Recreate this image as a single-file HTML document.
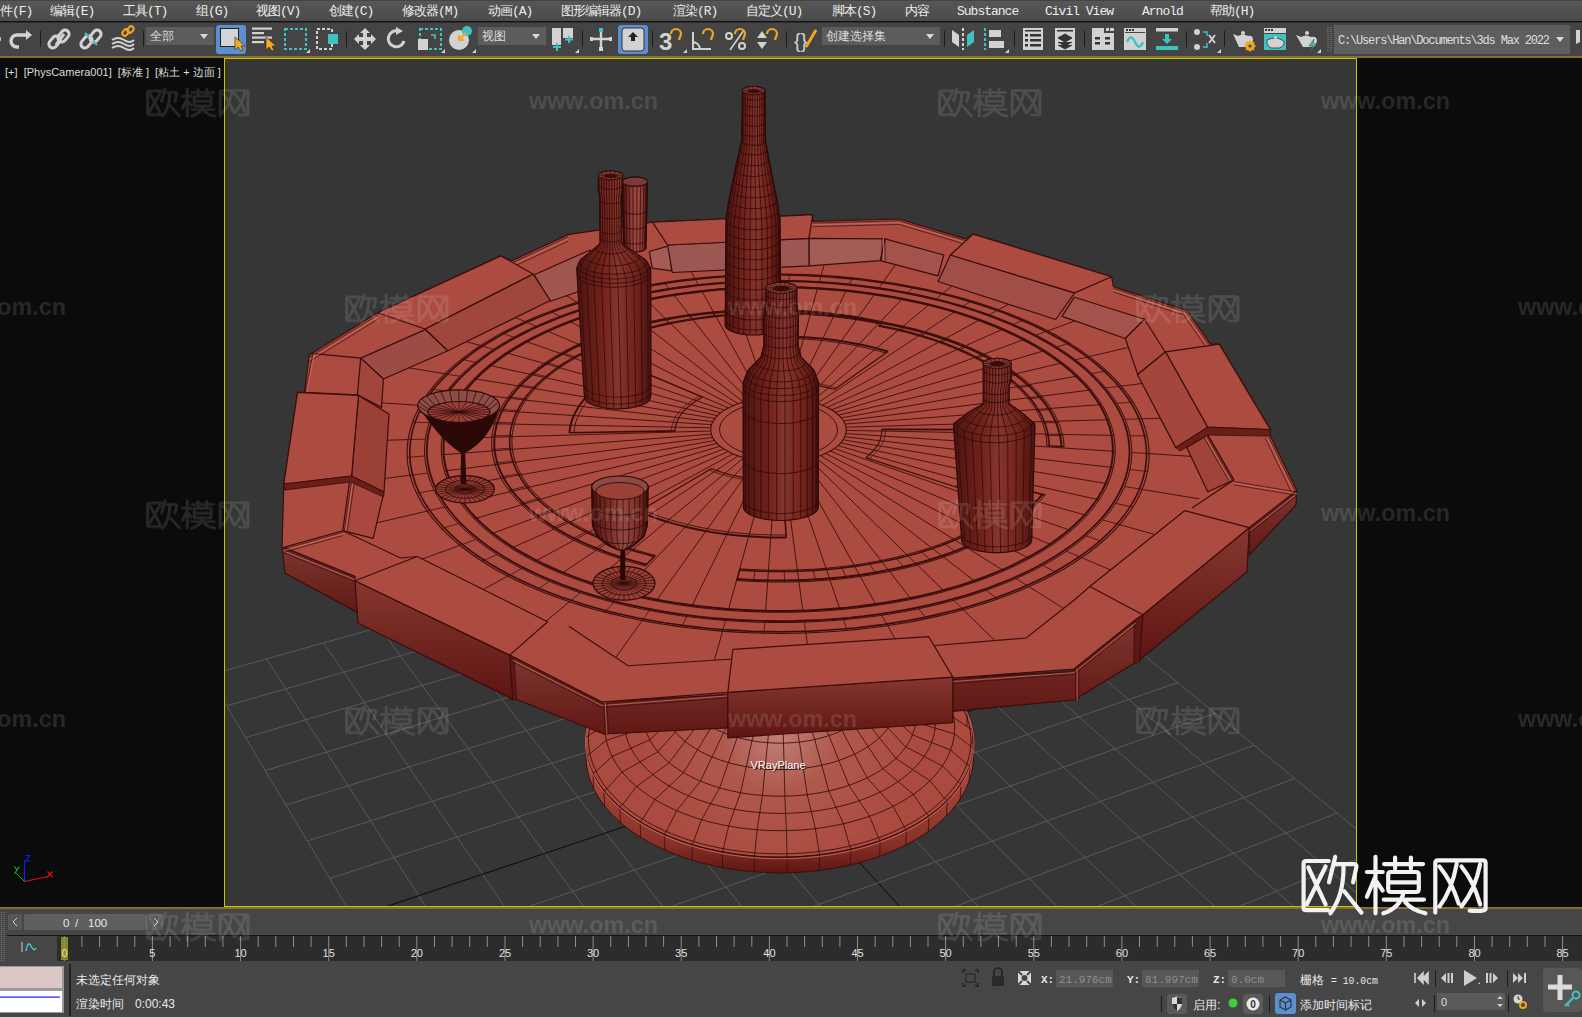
<!DOCTYPE html>
<html><head><meta charset="utf-8">
<style>
*{margin:0;padding:0;box-sizing:border-box}
html,body{width:1582px;height:1017px;overflow:hidden;background:#444;font-family:"Liberation Sans",sans-serif}
.abs{position:absolute}
#menubar{left:0;top:0;width:1582px;height:21px;background:linear-gradient(#3a3a3a 0px,#565656 1.5px,#4b4b4b 21px)}
#menubar span{position:absolute;top:4px;line-height:16px;font-family:"Liberation Mono",monospace;font-size:13px;color:#ececec;white-space:nowrap;letter-spacing:-1px}
#menubar .cj{width:12px}
#mbline{left:0;top:21px;width:1582px;height:2px;background:linear-gradient(#111 0,#111 1px,#2e2e2e 1px)}
#toolbar{left:0;top:23px;width:1582px;height:33px;background:#444}
.sep{position:absolute;top:31px;width:1px;height:16px;background:#1a1a1a}
.dd{position:absolute;top:27px;height:18px;background:#5c5c5c;color:#dcdcdc;font-size:12px;line-height:18px;padding-left:4px;white-space:nowrap}
.dd:after{content:"";position:absolute;right:6px;top:7px;border-left:4px solid transparent;border-right:4px solid transparent;border-top:5px solid #d8d8d8}
.actbtn{position:absolute;top:25px;width:30px;height:29px;background:#5b8fd0;border-radius:3px}
#olive1{left:0;top:56px;width:1582px;height:2px;background:#84712e}
#vp{left:0;top:58px;width:1582px;height:849px;background:#0b0b0b;overflow:hidden}
#olive2{left:0;top:907px;width:1582px;height:2px;background:#84712e}
#timeline{left:0;top:909px;width:1582px;height:108px;background:#464646}
.cj{display:inline-block;width:1em;font-style:normal;text-align:center}
</style></head><body>

<div id="menubar" class="abs">
<span style="left:0"><i class="cj">件</i>(F)</span>
<span style="left:50px"><i class="cj">编</i><i class="cj">辑</i>(E)</span>
<span style="left:123px"><i class="cj">工</i><i class="cj">具</i>(T)</span>
<span style="left:196px"><i class="cj">组</i>(G)</span>
<span style="left:256px"><i class="cj">视</i><i class="cj">图</i>(V)</span>
<span style="left:329px"><i class="cj">创</i><i class="cj">建</i>(C)</span>
<span style="left:402px"><i class="cj">修</i><i class="cj">改</i><i class="cj">器</i>(M)</span>
<span style="left:488px"><i class="cj">动</i><i class="cj">画</i>(A)</span>
<span style="left:561px"><i class="cj">图</i><i class="cj">形</i><i class="cj">编</i><i class="cj">辑</i><i class="cj">器</i>(D)</span>
<span style="left:673px"><i class="cj">渲</i><i class="cj">染</i>(R)</span>
<span style="left:746px"><i class="cj">自</i><i class="cj">定</i><i class="cj">义</i>(U)</span>
<span style="left:832px"><i class="cj">脚</i><i class="cj">本</i>(S)</span>
<span style="left:905px"><i class="cj">内</i><i class="cj">容</i></span>
<span style="left:957px">Substance</span>
<span style="left:1045px">Civil View</span>
<span style="left:1142px">Arnold</span>
<span style="left:1210px"><i class="cj">帮</i><i class="cj">助</i>(H)</span>
</div>
<div id="mbline" class="abs"></div>
<div id="toolbar" class="abs"></div>
<div class="dd" style="left:146px;width:68px"><i class="cj">全</i><i class="cj">部</i></div>
<div class="dd" style="left:478px;width:68px"><i class="cj">视</i><i class="cj">图</i></div>
<div class="dd" style="left:822px;width:118px"><i class="cj">创</i><i class="cj">建</i><i class="cj">选</i><i class="cj">择</i><i class="cj">集</i></div>

<svg class="abs" style="left:0;top:0" width="1582" height="56" viewBox="0 0 1582 56">
<g fill="none" stroke="#d2d2d2" stroke-width="3" stroke-linecap="butt">
<!-- partial icon at left -->
<circle cx="-2" cy="39" r="3" fill="#d2d2d2" stroke="none"/>
<!-- redo -->
<path d="M19 47 L17 47 A6 6 0 0 1 17 35 L27 35" stroke-width="3.4"/>
<path d="M26 30 L32 35 L26 40 Z" fill="#d2d2d2" stroke="none"/>
<!-- link -->
<path d="M56 45 L64 34" stroke-width="3"/>
<rect x="48" y="38" width="13" height="8" rx="4" transform="rotate(-50 54.5 42)"/>
<rect x="57" y="32" width="13" height="8" rx="4" transform="rotate(-50 63.5 36)"/>
<!-- unlink -->
<rect x="80" y="38" width="13" height="8" rx="4" transform="rotate(-50 86.5 42)"/>
<rect x="89" y="32" width="13" height="8" rx="4" transform="rotate(-50 95.5 36)"/>
<path d="M85 33 L89 37 M93 41 L97 45" stroke="#3ec3c3" stroke-width="2.2"/>
<!-- bind -->
<path d="M112 40 Q118 36 124 40 T134 40 M112 44 Q118 40 124 44 T134 44 M112 48 Q118 44 124 48 T134 48" stroke-width="1.8"/>
<rect x="122" y="30" width="7" height="5" rx="2.5" stroke="#f0a623" stroke-width="2" transform="rotate(-50 125.5 32.5)"/>
<rect x="127" y="27" width="7" height="5" rx="2.5" stroke="#f0a623" stroke-width="2" transform="rotate(-50 130.5 29.5)"/>
</g>
<g fill="#1c1c1c">
<rect x="40" y="31" width="1" height="16"/><rect x="143" y="31" width="1" height="16"/>
<rect x="346" y="31" width="1" height="16"/><rect x="582" y="31" width="1" height="16"/>
<rect x="652" y="31" width="1" height="16"/><rect x="786" y="31" width="1" height="16"/>
<rect x="944" y="31" width="1" height="16"/><rect x="1014" y="31" width="1" height="16"/>
<rect x="1084" y="31" width="1" height="16"/><rect x="1186" y="31" width="1" height="16"/>
<rect x="1224" y="31" width="1" height="16"/>
</g>
<!-- select object active -->
<rect x="216" y="25" width="30" height="29" rx="3" fill="#5b8fd0"/>
<rect x="220.5" y="28.5" width="18" height="18" fill="#d4d4d4" stroke="#222" stroke-width="1"/>
<path d="M235 37 L235 50 L238 47 L241 51 L243 50 L241 46 L245 46 Z" fill="#f5ad1e" stroke="#222" stroke-width="0.6"/>
<!-- select by name -->
<g fill="#d2d2d2"><rect x="252" y="27.5" width="20" height="2.2"/><rect x="252" y="32" width="12" height="2.2"/><rect x="252" y="36.5" width="20" height="2.2"/><rect x="252" y="41" width="12" height="2.2"/></g>
<path d="M266 37 L266 50 L269 47 L272 51 L274 50 L272 46 L276 46 Z" fill="#f5ad1e" stroke="#222" stroke-width="0.6"/>
<!-- rect region -->
<rect x="285" y="29" width="21" height="20" fill="none" stroke="#3ec3c3" stroke-width="2" stroke-dasharray="3 2"/>
<path d="M306 53 L310 53 L310 49 Z" fill="#d2d2d2"/>
<!-- window crossing -->
<rect x="317" y="29" width="15" height="20" fill="none" stroke="#d2d2d2" stroke-width="2" stroke-dasharray="3 2"/>
<rect x="328" y="34" width="10" height="10" fill="#3ec3c3"/>
<!-- move -->
<g fill="#d2d2d2"><path d="M365 28 L370 33 L367 33 L367 37 L371 37 L371 34 L376 39 L371 44 L371 41 L367 41 L367 45 L370 45 L365 50 L360 45 L363 45 L363 41 L359 41 L359 44 L354 39 L359 34 L359 37 L363 37 L363 33 L360 33 Z"/></g>
<!-- rotate -->
<path d="M404 41 A8 8 0 1 1 398 31" fill="none" stroke="#d2d2d2" stroke-width="3"/>
<path d="M396 27 L403 31 L396 35 Z" fill="#d2d2d2"/>
<!-- scale -->
<rect x="420" y="29" width="21" height="20" fill="none" stroke="#3ec3c3" stroke-width="2" stroke-dasharray="3 2"/>
<rect x="418" y="39" width="10" height="11" fill="#d2d2d2"/>
<path d="M431 35 L435 35 L435 39" fill="none" stroke="#3ec3c3" stroke-width="1.6"/>
<path d="M441 53 L445 53 L445 49 Z" fill="#d2d2d2"/>
<!-- placement -->
<circle cx="459" cy="40" r="10" fill="#d2d2d2"/>
<circle cx="467" cy="31" r="5" fill="#3ec3c3"/>
<path d="M466 33 L460 39 M459 35 L459 40 L464 40" fill="none" stroke="#f0a623" stroke-width="2"/>
<path d="M472 53 L476 53 L476 49 Z" fill="#d2d2d2"/>
<!-- pivot -->
<rect x="552" y="28" width="9" height="17" fill="#d2d2d2"/><rect x="563" y="28" width="10" height="10" fill="#d2d2d2"/>
<path d="M557 43 L557 51 M553 47 L561 47 M569 36 L569 43 M565 39.5 L573 39.5" stroke="#3ec3c3" stroke-width="2"/>
<path d="M575 53 L579 53 L579 49 Z" fill="#d2d2d2"/>
<!-- manipulate -->
<path d="M601 32 L601 50 M590 39 L612 39" stroke="#d2d2d2" stroke-width="2.4"/>
<rect x="599" y="28" width="4" height="4" fill="#3ec3c3"/><rect x="590" y="37" width="3" height="4" fill="#d2d2d2"/><rect x="609" y="37" width="3" height="4" fill="#d2d2d2"/><rect x="599" y="47" width="4" height="4" fill="#d2d2d2"/>
<!-- kbd override active -->
<rect x="618" y="25" width="30" height="29" rx="3" fill="#5b8fd0"/>
<rect x="622" y="28" width="22" height="23" rx="3" fill="#d2d2d2" stroke="#333" stroke-width="1"/>
<path d="M633 32 L638 37 L635 37 L635 41 L631 41 L631 37 L628 37 Z" fill="#222"/>
<!-- snaps -->
<text x="659" y="50" font-family="Liberation Sans" font-weight="bold" font-size="24" fill="#d2d2d2">3</text>
<path d="M671 34 A5 5 0 0 1 681 34 L679 40" fill="none" stroke="#f0a623" stroke-width="2.2"/>
<path d="M683 53 L687 53 L687 49 Z" fill="#d2d2d2"/>
<path d="M693 32 L693 49 L711 49 M693 42 A8 8 0 0 1 700 49" fill="none" stroke="#d2d2d2" stroke-width="2"/>
<path d="M703 34 A5 5 0 0 1 713 34 L711 40" fill="none" stroke="#f0a623" stroke-width="2.2"/>
<circle cx="729" cy="36" r="3" fill="none" stroke="#d2d2d2" stroke-width="2"/><circle cx="742" cy="46" r="3" fill="none" stroke="#d2d2d2" stroke-width="2"/>
<path d="M730 50 L744 30" stroke="#d2d2d2" stroke-width="1.6"/>
<path d="M735 34 A5 5 0 0 1 745 34 L743 40" fill="none" stroke="#f0a623" stroke-width="2.2"/>
<path d="M757 38 L762 31 L767 38 Z M757 42 L767 42 L762 49 Z" fill="#d2d2d2"/>
<path d="M767 34 A5 5 0 0 1 777 34 L775 40" fill="none" stroke="#f0a623" stroke-width="2.2"/>
<!-- {} -->
<text x="794" y="48" font-family="Liberation Sans" font-size="20" fill="#d2d2d2">{}</text>
<path d="M806 47 L816 30" stroke="#f0a623" stroke-width="3"/>
<!-- mirror -->
<path d="M952 30 L959 35 L959 47 L952 42 Z" fill="#d2d2d2"/>
<path d="M963 28 L963 50" stroke="#d2d2d2" stroke-width="2" stroke-dasharray="3 2"/>
<path d="M974 30 L967 35 L967 47 L974 42 Z" fill="#3ec3c3"/>
<!-- align -->
<path d="M985 28 L985 50" stroke="#3ec3c3" stroke-width="2" stroke-dasharray="3 2"/>
<rect x="989" y="30" width="12" height="7" fill="#d2d2d2"/><rect x="989" y="41" width="15" height="7" fill="#d2d2d2"/>
<path d="M1005 53 L1009 53 L1009 49 Z" fill="#d2d2d2"/>
<!-- scene explorer -->
<rect x="1023" y="28" width="20" height="22" fill="#d2d2d2"/>
<g fill="#333"><rect x="1025" y="30" width="16" height="1.5"/><rect x="1025" y="34" width="3" height="2.5"/><rect x="1030" y="34" width="11" height="2.5"/><rect x="1025" y="39" width="3" height="2.5"/><rect x="1030" y="39" width="11" height="2.5"/><rect x="1025" y="44" width="3" height="2.5"/><rect x="1030" y="44" width="11" height="2.5"/></g>
<!-- layer explorer -->
<rect x="1055" y="28" width="20" height="22" fill="#d2d2d2"/>
<rect x="1057" y="30" width="16" height="1.5" fill="#333"/>
<path d="M1058 38 L1065 34 L1072 38 L1065 42 Z M1058 42 L1065 46 L1072 42 M1058 45 L1065 49 L1072 45" fill="#333" stroke="#333" stroke-width="1"/>
<!-- ribbon -->
<path d="M1092 28 L1104 28 L1104 33 L1114 33 L1114 50 L1092 50 Z" fill="#d2d2d2"/>
<rect x="1106" y="28" width="3" height="3" fill="#d2d2d2"/><rect x="1110" y="28" width="4" height="3" fill="#d2d2d2"/>
<g fill="#333"><rect x="1095" y="37" width="5" height="2.5"/><rect x="1105" y="37" width="5" height="2.5"/><rect x="1095" y="42" width="5" height="2.5"/><rect x="1105" y="42" width="5" height="2.5"/></g>
<!-- curve editor -->
<rect x="1124" y="28" width="22" height="22" fill="#d2d2d2"/>
<rect x="1125" y="32" width="20" height="1" fill="#444"/>
<g fill="#333"><rect x="1126" y="29" width="2" height="2"/><rect x="1129" y="29" width="2" height="2"/><rect x="1132" y="29" width="2" height="2"/></g>
<path d="M1127 42 Q1131 33 1135 42 T1143 42" fill="none" stroke="#3ec3c3" stroke-width="2.4"/>
<!-- dope download -->
<rect x="1156" y="28" width="22" height="3.5" fill="#d2d2d2"/>
<rect x="1156" y="46" width="22" height="4" fill="#3ec3c3"/>
<path d="M1165 34 L1169 34 L1169 39 L1172 39 L1167 44 L1162 39 L1165 39 Z" fill="#3ec3c3"/>
<!-- schematic -->
<circle cx="1197" cy="32" r="3" fill="#d2d2d2"/><circle cx="1197" cy="47" r="3" fill="#d2d2d2"/>
<path d="M1203 32 L1207 32 L1207 36 M1203 47 L1207 47 L1207 43" fill="none" stroke="#3ec3c3" stroke-width="1.5"/>
<path d="M1209 35 L1215 43 M1215 35 L1209 43" stroke="#d2d2d2" stroke-width="2"/>
<path d="M1217 53 L1221 53 L1221 49 Z" fill="#d2d2d2"/>
<!-- teapots -->
<g fill="#d2d2d2">
<path d="M1233 34 L1238 36 Q1243 33 1248 36 Q1253 35 1253 40 Q1252 44 1249 45 L1247 47 L1239 47 Z"/><circle cx="1243" cy="33" r="2"/>
</g>
<circle cx="1250" cy="46" r="3.6" fill="none" stroke="#f0a623" stroke-width="2.4"/>
<path d="M1250 40.5 L1250 51.5 M1244.5 46 L1255.5 46 M1246 42 L1254 50 M1254 42 L1246 50" stroke="#f0a623" stroke-width="1.5"/>
<circle cx="1250" cy="46" r="1.6" fill="#444"/>
<rect x="1264" y="28" width="22" height="5" fill="#d2d2d2"/><g fill="#333"><rect x="1265" y="29" width="2" height="2"/><rect x="1268" y="29" width="2" height="2"/><rect x="1271" y="29" width="2" height="2"/></g>
<rect x="1264" y="34" width="22" height="16" fill="#3ec3c3"/>
<path d="M1267 40 Q1275 36 1282 40 Q1285 41 1284 44 Q1282 48 1279 48 L1271 48 Q1268 47 1267 43 Z" fill="#d2d2d2" stroke="#333" stroke-width="0.8"/><circle cx="1275.5" cy="37.5" r="1.5" fill="#d2d2d2"/>
<g fill="#d2d2d2">
<path d="M1296 35 L1301 37 Q1306 34 1311 37 Q1317 36 1317 41 Q1316 45 1313 46 L1311 47 L1303 47 Z"/><circle cx="1307" cy="33" r="2"/>
</g>
<path d="M1314 39 L1309 46 L1313 46 L1310 51 L1317 44 L1313 44 Z" fill="#3ec3c3" stroke="#444" stroke-width="0.6"/>
<path d="M1317 53 L1321 53 L1321 49 Z" fill="#d2d2d2"/>
<path d="M1328 27 L1328 53 M1331 27 L1331 53" stroke="#9a9a9a" stroke-width="0.8" stroke-dasharray="1 1"/>
<!-- path dropdown -->
<rect x="1334" y="25" width="236" height="29" fill="#5e5e5e"/>
<text x="1338" y="44" font-family="Liberation Mono" font-size="12" fill="#dedede" textLength="212">C:\Users\Han\Documents\3ds Max 2022</text>
<path d="M1556 37 L1564 37 L1560 42 Z" fill="#d8d8d8"/>
<path d="M1576 30 L1580 30 L1580 42 L1576 44 Z" fill="#d2d2d2"/>
</svg>

<div id="olive1" class="abs"></div><div id="vp" class="abs"></div><div id="olive2" class="abs"></div>
<svg class="abs" style="left:0;top:0" width="1582" height="1017" viewBox="0 0 1582 1017">
<defs>
<clipPath id="cf"><rect x="225" y="59" width="1131" height="847"/></clipPath>
<linearGradient id="sideg" x1="0" y1="0" x2="0" y2="1"><stop offset="0" stop-color="#7d3630"/><stop offset="1" stop-color="#621814"/></linearGradient>
<linearGradient id="blkg" x1="0" y1="0" x2="0" y2="1"><stop offset="0" stop-color="#86372f"/><stop offset="1" stop-color="#5e1512"/></linearGradient>
<linearGradient id="pinkg" x1="0" y1="0" x2="0" y2="1"><stop offset="0" stop-color="#a8605a"/><stop offset="1" stop-color="#95504b"/></linearGradient>
<radialGradient id="pedg" cx="0.5" cy="0.0" r="0.75"><stop offset="0" stop-color="#b86e68"/><stop offset="0.45" stop-color="#ad4d42"/><stop offset="1" stop-color="#ab4a3e"/></radialGradient>
<symbol id="logo" viewBox="0 0 190 61" overflow="visible"><path d="M28.1,6.0 L5.4,6.0 Q3.0,6.0 3.0,8.5 L3.0,53.0 Q3.0,55.2 5.4,55.2 L27.4,55.2 M7.8,12.5 L25.0,49.4 M25.0,11.5 L6.4,49.0 M34.6,1.9 L28.4,27.3 M33.9,9.1 L53.9,9.1 Q56.0,9.1 55.8,12.0 L52.5,27.3 M42.9,10.8 Q43.4,40.0 29.8,58.3 M43.6,36.3 L60.8,57.6 M66.3,17.0 L82.1,17.0 M74.9,1.9 L74.9,58.3 M74.9,21.2 L66.3,41.8 M76.6,27.3 L82.1,35.6 M83.5,9.1 L122.4,9.1 M94.5,2.6 L94.5,13.6 M110.3,2.6 L110.3,13.6 M90.4,17.0 L115.4,17.0 Q118.2,17.0 118.2,20.0 L118.2,34.0 Q118.2,37.0 115.4,37.0 L90.4,37.0 Q87.6,37.0 87.6,34.0 L87.6,20.0 Q87.6,17.0 90.4,17.0 Z M87.6,27.3 L118.2,27.3 M83.1,44.6 L123.4,44.6 M103.1,37.0 Q99.4,53.0 82.8,58.3 M104.8,47.3 Q111.4,55.0 124.8,58.3 M134.7,57.6 L134.7,8.0 Q134.7,5.3 137.4,5.3 L182.4,5.3 Q185.0,5.3 185.0,8.0 L185.0,54.0 Q184.4,57.0 169.1,55.6 M138.9,11.5 Q151.4,27.0 158.1,48.7 M156.1,8.8 Q151.4,35.0 138.9,51.4 M160.9,11.5 Q173.4,27.0 179.5,49.4 M179.5,9.5 Q174.4,35.0 160.9,51.4" fill="none" stroke-linecap="round" stroke-linejoin="round"/></symbol>
</defs>
<rect x="224.5" y="58.5" width="1132" height="848" fill="#363636" stroke="#c8c800" stroke-width="1"/>
<g clip-path="url(#cf)">
<line x1="208.3" y1="675.3" x2="552.1" y2="1250.4" stroke="#595959" stroke-width="1"/><line x1="266.6" y1="658.9" x2="626.7" y2="1219.5" stroke="#595959" stroke-width="1"/><line x1="323.6" y1="642.9" x2="699.1" y2="1189.4" stroke="#595959" stroke-width="1"/><line x1="379.5" y1="627.2" x2="769.4" y2="1160.2" stroke="#595959" stroke-width="1"/><line x1="434.1" y1="611.8" x2="837.7" y2="1131.8" stroke="#595959" stroke-width="1"/><line x1="487.6" y1="596.8" x2="904.1" y2="1104.2" stroke="#595959" stroke-width="1"/><line x1="540.0" y1="582.1" x2="968.7" y2="1077.4" stroke="#595959" stroke-width="1"/><line x1="591.4" y1="567.6" x2="1031.4" y2="1051.4" stroke="#0a0a0a" stroke-width="1"/><line x1="641.7" y1="553.5" x2="1092.5" y2="1026.0" stroke="#595959" stroke-width="1"/><line x1="690.9" y1="539.6" x2="1152.0" y2="1001.3" stroke="#595959" stroke-width="1"/><line x1="739.3" y1="526.0" x2="1209.9" y2="977.2" stroke="#595959" stroke-width="1"/><line x1="786.6" y1="512.7" x2="1266.3" y2="953.8" stroke="#595959" stroke-width="1"/><line x1="833.1" y1="499.7" x2="1321.3" y2="931.0" stroke="#595959" stroke-width="1"/><line x1="878.6" y1="486.9" x2="1374.8" y2="908.7" stroke="#595959" stroke-width="1"/><line x1="923.3" y1="474.3" x2="1427.1" y2="887.0" stroke="#595959" stroke-width="1"/><line x1="208.3" y1="675.3" x2="923.3" y2="474.3" stroke="#595959" stroke-width="1"/><line x1="226.5" y1="705.9" x2="951.3" y2="497.2" stroke="#595959" stroke-width="1"/><line x1="245.5" y1="737.6" x2="980.2" y2="521.0" stroke="#595959" stroke-width="1"/><line x1="265.2" y1="770.6" x2="1010.2" y2="545.5" stroke="#595959" stroke-width="1"/><line x1="285.8" y1="805.1" x2="1041.3" y2="571.0" stroke="#595959" stroke-width="1"/><line x1="307.3" y1="841.0" x2="1073.5" y2="597.4" stroke="#595959" stroke-width="1"/><line x1="329.7" y1="878.5" x2="1106.9" y2="624.7" stroke="#595959" stroke-width="1"/><line x1="353.1" y1="917.7" x2="1141.6" y2="653.1" stroke="#0a0a0a" stroke-width="1"/><line x1="377.6" y1="958.7" x2="1177.6" y2="682.7" stroke="#595959" stroke-width="1"/><line x1="403.3" y1="1001.6" x2="1215.1" y2="713.4" stroke="#595959" stroke-width="1"/><line x1="430.2" y1="1046.6" x2="1254.1" y2="745.3" stroke="#595959" stroke-width="1"/><line x1="458.4" y1="1093.8" x2="1294.6" y2="778.5" stroke="#595959" stroke-width="1"/><line x1="488.0" y1="1143.3" x2="1336.9" y2="813.2" stroke="#595959" stroke-width="1"/><line x1="519.2" y1="1195.5" x2="1381.0" y2="849.3" stroke="#595959" stroke-width="1"/><line x1="552.1" y1="1250.4" x2="1427.1" y2="887.0" stroke="#595959" stroke-width="1"/>
<linearGradient id="pedside" x1="0" y1="0.55" x2="0" y2="1"><stop offset="0" stop-color="#a84a3f"/><stop offset="0.7" stop-color="#8a3229"/><stop offset="1" stop-color="#5e1612"/></linearGradient>
<polygon points="942.9,694.4 946.8,698.2 950.4,702.1 953.7,706.1 956.9,710.1 959.7,714.3 962.4,718.5 964.7,722.8 966.8,727.1 968.6,731.5 970.1,735.9 971.3,740.4 972.3,745.0 972.9,749.5 973.2,754.1 973.3,758.7 973.0,763.3 972.4,767.9 971.6,772.5 970.4,777.1 968.9,781.7 967.1,786.3 965.0,790.8 962.5,795.2 959.8,799.6 956.7,804.0 953.4,808.3 949.8,812.5 945.8,816.6 941.6,820.7 937.1,824.6 932.3,828.5 927.2,832.2 921.9,835.8 916.3,839.3 910.5,842.6 904.4,845.8 898.1,848.8 891.6,851.7 884.9,854.4 877.9,857.0 870.8,859.4 863.5,861.6 856.1,863.6 848.5,865.4 840.8,867.0 833.0,868.5 825.0,869.7 817.0,870.8 808.9,871.6 800.8,872.2 792.6,872.6 784.4,872.9 776.1,872.9 767.9,872.6 759.7,872.2 751.6,871.6 743.5,870.8 735.4,869.7 727.5,868.5 719.6,867.0 711.9,865.4 704.3,863.6 696.8,861.6 689.5,859.4 682.4,857.0 675.4,854.4 668.7,851.7 662.1,848.8 655.8,845.8 649.7,842.6 643.8,839.2 638.2,835.8 632.8,832.1 627.7,828.4 622.9,824.6 618.3,820.6 614.0,816.6 610.1,812.4 606.4,808.2 603.0,803.9 599.9,799.6 597.1,795.1 594.7,790.7 592.5,786.1 590.6,781.6 589.1,777.0 587.9,772.4 587.0,767.8 586.3,763.2 586.0,758.6 586.0,753.9 586.4,749.4 587.0,744.8 587.9,740.3 589.1,735.8 590.5,731.3 592.3,726.9 594.3,722.6 596.7,718.3 599.3,714.1 602.1,709.9 605.2,705.9 608.6,701.9 612.1,698.0 616.0,694.3 620.0,690.6 624.3,687.0 628.8,683.5 633.5,680.1 638.4,676.9 643.5,673.8 648.7,670.8 654.2,667.9 659.8,665.2 665.6,662.5 671.5,660.1 677.5,657.7 683.7,655.5 690.0,653.5 696.4,651.6 703.0,649.8 709.6,648.2 716.3,646.7 723.1,645.4 730.0,644.2 736.9,643.2 743.9,642.4 750.9,641.7 758.0,641.1 765.1,640.7 772.2,640.5 779.3,640.4 786.4,640.5 793.5,640.8 800.6,641.2 807.7,641.7 814.7,642.4 821.7,643.3 828.7,644.3 835.5,645.5 842.3,646.8 849.1,648.3 855.7,649.9 862.2,651.7 868.7,653.6 875.0,655.7 881.2,657.9 887.2,660.2 893.2,662.7 898.9,665.3 904.6,668.1 910.0,671.0 915.3,674.0 920.4,677.1 925.3,680.3 930.0,683.7 934.5,687.2 938.8,690.8 942.9,694.4" fill="url(#pedside)" stroke="#3a0e0c" stroke-width="1"/>
<radialGradient id="pedhl" gradientUnits="userSpaceOnUse" cx="779" cy="735" r="230" fx="779" fy="735"><stop offset="0" stop-color="#c08078"/><stop offset="0.25" stop-color="#b0584c"/><stop offset="0.6" stop-color="#ab4b3f"/><stop offset="1" stop-color="#a84a3e"/></radialGradient>
<path d="M943.6,679.6 947.5,683.4 951.1,687.3 954.5,691.2 957.6,695.2 960.5,699.4 963.1,703.5 965.5,707.8 967.6,712.1 969.4,716.5 970.9,720.9 972.1,725.4 973.1,729.9 973.7,734.4 974.1,739.0 974.1,743.5 973.9,748.1 973.3,752.7 972.4,757.3 971.2,761.9 969.7,766.4 967.9,770.9 965.8,775.4 963.3,779.9 960.6,784.3 957.5,788.6 954.2,792.9 950.5,797.1 946.6,801.2 942.3,805.2 937.8,809.1 933.0,812.9 927.9,816.6 922.6,820.2 916.9,823.7 911.1,827.0 905.0,830.2 898.7,833.2 892.1,836.1 885.4,838.8 878.4,841.3 871.3,843.7 864.0,845.9 856.5,847.9 848.9,849.7 841.1,851.3 833.3,852.8 825.3,854.0 817.2,855.0 809.1,855.9 800.9,856.5 792.7,856.9 784.4,857.1 776.2,857.1 767.9,856.9 759.7,856.5 751.5,855.8 743.4,855.0 735.3,854.0 727.3,852.7 719.4,851.3 711.7,849.7 704.0,847.9 696.5,845.9 689.2,843.7 682.0,841.3 675.0,838.7 668.3,836.0 661.7,833.2 655.3,830.1 649.2,827.0 643.3,823.6 637.6,820.2 632.2,816.6 627.1,812.9 622.3,809.1 617.7,805.1 613.4,801.1 609.4,797.0 605.7,792.8 602.3,788.5 599.2,784.2 596.4,779.8 593.9,775.3 591.8,770.8 589.9,766.3 588.4,761.7 587.1,757.1 586.2,752.6 585.6,748.0 585.3,743.4 585.3,738.8 585.6,734.2 586.2,729.7 587.1,725.2 588.3,720.7 589.8,716.3 591.6,711.9 593.7,707.6 596.0,703.3 598.6,699.1 601.5,695.0 604.6,691.0 607.9,687.0 611.5,683.2 615.4,679.4 619.5,675.8 623.8,672.2 628.3,668.7 633.0,665.4 637.9,662.2 643.0,659.1 648.3,656.1 653.8,653.2 659.4,650.5 665.2,647.9 671.1,645.4 677.2,643.1 683.4,640.9 689.7,638.9 696.2,637.0 702.7,635.2 709.4,633.6 716.1,632.2 723.0,630.9 729.9,629.7 736.8,628.7 743.8,627.9 750.9,627.2 758.0,626.6 765.1,626.2 772.2,626.0 779.4,625.9 786.5,626.0 793.6,626.3 800.8,626.7 807.9,627.2 814.9,627.9 821.9,628.8 828.9,629.8 835.8,631.0 842.6,632.3 849.4,633.7 856.0,635.4 862.6,637.1 869.0,639.0 875.4,641.1 881.6,643.3 887.7,645.6 893.6,648.1 899.4,650.7 905.1,653.4 910.6,656.3 915.9,659.3 921.0,662.4 925.9,665.6 930.6,669.0 935.2,672.4 939.5,676.0 943.6,679.6 Z" fill="url(#pedhl)" stroke="#3a0e0c" stroke-width="1"/>
<polyline points="943.6,679.6 948.7,684.7 953.4,689.9 957.6,695.3 961.4,700.8 964.8,706.4 967.6,712.2 970.0,718.0 971.8,724.0 973.1,730.0 973.9,736.0 974.1,742.2 973.8,748.3 973.0,754.4 971.6,760.5 969.6,766.6 967.1,772.6 964.1,778.6 960.4,784.5 956.3,790.3 951.6,795.9 946.3,801.4 940.6,806.8 934.3,811.9 927.6,816.9 920.3,821.6 912.6,826.1 904.5,830.4 896.0,834.4 887.1,838.1 877.8,841.5 868.2,844.6 858.3,847.4 848.2,849.9 837.8,852.0 827.2,853.7 816.4,855.1 805.5,856.1 794.6,856.8 783.5,857.1 772.5,857.0 761.5,856.6 750.5,855.8 739.7,854.6 729.0,853.0 718.4,851.1 708.1,848.9 698.0,846.3 688.2,843.4 678.7,840.1 669.5,836.6 660.7,832.7 652.3,828.6 644.3,824.3 636.8,819.6 629.7,814.8 623.1,809.7 617.0,804.5 611.4,799.1 606.3,793.5 601.8,787.8 597.8,782.0 594.3,776.0 591.4,770.0 589.1,763.9 587.3,757.8 586.1,751.7 585.4,745.6 585.3,739.4 585.7,733.3 586.7,727.3 588.2,721.3 590.2,715.4 592.7,709.6 595.7,703.9 599.2,698.3 603.1,692.8 607.5,687.5 612.4,682.4 617.6,677.4 623.3,672.6 629.3,668.0 635.7,663.6 642.5,659.4 649.6,655.4 657.0,651.7 664.6,648.1 672.6,644.9 680.8,641.8 689.2,639.1 697.8,636.5 706.6,634.3 715.6,632.3 724.7,630.5 734.0,629.1 743.3,627.9 752.8,627.0 762.3,626.4 771.8,626.0 781.3,625.9 790.9,626.1 800.4,626.6 809.9,627.4 819.3,628.4 828.6,629.7 837.8,631.3 846.9,633.2 855.8,635.3 864.6,637.7 873.1,640.3 881.5,643.2 889.6,646.4 897.4,649.7 905.0,653.4 912.3,657.2 919.2,661.3 925.9,665.6 932.2,670.1 938.1,674.8 943.6,679.6 943.6,679.6" fill="none" stroke="#3a0e0c" stroke-width="0.9" />
<polyline points="941.0,679.5 946.0,684.4 950.6,689.6 954.8,694.9 958.5,700.3 961.8,705.8 964.6,711.5 966.9,717.2 968.7,723.1 970.0,729.0 970.7,735.0 971.0,741.0 970.6,747.0 969.8,753.0 968.4,759.0 966.5,765.0 964.0,770.9 961.0,776.8 957.4,782.5 953.3,788.2 948.7,793.8 943.5,799.2 937.8,804.4 931.7,809.5 925.0,814.3 917.9,819.0 910.3,823.4 902.4,827.6 894.0,831.5 885.2,835.2 876.1,838.5 866.7,841.6 856.9,844.3 847.0,846.7 836.7,848.8 826.3,850.5 815.8,851.8 805.1,852.9 794.3,853.5 783.5,853.8 772.6,853.7 761.8,853.3 751.1,852.5 740.4,851.3 729.9,849.8 719.5,847.9 709.4,845.7 699.5,843.2 689.8,840.3 680.5,837.1 671.5,833.7 662.8,829.9 654.5,825.9 646.7,821.6 639.3,817.0 632.3,812.3 625.8,807.3 619.8,802.2 614.3,796.9 609.3,791.4 604.8,785.8 600.8,780.0 597.4,774.2 594.6,768.3 592.3,762.4 590.5,756.4 589.3,750.3 588.6,744.3 588.5,738.3 588.9,732.3 589.8,726.3 591.3,720.5 593.2,714.6 595.7,708.9 598.7,703.3 602.1,697.8 605.9,692.4 610.3,687.2 615.0,682.1 620.2,677.2 625.7,672.5 631.7,668.0 638.0,663.7 644.6,659.5 651.6,655.6 658.9,651.9 666.4,648.5 674.2,645.2 682.3,642.3 690.6,639.5 699.1,637.0 707.8,634.8 716.6,632.8 725.6,631.1 734.7,629.7 743.9,628.5 753.2,627.6 762.5,627.0 771.9,626.7 781.3,626.6 790.7,626.8 800.1,627.3 809.4,628.0 818.7,629.1 827.9,630.3 836.9,631.9 845.9,633.7 854.6,635.8 863.3,638.2 871.7,640.8 879.9,643.6 887.9,646.7 895.6,650.0 903.0,653.6 910.2,657.4 917.1,661.4 923.6,665.6 929.8,670.1 935.6,674.7 941.0,679.5 941.0,679.5" fill="none" stroke="#3a0e0c" stroke-width="0.9" />
<polyline points="927.7,672.9 932.3,677.5 936.5,682.1 940.3,687.0 943.7,691.9 946.6,697.0 949.1,702.1 951.1,707.4 952.7,712.7 953.9,718.0 954.5,723.5 954.6,728.9 954.3,734.4 953.5,739.8 952.2,745.3 950.3,750.7 948.0,756.1 945.2,761.4 941.9,766.6 938.1,771.7 933.8,776.7 929.1,781.6 923.9,786.3 918.2,790.9 912.1,795.3 905.6,799.4 898.7,803.4 891.4,807.2 883.8,810.7 875.8,814.0 867.5,817.0 858.9,819.7 850.0,822.2 840.9,824.3 831.6,826.2 822.2,827.7 812.5,829.0 802.8,829.9 793.0,830.4 783.2,830.7 773.3,830.6 763.5,830.2 753.7,829.5 744.0,828.5 734.5,827.1 725.0,825.4 715.8,823.4 706.8,821.2 698.0,818.6 689.5,815.7 681.3,812.6 673.4,809.2 665.8,805.6 658.7,801.7 651.9,797.7 645.5,793.4 639.5,788.9 634.0,784.3 628.9,779.5 624.3,774.5 620.2,769.5 616.5,764.3 613.4,759.0 610.7,753.7 608.6,748.3 606.9,742.9 605.7,737.4 605.1,731.9 604.9,726.5 605.2,721.0 606.0,715.6 607.3,710.3 609.0,705.0 611.2,699.8 613.9,694.7 616.9,689.6 620.5,684.8 624.4,680.0 628.7,675.4 633.4,670.9 638.5,666.6 643.9,662.4 649.6,658.5 655.7,654.7 662.1,651.1 668.7,647.7 675.7,644.5 682.8,641.6 690.2,638.8 697.8,636.3 705.6,634.1 713.6,632.0 721.7,630.2 730.0,628.6 738.4,627.3 746.8,626.3 755.4,625.4 764.0,624.9 772.6,624.5 781.2,624.5 789.9,624.7 798.5,625.1 807.1,625.8 815.6,626.7 824.0,627.9 832.4,629.4 840.6,631.0 848.7,632.9 856.6,635.1 864.3,637.5 871.8,640.1 879.2,642.9 886.2,646.0 893.1,649.3 899.6,652.7 905.9,656.4 911.9,660.3 917.5,664.3 922.8,668.5 927.7,672.9 927.7,672.9" fill="none" stroke="#3a0e0c" stroke-width="0.9" />
<polyline points="911.9,674.0 916.0,678.0 919.7,682.2 923.0,686.5 925.9,690.9 928.5,695.4 930.7,700.0 932.4,704.7 933.8,709.4 934.7,714.1 935.3,719.0 935.3,723.8 935.0,728.6 934.2,733.5 933.0,738.3 931.3,743.1 929.2,747.8 926.6,752.5 923.6,757.1 920.2,761.6 916.4,766.0 912.1,770.3 907.5,774.5 902.4,778.5 897.0,782.3 891.2,786.0 885.0,789.5 878.6,792.8 871.8,795.9 864.7,798.8 857.3,801.4 849.7,803.8 841.9,805.9 833.8,807.8 825.6,809.4 817.2,810.8 808.7,811.9 800.2,812.7 791.5,813.2 782.8,813.4 774.1,813.3 765.4,813.0 756.8,812.3 748.2,811.4 739.8,810.2 731.5,808.8 723.3,807.0 715.3,805.0 707.5,802.8 700.0,800.3 692.7,797.6 685.7,794.6 679.0,791.4 672.6,788.0 666.6,784.4 660.9,780.7 655.6,776.8 650.6,772.7 646.1,768.4 642.0,764.1 638.3,759.6 635.0,755.1 632.1,750.4 629.7,745.7 627.7,740.9 626.2,736.1 625.1,731.3 624.5,726.5 624.2,721.6 624.5,716.8 625.1,712.0 626.2,707.2 627.7,702.5 629.6,697.9 631.9,693.3 634.6,688.9 637.7,684.5 641.1,680.3 644.9,676.1 649.1,672.1 653.6,668.3 658.4,664.6 663.5,661.0 668.9,657.6 674.5,654.4 680.5,651.4 686.6,648.5 693.0,645.9 699.6,643.4 706.4,641.2 713.4,639.1 720.5,637.3 727.8,635.7 735.2,634.3 742.7,633.1 750.3,632.1 757.9,631.4 765.6,630.9 773.4,630.6 781.1,630.5 788.9,630.7 796.6,631.1 804.3,631.7 811.9,632.6 819.4,633.6 826.9,634.9 834.3,636.4 841.5,638.1 848.6,640.1 855.5,642.2 862.2,644.6 868.7,647.1 875.0,649.9 881.1,652.8 887.0,655.9 892.6,659.2 897.8,662.6 902.9,666.3 907.6,670.0 911.9,674.0 911.9,674.0" fill="none" stroke="#3a0e0c" stroke-width="0.9" />
<polyline points="896.0,674.9 899.5,678.5 902.7,682.1 905.6,685.9 908.1,689.8 910.3,693.7 912.2,697.7 913.7,701.8 914.8,706.0 915.6,710.1 916.0,714.3 916.0,718.5 915.6,722.8 914.9,727.0 913.8,731.2 912.3,735.3 910.4,739.5 908.1,743.5 905.4,747.5 902.4,751.5 899.0,755.3 895.2,759.0 891.1,762.6 886.7,766.1 881.9,769.4 876.9,772.6 871.5,775.6 865.8,778.5 859.9,781.1 853.7,783.6 847.3,785.9 840.6,787.9 833.8,789.8 826.8,791.4 819.7,792.8 812.4,793.9 805.0,794.9 797.5,795.6 790.0,796.0 782.4,796.2 774.9,796.1 767.3,795.8 759.8,795.3 752.4,794.5 745.0,793.5 737.8,792.2 730.7,790.7 723.7,789.0 716.9,787.1 710.4,784.9 704.0,782.5 697.9,780.0 692.0,777.2 686.5,774.3 681.2,771.2 676.2,768.0 671.5,764.6 667.2,761.0 663.2,757.4 659.6,753.6 656.3,749.7 653.4,745.8 650.8,741.7 648.7,737.6 646.9,733.5 645.5,729.3 644.5,725.1 643.9,720.9 643.6,716.7 643.8,712.4 644.3,708.2 645.2,704.1 646.4,700.0 648.1,695.9 650.0,691.9 652.4,688.0 655.0,684.2 658.0,680.4 661.3,676.8 664.9,673.3 668.8,669.9 673.0,666.6 677.5,663.5 682.2,660.5 687.2,657.7 692.4,655.0 697.8,652.5 703.4,650.2 709.2,648.0 715.2,646.0 721.3,644.2 727.6,642.6 734.0,641.1 740.5,639.9 747.1,638.8 753.8,638.0 760.5,637.3 767.3,636.9 774.1,636.6 781.0,636.6 787.8,636.7 794.6,637.1 801.4,637.6 808.1,638.4 814.8,639.3 821.4,640.4 827.8,641.8 834.2,643.3 840.4,645.0 846.5,646.9 852.4,649.0 858.2,651.2 863.7,653.7 869.0,656.2 874.2,659.0 879.0,661.9 883.7,664.9 888.1,668.1 892.2,671.4 896.0,674.9 896.0,674.9" fill="none" stroke="#3a0e0c" stroke-width="0.9" />
<polyline points="880.1,666.6 883.1,669.7 885.9,672.8 888.3,676.1 890.5,679.4 892.3,682.7 893.9,686.2 895.1,689.7 896.1,693.2 896.7,696.8 897.0,700.3 897.0,703.9 896.6,707.5 895.9,711.1 894.9,714.7 893.6,718.2 891.9,721.7 889.9,725.2 887.6,728.6 885.0,731.9 882.0,735.1 878.8,738.3 875.2,741.3 871.4,744.2 867.3,747.1 862.9,749.7 858.3,752.3 853.4,754.7 848.3,756.9 843.0,759.0 837.5,760.9 831.9,762.7 826.0,764.2 820.0,765.6 813.9,766.8 807.7,767.7 801.4,768.5 795.0,769.1 788.6,769.4 782.1,769.6 775.7,769.6 769.2,769.3 762.8,768.9 756.4,768.2 750.2,767.3 744.0,766.3 737.9,765.0 731.9,763.6 726.1,761.9 720.5,760.1 715.1,758.1 709.8,756.0 704.8,753.7 700.0,751.2 695.5,748.6 691.2,745.8 687.2,743.0 683.4,740.0 680.0,736.9 676.8,733.7 674.0,730.4 671.4,727.1 669.2,723.6 667.3,720.2 665.7,716.6 664.5,713.1 663.6,709.5 663.0,705.9 662.8,702.3 662.8,698.7 663.2,695.1 664.0,691.6 665.0,688.1 666.4,684.6 668.0,681.2 670.0,677.8 672.3,674.6 674.8,671.4 677.6,668.2 680.7,665.2 684.0,662.3 687.6,659.5 691.5,656.8 695.5,654.2 699.8,651.8 704.3,649.5 708.9,647.3 713.8,645.3 718.8,643.4 723.9,641.7 729.2,640.2 734.7,638.8 740.2,637.5 745.8,636.5 751.5,635.5 757.3,634.8 763.2,634.2 769.1,633.9 775.0,633.6 780.9,633.6 786.8,633.7 792.7,634.0 798.6,634.5 804.4,635.1 810.2,636.0 815.8,636.9 821.4,638.1 826.9,639.4 832.3,640.9 837.6,642.5 842.7,644.3 847.6,646.2 852.4,648.3 857.0,650.6 861.4,652.9 865.6,655.4 869.6,658.0 873.4,660.8 876.9,663.6 880.1,666.6 880.1,666.6" fill="none" stroke="#3a0e0c" stroke-width="0.9" />
<polyline points="864.1,658.1 866.6,660.6 868.8,663.3 870.8,666.0 872.6,668.7 874.1,671.5 875.4,674.4 876.4,677.3 877.2,680.2 877.7,683.2 877.9,686.1 877.8,689.1 877.5,692.1 876.9,695.1 876.0,698.0 874.8,700.9 873.4,703.8 871.7,706.7 869.8,709.5 867.5,712.2 865.0,714.9 862.3,717.4 859.3,719.9 856.1,722.4 852.7,724.7 849.0,726.9 845.2,729.0 841.1,730.9 836.8,732.8 832.4,734.5 827.8,736.0 823.1,737.4 818.3,738.7 813.3,739.8 808.2,740.8 803.0,741.6 797.8,742.2 792.5,742.7 787.2,743.0 781.8,743.1 776.4,743.1 771.1,742.9 765.8,742.5 760.5,742.0 755.3,741.3 750.1,740.4 745.1,739.4 740.1,738.2 735.3,736.8 730.6,735.3 726.1,733.7 721.7,732.0 717.5,730.1 713.5,728.0 709.7,725.9 706.1,723.6 702.8,721.3 699.6,718.8 696.7,716.3 694.1,713.7 691.7,711.0 689.5,708.2 687.6,705.4 686.0,702.5 684.7,699.6 683.6,696.7 682.8,693.7 682.3,690.7 682.0,687.8 682.1,684.8 682.4,681.8 682.9,678.9 683.8,676.0 684.9,673.1 686.2,670.2 687.8,667.4 689.7,664.7 691.8,662.0 694.1,659.4 696.7,656.9 699.5,654.5 702.5,652.2 705.7,649.9 709.1,647.8 712.6,645.7 716.4,643.8 720.3,642.0 724.3,640.3 728.5,638.7 732.9,637.3 737.3,636.0 741.9,634.8 746.5,633.7 751.3,632.8 756.1,632.1 760.9,631.5 765.9,631.0 770.8,630.7 775.8,630.5 780.8,630.4 785.8,630.5 790.7,630.8 795.7,631.2 800.6,631.7 805.4,632.4 810.2,633.2 814.9,634.2 819.5,635.3 824.1,636.6 828.5,637.9 832.8,639.4 836.9,641.1 840.9,642.8 844.8,644.7 848.5,646.7 852.0,648.7 855.3,650.9 858.4,653.2 861.4,655.6 864.1,658.1 864.1,658.1" fill="none" stroke="#3a0e0c" stroke-width="0.9" />
<polyline points="847.7,652.6 849.7,654.6 851.5,656.7 853.1,658.9 854.5,661.1 855.7,663.3 856.7,665.6 857.5,667.9 858.1,670.3 858.4,672.6 858.6,675.0 858.5,677.4 858.2,679.7 857.7,682.1 856.9,684.4 856.0,686.7 854.8,689.0 853.4,691.3 851.8,693.5 850.0,695.7 848.0,697.8 845.8,699.8 843.4,701.8 840.8,703.7 838.1,705.5 835.1,707.2 832.0,708.9 828.8,710.4 825.4,711.9 821.8,713.2 818.2,714.5 814.4,715.6 810.5,716.6 806.5,717.4 802.5,718.2 798.4,718.8 794.2,719.3 790.0,719.7 785.7,719.9 781.5,720.0 777.2,720.0 772.9,719.8 768.7,719.5 764.5,719.1 760.3,718.6 756.2,717.9 752.2,717.1 748.3,716.1 744.4,715.1 740.7,713.9 737.1,712.6 733.6,711.2 730.2,709.8 727.0,708.2 723.9,706.5 721.1,704.7 718.4,702.8 715.8,700.9 713.5,698.9 711.3,696.8 709.4,694.7 707.7,692.5 706.1,690.3 704.8,688.0 703.7,685.7 702.8,683.4 702.2,681.0 701.7,678.6 701.5,676.3 701.5,673.9 701.7,671.5 702.1,669.2 702.8,666.9 703.6,664.5 704.7,662.3 705.9,660.0 707.4,657.9 709.1,655.7 710.9,653.6 713.0,651.6 715.2,649.7 717.6,647.8 720.1,646.0 722.9,644.3 725.7,642.6 728.7,641.1 731.9,639.6 735.1,638.2 738.5,637.0 742.0,635.8 745.6,634.8 749.3,633.8 753.0,633.0 756.8,632.2 760.7,631.6 764.6,631.1 768.6,630.7 772.6,630.5 776.6,630.3 780.7,630.3 784.7,630.4 788.7,630.6 792.7,630.9 796.7,631.3 800.6,631.9 804.4,632.6 808.2,633.4 812.0,634.2 815.6,635.2 819.2,636.3 822.6,637.6 826.0,638.9 829.2,640.3 832.3,641.8 835.2,643.4 838.1,645.1 840.7,646.8 843.2,648.7 845.6,650.6 847.7,652.6 847.7,652.6" fill="none" stroke="#3a0e0c" stroke-width="0.9" />
<polyline points="831.2,642.5 832.7,644.1 834.0,645.6 835.2,647.3 836.3,648.9 837.2,650.6 837.9,652.3 838.5,654.0 838.9,655.8 839.1,657.5 839.2,659.3 839.1,661.1 838.9,662.8 838.5,664.6 837.9,666.3 837.2,668.0 836.3,669.7 835.2,671.4 834.0,673.1 832.6,674.7 831.1,676.2 829.4,677.7 827.6,679.2 825.6,680.6 823.6,681.9 821.3,683.2 819.0,684.4 816.6,685.6 814.0,686.6 811.4,687.6 808.6,688.5 805.8,689.3 802.9,690.1 799.9,690.7 796.9,691.3 793.8,691.7 790.7,692.1 787.5,692.4 784.3,692.5 781.2,692.6 778.0,692.6 774.8,692.5 771.6,692.3 768.5,691.9 765.4,691.5 762.3,691.0 759.3,690.4 756.3,689.8 753.4,689.0 750.6,688.1 747.9,687.2 745.3,686.2 742.8,685.1 740.4,683.9 738.1,682.6 735.9,681.3 733.9,680.0 732.0,678.5 730.2,677.0 728.6,675.5 727.1,673.9 725.8,672.3 724.6,670.7 723.6,669.0 722.7,667.3 722.0,665.5 721.5,663.8 721.2,662.0 721.0,660.2 720.9,658.5 721.1,656.7 721.4,655.0 721.8,653.2 722.5,651.5 723.2,649.8 724.2,648.1 725.3,646.5 726.5,644.9 727.9,643.3 729.4,641.8 731.1,640.4 732.9,638.9 734.8,637.6 736.8,636.3 739.0,635.1 741.2,633.9 743.6,632.8 746.1,631.8 748.6,630.8 751.3,629.9 754.0,629.1 756.8,628.4 759.6,627.8 762.5,627.2 765.4,626.8 768.4,626.4 771.4,626.1 774.5,625.9 777.5,625.8 780.6,625.8 783.6,625.8 786.7,626.0 789.7,626.2 792.7,626.6 795.7,627.0 798.6,627.5 801.5,628.1 804.3,628.7 807.0,629.5 809.7,630.3 812.3,631.2 814.9,632.2 817.3,633.3 819.6,634.4 821.9,635.6 824.0,636.9 826.0,638.2 827.9,639.6 829.6,641.0 831.2,642.5 831.2,642.5" fill="none" stroke="#3a0e0c" stroke-width="0.9" />
<polyline points="814.6,626.0 815.6,627.0 816.4,628.1 817.2,629.1 817.9,630.2 818.5,631.4 819.0,632.5 819.3,633.6 819.6,634.8 819.8,636.0 819.8,637.1 819.7,638.3 819.5,639.4 819.3,640.6 818.9,641.8 818.3,642.9 817.7,644.0 817.0,645.1 816.2,646.2 815.2,647.2 814.2,648.3 813.1,649.2 811.9,650.2 810.6,651.1 809.2,652.0 807.7,652.8 806.1,653.6 804.5,654.4 802.8,655.1 801.0,655.7 799.2,656.3 797.3,656.8 795.3,657.3 793.4,657.7 791.3,658.1 789.3,658.4 787.2,658.6 785.1,658.8 783.0,658.9 780.9,659.0 778.8,658.9 776.6,658.9 774.5,658.7 772.4,658.5 770.4,658.3 768.3,657.9 766.3,657.5 764.3,657.1 762.4,656.6 760.5,656.0 758.7,655.4 757.0,654.7 755.3,654.0 753.7,653.3 752.1,652.5 750.7,651.6 749.3,650.7 748.0,649.8 746.8,648.8 745.7,647.8 744.7,646.7 743.8,645.7 743.1,644.6 742.4,643.5 741.8,642.4 741.3,641.2 740.9,640.1 740.7,638.9 740.5,637.7 740.5,636.6 740.6,635.4 740.8,634.2 741.1,633.1 741.5,632.0 742.0,630.8 742.6,629.7 743.3,628.6 744.1,627.6 745.0,626.5 746.1,625.5 747.2,624.5 748.4,623.6 749.6,622.7 751.0,621.8 752.5,621.0 754.0,620.2 755.6,619.5 757.2,618.8 758.9,618.2 760.7,617.6 762.5,617.1 764.4,616.6 766.3,616.1 768.3,615.8 770.3,615.5 772.3,615.2 774.3,615.0 776.4,614.9 778.4,614.8 780.5,614.8 782.5,614.8 784.6,614.9 786.6,615.1 788.7,615.3 790.7,615.6 792.6,615.9 794.6,616.3 796.5,616.8 798.3,617.3 800.2,617.9 801.9,618.5 803.6,619.1 805.2,619.8 806.8,620.6 808.3,621.4 809.7,622.2 811.1,623.1 812.3,624.0 813.5,625.0 814.6,626.0 814.6,626.0" fill="none" stroke="#3a0e0c" stroke-width="0.9" />
<polyline points="943.6,679.6 941.0,679.5 927.7,672.9 911.9,674.0 896.0,674.9 880.1,666.6 864.1,658.1 847.7,652.6 831.2,642.5 814.6,626.0" fill="none" stroke="#3a0e0c" stroke-width="0.85" />
<line x1="943.6" y1="679.6" x2="942.9" y2="694.4" stroke="#3a0e0c" stroke-width="0.8"/>
<polyline points="957.5,695.1 954.7,694.7 940.2,686.8 922.9,686.4 905.5,685.8 888.2,676.0 870.8,665.9 853.1,658.8 835.2,647.2 817.2,629.1" fill="none" stroke="#3a0e0c" stroke-width="0.85" />
<line x1="957.5" y1="695.1" x2="956.8" y2="710.0" stroke="#3a0e0c" stroke-width="0.8"/>
<polyline points="967.5,711.9 964.5,711.2 949.0,701.9 930.6,699.8 912.1,697.5 893.8,686.0 875.4,674.2 856.7,665.5 837.9,652.2 819.0,632.4" fill="none" stroke="#3a0e0c" stroke-width="0.85" />
<line x1="967.5" y1="711.9" x2="966.7" y2="726.9" stroke="#3a0e0c" stroke-width="0.8"/>
<polyline points="973.0,729.5 969.9,728.5 953.8,717.6 934.7,713.8 915.5,709.8 896.7,696.5 877.6,683.0 858.4,672.4 839.1,657.4 819.7,635.9" fill="none" stroke="#3a0e0c" stroke-width="0.85" />
<line x1="973.0" y1="729.5" x2="972.2" y2="744.6" stroke="#3a0e0c" stroke-width="0.8"/>
<polyline points="973.9,747.7 970.7,746.4 954.4,733.8 935.0,728.1 915.7,722.3 896.7,707.2 877.5,691.8 858.2,679.5 838.9,662.7 819.6,639.3" fill="none" stroke="#3a0e0c" stroke-width="0.85" />
<line x1="973.9" y1="747.7" x2="973.1" y2="762.8" stroke="#3a0e0c" stroke-width="0.8"/>
<polyline points="969.9,765.8 966.8,764.2 950.6,750.0 931.5,742.5 912.5,734.8 893.8,717.8 875.0,700.6 856.1,686.5 837.3,667.8 818.4,642.7" fill="none" stroke="#3a0e0c" stroke-width="0.85" />
<line x1="969.9" y1="765.8" x2="969.1" y2="781.1" stroke="#3a0e0c" stroke-width="0.8"/>
<polyline points="961.0,783.6 958.0,781.7 942.4,765.8 924.1,756.4 905.8,746.9 888.0,728.1 870.1,709.0 852.1,693.2 834.2,672.8 816.3,646.0" fill="none" stroke="#3a0e0c" stroke-width="0.85" />
<line x1="961.0" y1="783.6" x2="960.2" y2="799.0" stroke="#3a0e0c" stroke-width="0.8"/>
<polyline points="947.3,800.5 944.4,798.2 929.9,780.7 912.9,769.6 895.9,758.4 879.4,737.7 862.8,717.0 846.2,699.5 829.7,677.5 813.3,649.1" fill="none" stroke="#3a0e0c" stroke-width="0.85" />
<line x1="947.3" y1="800.5" x2="946.5" y2="815.9" stroke="#3a0e0c" stroke-width="0.8"/>
<polyline points="928.9,815.9 926.4,813.4 913.4,794.4 898.1,781.6 882.9,768.8 868.1,746.5 853.4,724.2 838.6,705.2 824.0,681.7 809.4,651.8" fill="none" stroke="#3a0e0c" stroke-width="0.85" />
<line x1="928.9" y1="815.9" x2="928.3" y2="831.5" stroke="#3a0e0c" stroke-width="0.8"/>
<polyline points="906.4,829.5 904.2,826.7 893.1,806.4 880.0,792.1 867.1,777.8 854.5,754.2 842.0,730.5 829.5,710.1 817.1,685.3 804.9,654.2" fill="none" stroke="#3a0e0c" stroke-width="0.85" />
<line x1="906.4" y1="829.5" x2="905.8" y2="845.1" stroke="#3a0e0c" stroke-width="0.8"/>
<polyline points="880.2,840.7 878.4,837.7 869.6,816.3 859.2,800.8 848.9,785.3 838.9,760.5 829.0,735.6 819.1,714.2 809.3,688.3 799.6,656.2" fill="none" stroke="#3a0e0c" stroke-width="0.85" />
<line x1="880.2" y1="840.7" x2="879.7" y2="856.4" stroke="#3a0e0c" stroke-width="0.8"/>
<polyline points="851.0,849.2 849.7,846.1 843.4,823.8 836.0,807.3 828.8,791.0 821.7,765.2 814.7,739.5 807.6,717.2 800.7,690.6 793.9,657.6" fill="none" stroke="#3a0e0c" stroke-width="0.85" />
<line x1="851.0" y1="849.2" x2="850.6" y2="864.9" stroke="#3a0e0c" stroke-width="0.8"/>
<polyline points="819.7,854.7 819.0,851.5 815.4,828.6 811.3,811.6 807.2,794.6 803.3,768.3 799.4,742.0 795.5,719.2 791.6,692.0 787.8,658.6" fill="none" stroke="#3a0e0c" stroke-width="0.85" />
<line x1="819.7" y1="854.7" x2="819.4" y2="870.5" stroke="#3a0e0c" stroke-width="0.8"/>
<polyline points="787.1,857.1 787.0,853.7 786.4,830.7 785.6,813.3 784.9,796.2 784.2,769.6 783.5,743.1 782.9,720.0 782.2,692.6 781.6,659.0" fill="none" stroke="#3a0e0c" stroke-width="0.85" />
<line x1="787.1" y1="857.1" x2="787.0" y2="872.8" stroke="#3a0e0c" stroke-width="0.8"/>
<polyline points="754.4,856.1 754.8,852.8 757.1,829.8 759.8,812.6 762.4,795.5 765.0,769.0 767.6,742.6 770.2,719.7 772.7,692.3 775.3,658.8" fill="none" stroke="#3a0e0c" stroke-width="0.85" />
<line x1="754.4" y1="856.1" x2="754.4" y2="871.8" stroke="#3a0e0c" stroke-width="0.8"/>
<polyline points="722.4,851.9 723.4,848.7 728.6,826.1 734.6,809.4 740.5,792.7 746.3,766.7 752.0,740.7 757.8,718.1 763.4,691.2 769.1,658.1" fill="none" stroke="#3a0e0c" stroke-width="0.85" />
<line x1="722.4" y1="851.9" x2="722.6" y2="867.6" stroke="#3a0e0c" stroke-width="0.8"/>
<polyline points="692.1,844.6 693.6,841.5 701.5,819.7 710.6,803.7 719.6,787.9 728.4,762.6 737.2,737.4 745.9,715.5 754.6,689.3 763.2,656.8" fill="none" stroke="#3a0e0c" stroke-width="0.85" />
<line x1="692.1" y1="844.6" x2="692.4" y2="860.3" stroke="#3a0e0c" stroke-width="0.8"/>
<polyline points="664.4,834.4 666.4,831.5 676.7,810.7 688.6,795.9 700.5,781.1 712.0,756.9 723.5,732.7 735.0,711.8 746.4,686.6 757.7,655.0" fill="none" stroke="#3a0e0c" stroke-width="0.85" />
<line x1="664.4" y1="834.4" x2="664.9" y2="850.1" stroke="#3a0e0c" stroke-width="0.8"/>
<polyline points="640.1,821.7 642.6,819.1 654.9,799.5 669.3,786.1 683.5,772.6 697.5,749.8 711.4,726.9 725.3,707.2 739.1,683.2 752.8,652.8" fill="none" stroke="#3a0e0c" stroke-width="0.85" />
<line x1="640.1" y1="821.7" x2="640.7" y2="837.3" stroke="#3a0e0c" stroke-width="0.8"/>
<polyline points="619.8,807.0 622.6,804.6 636.6,786.5 652.9,774.6 669.2,762.7 685.2,741.4 701.1,720.0 717.0,701.8 732.8,679.2 748.6,650.2" fill="none" stroke="#3a0e0c" stroke-width="0.85" />
<line x1="619.8" y1="807.0" x2="620.4" y2="822.5" stroke="#3a0e0c" stroke-width="0.8"/>
<polyline points="604.0,790.7 607.0,788.6 622.2,772.0 640.1,761.9 657.9,751.7 675.3,732.1 692.8,712.3 710.3,695.8 727.8,674.7 745.2,647.3" fill="none" stroke="#3a0e0c" stroke-width="0.85" />
<line x1="604.0" y1="790.7" x2="604.6" y2="806.1" stroke="#3a0e0c" stroke-width="0.8"/>
<polyline points="592.9,773.2 596.0,771.4 612.1,756.5 630.9,748.2 649.8,739.8 668.3,722.0 686.8,704.0 705.5,689.2 724.1,669.9 742.7,644.1" fill="none" stroke="#3a0e0c" stroke-width="0.85" />
<line x1="592.9" y1="773.2" x2="593.6" y2="788.5" stroke="#3a0e0c" stroke-width="0.8"/>
<polyline points="586.7,755.1 589.9,753.7 606.3,740.4 625.7,734.0 645.0,727.4 664.1,711.5 683.2,695.3 702.5,682.3 721.8,664.7 741.1,640.7" fill="none" stroke="#3a0e0c" stroke-width="0.85" />
<polyline points="585.4,736.8 588.6,735.7 605.0,724.2 624.3,719.6 643.6,714.9 662.8,700.8 682.0,686.5 701.4,675.3 720.9,659.5 740.5,637.2" fill="none" stroke="#3a0e0c" stroke-width="0.85" />
<polyline points="588.9,718.9 592.0,718.1 607.9,708.1 626.7,705.3 645.6,702.4 664.4,690.2 683.2,677.7 702.3,668.2 721.5,654.3 740.9,633.8" fill="none" stroke="#3a0e0c" stroke-width="0.85" />
<polyline points="596.9,701.7 599.9,701.2 615.0,692.8 632.9,691.7 650.9,690.4 668.7,679.9 686.8,669.2 705.1,661.4 723.6,649.2 742.2,630.4" fill="none" stroke="#3a0e0c" stroke-width="0.85" />
<polyline points="609.2,685.7 611.9,685.4 625.8,678.3 642.4,678.8 659.1,679.2 675.8,670.3 692.6,661.1 709.7,655.0 727.0,644.3 744.4,627.2" fill="none" stroke="#3a0e0c" stroke-width="0.85" />
<polyline points="625.2,671.1 627.6,671.0 640.2,665.2 655.1,667.1 670.2,668.8 685.2,661.4 700.4,653.7 715.9,649.1 731.6,639.9 747.5,624.2" fill="none" stroke="#3a0e0c" stroke-width="0.85" />
<polyline points="644.6,658.2 646.7,658.3 657.6,653.6 670.6,656.7 683.7,659.7 696.8,653.5 710.1,647.1 723.7,643.8 737.5,635.9 751.4,621.6" fill="none" stroke="#3a0e0c" stroke-width="0.85" />
<polyline points="666.8,647.2 668.5,647.6 677.6,643.7 688.4,647.8 699.3,651.8 710.2,646.8 721.4,641.5 732.7,639.2 744.3,632.5 756.0,619.3" fill="none" stroke="#3a0e0c" stroke-width="0.85" />
<polyline points="691.3,638.4 692.7,638.9 699.8,635.7 708.2,640.7 716.7,645.5 725.3,641.3 734.0,636.9 742.9,635.5 751.9,629.7 761.2,617.4" fill="none" stroke="#3a0e0c" stroke-width="0.85" />
<polyline points="717.7,631.9 718.6,632.4 723.6,629.8 729.5,635.3 735.4,640.8 741.5,637.3 747.6,633.5 753.9,632.8 760.2,627.6 766.8,616.1" fill="none" stroke="#3a0e0c" stroke-width="0.85" />
<polyline points="745.2,627.7 745.8,628.3 748.5,626.1 751.8,632.0 755.1,637.8 758.5,634.7 761.9,631.4 765.4,631.0 769.0,626.3 772.7,615.2" fill="none" stroke="#3a0e0c" stroke-width="0.85" />
<polyline points="773.5,626.0 773.6,626.6 774.1,624.5 774.7,630.6 775.3,636.6 776.0,633.6 776.7,630.5 777.3,630.3 778.0,625.8 778.8,614.8" fill="none" stroke="#3a0e0c" stroke-width="0.85" />
<polyline points="801.8,626.7 801.5,627.4 799.8,625.2 797.7,631.2 795.6,637.1 793.6,634.1 791.5,630.8 789.3,630.6 787.1,626.0 784.9,615.0" fill="none" stroke="#3a0e0c" stroke-width="0.85" />
<polyline points="829.8,629.9 829.0,630.5 825.1,628.1 820.4,633.8 815.6,639.4 810.9,636.1 806.0,632.5 801.1,632.0 796.0,627.0 790.9,615.6" fill="none" stroke="#3a0e0c" stroke-width="0.85" />
<polyline points="856.7,635.5 855.5,636.0 849.5,633.2 842.2,638.3 834.8,643.5 827.5,639.5 820.0,635.4 812.3,634.3 804.6,628.8 796.7,616.8" fill="none" stroke="#3a0e0c" stroke-width="0.85" />
<polyline points="882.1,643.4 880.5,643.8 872.4,640.3 862.7,644.7 852.9,649.1 843.1,644.4 833.1,639.6 822.9,637.7 812.5,631.3 802.0,618.5" fill="none" stroke="#3a0e0c" stroke-width="0.85" />
<polyline points="905.4,653.6 903.4,653.8 893.4,649.4 881.4,652.9 869.3,656.4 857.2,650.7 845.0,644.8 832.4,641.9 819.7,634.5 806.9,620.6" fill="none" stroke="#3a0e0c" stroke-width="0.85" />
<polyline points="926.0,665.7 923.8,665.7 912.0,660.4 898.0,662.7 883.8,665.0 869.7,658.1 855.4,651.0 840.8,646.9 826.0,638.2 811.1,623.1" fill="none" stroke="#3a0e0c" stroke-width="0.85" />
<line x1="926.0" y1="665.7" x2="925.4" y2="680.4" stroke="#3a0e0c" stroke-width="0.8"/>
<polyline points="943.5,681.2 948.6,686.2 953.3,691.4 957.6,696.8 961.4,702.3 964.7,708.0 967.5,713.7 969.9,719.6 971.7,725.5 973.0,731.5 973.8,737.6 974.1,743.7 973.8,749.9 972.9,756.0 971.5,762.1 969.6,768.2 967.0,774.2 964.0,780.2 960.4,786.1 956.2,791.9 951.5,797.5 946.3,803.0 940.5,808.4 934.2,813.5 927.5,818.5 920.3,823.2 912.6,827.8 904.5,832.0 895.9,836.0 887.0,839.7 877.8,843.1 868.2,846.3 858.3,849.0 848.1,851.5 837.7,853.6 827.1,855.4 816.4,856.7 805.5,857.8 794.5,858.5 783.5,858.7 772.5,858.7 761.5,858.2 750.6,857.4 739.7,856.2 729.0,854.7 718.5,852.8 708.1,850.5 698.1,847.9 688.3,845.0 678.8,841.7 669.6,838.2 660.8,834.4 652.4,830.2 644.4,825.9 636.9,821.3 629.8,816.4 623.2,811.3 617.1,806.1 611.5,800.7 606.4,795.1 601.8,789.4 597.8,783.5 594.4,777.6 591.5,771.6 589.2,765.5 587.4,759.4 586.2,753.3 585.5,747.1 585.4,741.0 585.8,734.9 586.8,728.9 588.2,722.9 590.2,717.0 592.8,711.1 595.8,705.4 599.2,699.8 603.2,694.4 607.6,689.1 612.4,683.9 617.7,678.9 623.3,674.1 629.4,669.5 635.8,665.1 642.5,660.9 649.6,656.9 657.0,653.2 664.7,649.7 672.6,646.4 680.8,643.3 689.2,640.6 697.9,638.0 706.7,635.8 715.6,633.8 724.8,632.1 734.0,630.6 743.4,629.4 752.8,628.5 762.3,627.9 771.8,627.5 781.3,627.4 790.9,627.7 800.4,628.1 809.9,628.9 819.3,629.9 828.6,631.2 837.8,632.8 846.8,634.7 855.8,636.8 864.5,639.2 873.1,641.8 881.4,644.7 889.5,647.9 897.4,651.3 904.9,654.9 912.2,658.7 919.2,662.8 925.8,667.1 932.1,671.6 938.0,676.3 943.5,681.2 943.5,681.2" fill="none" stroke="#c8786c" stroke-width="0.8" />
<polygon points="282.0,547.0 283.7,547.4 355.0,576.2 358.0,612.6 285.0,573.2" fill="url(#sideg)" stroke="#3a0e0c" stroke-width="1.2" stroke-linejoin="round" />
<polygon points="512.7,656.6 602.0,702.0 728.0,694.5 728.0,727.9 603.7,734.0 515.7,699.0" fill="url(#sideg)" stroke="#3a0e0c" stroke-width="1.2" stroke-linejoin="round" />
<polygon points="952.8,678.0 1071.7,672.0 1074.0,669.0 1136.0,619.3 1139.5,660.0 1074.0,700.0 952.8,711.3" fill="url(#sideg)" stroke="#3a0e0c" stroke-width="1.2" stroke-linejoin="round" />
<polygon points="1249.2,525.4 1296.7,490.4 1296.0,505.0 1249.0,555.0" fill="url(#sideg)" stroke="#3a0e0c" stroke-width="1.2" stroke-linejoin="round" />
<polygon points="1134.0,618.0 1143.5,614.0 1140.0,661.0 1134.0,664.0" fill="#5e1713" stroke="#3a0e0c" stroke-width="0.8" stroke-linejoin="round" />
<polygon points="509.0,654.0 514.0,656.0 516.5,700.0 511.5,700.0" fill="#5e1713" stroke="#3a0e0c" stroke-width="0.8" stroke-linejoin="round" />
<polygon points="282.0,547.0 283.8,484.0 297.5,392.4 304.4,392.4 309.3,355.1 377.6,312.8 500.9,255.9 512.0,260.7 568.0,234.6 652.4,222.2 812.7,214.7 812.7,221.3 899.2,219.0 965.6,238.9 973.2,234.1 1111.6,276.8 1113.5,286.6 1187.3,310.9 1210.4,344.1 1219.3,344.1 1270.4,429.7 1270.4,436.1 1296.7,490.4 1249.2,527.7 1142.9,614.7 1136.0,619.3 1074.0,669.0 952.8,678.0 727.8,692.3 602.0,702.0 512.7,656.6 509.7,655.1 355.0,580.7 355.0,576.2 283.7,547.4" fill="#ac4b40" stroke="#3a0e0c" stroke-width="1.2" stroke-linejoin="round" />
<clipPath id="inclip"><polygon points="383.4,379.0 447.8,350.8 550.2,300.5 592.0,287.0 652.2,268.2 671.7,270.9 672.3,272.5 809.0,265.9 880.3,260.7 938.0,275.9 938.1,281.5 1055.7,319.5 1062.0,316.4 1125.3,338.5 1137.7,374.2 1175.8,447.6 1186.7,447.5 1207.8,491.8 1184.7,510.7 1089.8,586.5 1074.2,600.0 1026.2,638.0 935.0,645.5 732.9,659.0 628.0,665.7 568.8,626.3 547.6,621.7 417.2,556.5 400.5,558.0 342.8,530.7 373.2,538.3 383.8,492.8 381.5,407.4"/></clipPath>
<g clip-path="url(#inclip)" fill="none" stroke="#3a0e0c">
<line x1="838.6" y1="415.1" x2="1062.7" y2="362.8" stroke="#3a0e0c" stroke-width="0.9"/>
<line x1="841.4" y1="417.9" x2="1078.2" y2="375.9" stroke="#3a0e0c" stroke-width="0.9"/>
<line x1="843.5" y1="420.9" x2="1091.3" y2="389.9" stroke="#3a0e0c" stroke-width="0.9"/>
<line x1="845.1" y1="424.0" x2="1101.7" y2="404.5" stroke="#3a0e0c" stroke-width="0.9"/>
<line x1="846.0" y1="427.2" x2="1109.2" y2="419.7" stroke="#3a0e0c" stroke-width="0.9"/>
<line x1="846.3" y1="430.4" x2="1113.8" y2="435.4" stroke="#3a0e0c" stroke-width="0.9"/>
<line x1="845.9" y1="433.6" x2="1115.2" y2="451.4" stroke="#3a0e0c" stroke-width="0.9"/>
<line x1="844.8" y1="436.7" x2="1113.3" y2="467.6" stroke="#3a0e0c" stroke-width="0.9"/>
<line x1="843.1" y1="439.8" x2="1107.9" y2="483.8" stroke="#3a0e0c" stroke-width="0.9"/>
<line x1="840.8" y1="442.8" x2="1099.2" y2="499.8" stroke="#3a0e0c" stroke-width="0.9"/>
<line x1="837.9" y1="445.7" x2="1086.9" y2="515.5" stroke="#3a0e0c" stroke-width="0.9"/>
<line x1="834.3" y1="448.5" x2="1071.1" y2="530.6" stroke="#3a0e0c" stroke-width="0.9"/>
<line x1="830.2" y1="451.0" x2="1051.9" y2="545.1" stroke="#3a0e0c" stroke-width="0.9"/>
<line x1="825.6" y1="453.4" x2="1029.5" y2="558.6" stroke="#3a0e0c" stroke-width="0.9"/>
<line x1="820.5" y1="455.5" x2="1003.9" y2="570.9" stroke="#3a0e0c" stroke-width="0.9"/>
<line x1="815.0" y1="457.4" x2="975.5" y2="581.9" stroke="#3a0e0c" stroke-width="0.9"/>
<line x1="809.1" y1="459.0" x2="944.5" y2="591.5" stroke="#3a0e0c" stroke-width="0.9"/>
<line x1="802.9" y1="460.3" x2="911.3" y2="599.4" stroke="#3a0e0c" stroke-width="0.9"/>
<line x1="796.4" y1="461.3" x2="876.4" y2="605.5" stroke="#3a0e0c" stroke-width="0.9"/>
<line x1="789.7" y1="462.0" x2="840.1" y2="609.7" stroke="#3a0e0c" stroke-width="0.9"/>
<line x1="782.9" y1="462.4" x2="803.0" y2="611.9" stroke="#3a0e0c" stroke-width="0.9"/>
<line x1="776.1" y1="462.4" x2="765.5" y2="612.2" stroke="#3a0e0c" stroke-width="0.9"/>
<line x1="769.3" y1="462.1" x2="728.2" y2="610.4" stroke="#3a0e0c" stroke-width="0.9"/>
<line x1="762.6" y1="461.5" x2="691.6" y2="606.6" stroke="#3a0e0c" stroke-width="0.9"/>
<line x1="756.1" y1="460.6" x2="656.2" y2="601.0" stroke="#3a0e0c" stroke-width="0.9"/>
<line x1="749.8" y1="459.3" x2="622.3" y2="593.5" stroke="#3a0e0c" stroke-width="0.9"/>
<line x1="743.8" y1="457.8" x2="590.6" y2="584.3" stroke="#3a0e0c" stroke-width="0.9"/>
<line x1="738.1" y1="455.9" x2="561.3" y2="573.6" stroke="#3a0e0c" stroke-width="0.9"/>
<line x1="732.9" y1="453.9" x2="534.8" y2="561.5" stroke="#3a0e0c" stroke-width="0.9"/>
<line x1="728.1" y1="451.6" x2="511.2" y2="548.2" stroke="#3a0e0c" stroke-width="0.9"/>
<line x1="723.8" y1="449.0" x2="491.0" y2="533.9" stroke="#3a0e0c" stroke-width="0.9"/>
<line x1="720.1" y1="446.3" x2="474.1" y2="518.9" stroke="#3a0e0c" stroke-width="0.9"/>
<line x1="717.0" y1="443.4" x2="460.7" y2="503.3" stroke="#3a0e0c" stroke-width="0.9"/>
<line x1="714.5" y1="440.5" x2="450.8" y2="487.2" stroke="#3a0e0c" stroke-width="0.9"/>
<line x1="712.6" y1="437.4" x2="444.4" y2="471.0" stroke="#3a0e0c" stroke-width="0.9"/>
<line x1="711.3" y1="434.2" x2="441.4" y2="454.8" stroke="#3a0e0c" stroke-width="0.9"/>
<line x1="710.7" y1="431.0" x2="441.8" y2="438.7" stroke="#3a0e0c" stroke-width="0.9"/>
<line x1="710.8" y1="427.8" x2="445.4" y2="422.9" stroke="#3a0e0c" stroke-width="0.9"/>
<line x1="711.5" y1="424.7" x2="452.1" y2="407.5" stroke="#3a0e0c" stroke-width="0.9"/>
<line x1="712.9" y1="421.6" x2="461.7" y2="392.7" stroke="#3a0e0c" stroke-width="0.9"/>
<line x1="714.9" y1="418.5" x2="474.0" y2="378.6" stroke="#3a0e0c" stroke-width="0.9"/>
<line x1="717.4" y1="415.6" x2="488.8" y2="365.2" stroke="#3a0e0c" stroke-width="0.9"/>
<line x1="720.6" y1="412.9" x2="505.9" y2="352.7" stroke="#3a0e0c" stroke-width="0.9"/>
<line x1="724.3" y1="410.3" x2="525.2" y2="341.2" stroke="#3a0e0c" stroke-width="0.9"/>
<line x1="728.4" y1="407.9" x2="546.3" y2="330.6" stroke="#3a0e0c" stroke-width="0.9"/>
<line x1="733.1" y1="405.7" x2="569.1" y2="321.1" stroke="#3a0e0c" stroke-width="0.9"/>
<line x1="738.1" y1="403.7" x2="593.5" y2="312.7" stroke="#3a0e0c" stroke-width="0.9"/>
<line x1="743.5" y1="402.0" x2="619.1" y2="305.4" stroke="#3a0e0c" stroke-width="0.9"/>
<line x1="749.3" y1="400.5" x2="645.8" y2="299.3" stroke="#3a0e0c" stroke-width="0.9"/>
<line x1="755.2" y1="399.3" x2="673.3" y2="294.3" stroke="#3a0e0c" stroke-width="0.9"/>
<line x1="761.4" y1="398.4" x2="701.6" y2="290.6" stroke="#3a0e0c" stroke-width="0.9"/>
<line x1="767.8" y1="397.8" x2="730.3" y2="288.0" stroke="#3a0e0c" stroke-width="0.9"/>
<line x1="774.2" y1="397.4" x2="759.4" y2="286.7" stroke="#3a0e0c" stroke-width="0.9"/>
<line x1="780.7" y1="397.4" x2="788.6" y2="286.6" stroke="#3a0e0c" stroke-width="0.9"/>
<line x1="787.2" y1="397.7" x2="817.7" y2="287.7" stroke="#3a0e0c" stroke-width="0.9"/>
<line x1="793.6" y1="398.3" x2="846.5" y2="290.0" stroke="#3a0e0c" stroke-width="0.9"/>
<line x1="799.8" y1="399.1" x2="875.0" y2="293.6" stroke="#3a0e0c" stroke-width="0.9"/>
<line x1="805.9" y1="400.2" x2="902.7" y2="298.3" stroke="#3a0e0c" stroke-width="0.9"/>
<line x1="811.7" y1="401.7" x2="929.7" y2="304.2" stroke="#3a0e0c" stroke-width="0.9"/>
<line x1="817.2" y1="403.3" x2="955.6" y2="311.3" stroke="#3a0e0c" stroke-width="0.9"/>
<line x1="822.4" y1="405.3" x2="980.3" y2="319.5" stroke="#3a0e0c" stroke-width="0.9"/>
<line x1="827.2" y1="407.4" x2="1003.5" y2="328.8" stroke="#3a0e0c" stroke-width="0.9"/>
<line x1="831.5" y1="409.8" x2="1025.2" y2="339.1" stroke="#3a0e0c" stroke-width="0.9"/>
<line x1="835.3" y1="412.3" x2="1045.0" y2="350.5" stroke="#3a0e0c" stroke-width="0.9"/>
<line x1="1089.2" y1="356.6" x2="1314.1" y2="304.1" stroke="#3a0e0c" stroke-width="0.9"/>
<line x1="1121.2" y1="386.1" x2="1379.7" y2="353.7" stroke="#3a0e0c" stroke-width="0.9"/>
<line x1="1141.7" y1="418.8" x2="1428.5" y2="410.6" stroke="#3a0e0c" stroke-width="0.9"/>
<line x1="1149.1" y1="453.6" x2="1456.4" y2="474.0" stroke="#3a0e0c" stroke-width="0.9"/>
<line x1="1142.1" y1="489.4" x2="1459.0" y2="542.0" stroke="#3a0e0c" stroke-width="0.9"/>
<line x1="1119.7" y1="524.7" x2="1432.0" y2="612.2" stroke="#3a0e0c" stroke-width="0.9"/>
<line x1="1081.7" y1="557.7" x2="1372.4" y2="681.0" stroke="#3a0e0c" stroke-width="0.9"/>
<line x1="1029.0" y1="586.7" x2="1279.0" y2="744.0" stroke="#3a0e0c" stroke-width="0.9"/>
<line x1="963.3" y1="609.8" x2="1153.9" y2="796.2" stroke="#3a0e0c" stroke-width="0.9"/>
<line x1="887.6" y1="625.6" x2="1002.7" y2="832.9" stroke="#3a0e0c" stroke-width="0.9"/>
<line x1="805.8" y1="632.9" x2="834.9" y2="850.3" stroke="#3a0e0c" stroke-width="0.9"/>
<line x1="722.5" y1="631.2" x2="662.8" y2="846.3" stroke="#3a0e0c" stroke-width="0.9"/>
<line x1="642.2" y1="620.5" x2="499.2" y2="821.5" stroke="#3a0e0c" stroke-width="0.9"/>
<line x1="569.5" y1="601.7" x2="355.6" y2="778.4" stroke="#3a0e0c" stroke-width="0.9"/>
<line x1="507.8" y1="576.1" x2="240.3" y2="721.4" stroke="#3a0e0c" stroke-width="0.9"/>
<line x1="459.9" y1="545.3" x2="158.1" y2="655.3" stroke="#3a0e0c" stroke-width="0.9"/>
<line x1="427.1" y1="511.1" x2="109.7" y2="585.2" stroke="#3a0e0c" stroke-width="0.9"/>
<line x1="410.0" y1="475.3" x2="93.2" y2="515.1" stroke="#3a0e0c" stroke-width="0.9"/>
<line x1="408.1" y1="439.6" x2="105.1" y2="448.2" stroke="#3a0e0c" stroke-width="0.9"/>
<line x1="420.3" y1="405.4" x2="141.0" y2="386.9" stroke="#3a0e0c" stroke-width="0.9"/>
<line x1="445.0" y1="373.8" x2="196.5" y2="332.5" stroke="#3a0e0c" stroke-width="0.9"/>
<line x1="480.6" y1="345.6" x2="267.3" y2="285.9" stroke="#3a0e0c" stroke-width="0.9"/>
<line x1="525.2" y1="321.7" x2="350.0" y2="247.4" stroke="#3a0e0c" stroke-width="0.9"/>
<line x1="576.9" y1="302.3" x2="441.4" y2="217.0" stroke="#3a0e0c" stroke-width="0.9"/>
<line x1="634.0" y1="287.8" x2="539.0" y2="194.8" stroke="#3a0e0c" stroke-width="0.9"/>
<line x1="694.9" y1="278.4" x2="640.6" y2="180.7" stroke="#3a0e0c" stroke-width="0.9"/>
<line x1="757.7" y1="274.3" x2="744.4" y2="174.5" stroke="#3a0e0c" stroke-width="0.9"/>
<line x1="821.1" y1="275.4" x2="848.6" y2="176.1" stroke="#3a0e0c" stroke-width="0.9"/>
<line x1="883.4" y1="281.7" x2="951.7" y2="185.7" stroke="#3a0e0c" stroke-width="0.9"/>
<line x1="943.1" y1="293.2" x2="1051.9" y2="203.3" stroke="#3a0e0c" stroke-width="0.9"/>
<line x1="998.4" y1="309.7" x2="1147.3" y2="228.8" stroke="#3a0e0c" stroke-width="0.9"/>
<line x1="1047.7" y1="330.9" x2="1235.6" y2="262.4" stroke="#3a0e0c" stroke-width="0.9"/>
<line x1="1075.7" y1="359.7" x2="1089.2" y2="356.6" stroke="#3a0e0c" stroke-width="0.8"/>
<line x1="1092.1" y1="373.5" x2="1106.5" y2="370.9" stroke="#3a0e0c" stroke-width="0.8"/>
<line x1="1105.9" y1="388.0" x2="1121.2" y2="386.1" stroke="#3a0e0c" stroke-width="0.8"/>
<line x1="1117.0" y1="403.3" x2="1133.0" y2="402.1" stroke="#3a0e0c" stroke-width="0.8"/>
<line x1="1125.1" y1="419.3" x2="1141.7" y2="418.8" stroke="#3a0e0c" stroke-width="0.8"/>
<line x1="1130.1" y1="435.7" x2="1147.1" y2="436.0" stroke="#3a0e0c" stroke-width="0.8"/>
<line x1="1131.8" y1="452.5" x2="1149.1" y2="453.6" stroke="#3a0e0c" stroke-width="0.8"/>
<line x1="1130.0" y1="469.5" x2="1147.5" y2="471.5" stroke="#3a0e0c" stroke-width="0.8"/>
<line x1="1124.6" y1="486.5" x2="1142.1" y2="489.4" stroke="#3a0e0c" stroke-width="0.8"/>
<line x1="1115.6" y1="503.4" x2="1132.8" y2="507.2" stroke="#3a0e0c" stroke-width="0.8"/>
<line x1="1102.9" y1="520.0" x2="1119.7" y2="524.7" stroke="#3a0e0c" stroke-width="0.8"/>
<line x1="1086.4" y1="536.0" x2="1102.6" y2="541.6" stroke="#3a0e0c" stroke-width="0.8"/>
<line x1="1066.4" y1="551.2" x2="1081.7" y2="557.7" stroke="#3a0e0c" stroke-width="0.8"/>
<line x1="1042.9" y1="565.5" x2="1057.1" y2="572.8" stroke="#3a0e0c" stroke-width="0.8"/>
<line x1="1016.1" y1="578.6" x2="1029.0" y2="586.7" stroke="#3a0e0c" stroke-width="0.8"/>
<line x1="986.2" y1="590.3" x2="997.6" y2="599.1" stroke="#3a0e0c" stroke-width="0.8"/>
<line x1="953.6" y1="600.4" x2="963.3" y2="609.8" stroke="#3a0e0c" stroke-width="0.8"/>
<line x1="918.7" y1="608.8" x2="926.4" y2="618.7" stroke="#3a0e0c" stroke-width="0.8"/>
<line x1="881.8" y1="615.2" x2="887.6" y2="625.6" stroke="#3a0e0c" stroke-width="0.8"/>
<line x1="843.5" y1="619.7" x2="847.2" y2="630.4" stroke="#3a0e0c" stroke-width="0.8"/>
<line x1="804.4" y1="622.1" x2="805.8" y2="632.9" stroke="#3a0e0c" stroke-width="0.8"/>
<line x1="764.8" y1="622.4" x2="764.0" y2="633.2" stroke="#3a0e0c" stroke-width="0.8"/>
<line x1="725.4" y1="620.5" x2="722.5" y2="631.2" stroke="#3a0e0c" stroke-width="0.8"/>
<line x1="686.8" y1="616.5" x2="681.7" y2="626.9" stroke="#3a0e0c" stroke-width="0.8"/>
<line x1="649.4" y1="610.5" x2="642.2" y2="620.5" stroke="#3a0e0c" stroke-width="0.8"/>
<line x1="613.8" y1="602.5" x2="604.7" y2="612.1" stroke="#3a0e0c" stroke-width="0.8"/>
<line x1="580.3" y1="592.8" x2="569.5" y2="601.7" stroke="#3a0e0c" stroke-width="0.8"/>
<line x1="549.5" y1="581.4" x2="537.1" y2="589.7" stroke="#3a0e0c" stroke-width="0.8"/>
<line x1="521.6" y1="568.6" x2="507.8" y2="576.1" stroke="#3a0e0c" stroke-width="0.8"/>
<line x1="497.0" y1="554.5" x2="482.0" y2="561.2" stroke="#3a0e0c" stroke-width="0.8"/>
<line x1="475.8" y1="539.5" x2="459.9" y2="545.3" stroke="#3a0e0c" stroke-width="0.8"/>
<line x1="458.2" y1="523.6" x2="441.5" y2="528.5" stroke="#3a0e0c" stroke-width="0.8"/>
<line x1="444.3" y1="507.1" x2="427.1" y2="511.1" stroke="#3a0e0c" stroke-width="0.8"/>
<line x1="434.1" y1="490.2" x2="416.6" y2="493.3" stroke="#3a0e0c" stroke-width="0.8"/>
<line x1="427.6" y1="473.1" x2="410.0" y2="475.3" stroke="#3a0e0c" stroke-width="0.8"/>
<line x1="424.7" y1="456.0" x2="407.2" y2="457.4" stroke="#3a0e0c" stroke-width="0.8"/>
<line x1="425.3" y1="439.1" x2="408.1" y2="439.6" stroke="#3a0e0c" stroke-width="0.8"/>
<line x1="429.3" y1="422.6" x2="412.5" y2="422.2" stroke="#3a0e0c" stroke-width="0.8"/>
<line x1="436.5" y1="406.5" x2="420.3" y2="405.4" stroke="#3a0e0c" stroke-width="0.8"/>
<line x1="446.8" y1="391.0" x2="431.2" y2="389.2" stroke="#3a0e0c" stroke-width="0.8"/>
<line x1="459.8" y1="376.2" x2="445.0" y2="373.8" stroke="#3a0e0c" stroke-width="0.8"/>
<line x1="475.5" y1="362.3" x2="461.6" y2="359.2" stroke="#3a0e0c" stroke-width="0.8"/>
<line x1="493.5" y1="349.3" x2="480.6" y2="345.6" stroke="#3a0e0c" stroke-width="0.8"/>
<line x1="513.8" y1="337.2" x2="501.9" y2="333.1" stroke="#3a0e0c" stroke-width="0.8"/>
<line x1="535.9" y1="326.2" x2="525.2" y2="321.7" stroke="#3a0e0c" stroke-width="0.8"/>
<line x1="559.9" y1="316.3" x2="550.3" y2="311.4" stroke="#3a0e0c" stroke-width="0.8"/>
<line x1="585.3" y1="307.6" x2="576.9" y2="302.3" stroke="#3a0e0c" stroke-width="0.8"/>
<line x1="612.1" y1="300.0" x2="604.9" y2="294.4" stroke="#3a0e0c" stroke-width="0.8"/>
<line x1="640.0" y1="293.6" x2="634.0" y2="287.8" stroke="#3a0e0c" stroke-width="0.8"/>
<line x1="668.8" y1="288.5" x2="664.1" y2="282.5" stroke="#3a0e0c" stroke-width="0.8"/>
<line x1="698.3" y1="284.6" x2="694.9" y2="278.4" stroke="#3a0e0c" stroke-width="0.8"/>
<line x1="728.3" y1="282.0" x2="726.1" y2="275.7" stroke="#3a0e0c" stroke-width="0.8"/>
<line x1="758.6" y1="280.6" x2="757.7" y2="274.3" stroke="#3a0e0c" stroke-width="0.8"/>
<line x1="789.0" y1="280.5" x2="789.5" y2="274.2" stroke="#3a0e0c" stroke-width="0.8"/>
<line x1="819.4" y1="281.6" x2="821.1" y2="275.4" stroke="#3a0e0c" stroke-width="0.8"/>
<line x1="849.5" y1="284.1" x2="852.5" y2="277.9" stroke="#3a0e0c" stroke-width="0.8"/>
<line x1="879.1" y1="287.7" x2="883.4" y2="281.7" stroke="#3a0e0c" stroke-width="0.8"/>
<line x1="908.1" y1="292.7" x2="913.7" y2="286.8" stroke="#3a0e0c" stroke-width="0.8"/>
<line x1="936.2" y1="298.8" x2="943.1" y2="293.2" stroke="#3a0e0c" stroke-width="0.8"/>
<line x1="963.3" y1="306.1" x2="971.4" y2="300.8" stroke="#3a0e0c" stroke-width="0.8"/>
<line x1="989.2" y1="314.7" x2="998.4" y2="309.7" stroke="#3a0e0c" stroke-width="0.8"/>
<line x1="1013.5" y1="324.3" x2="1023.9" y2="319.7" stroke="#3a0e0c" stroke-width="0.8"/>
<line x1="1036.2" y1="335.1" x2="1047.7" y2="330.9" stroke="#3a0e0c" stroke-width="0.8"/>
<line x1="1057.0" y1="346.9" x2="1069.6" y2="343.2" stroke="#3a0e0c" stroke-width="0.8"/>
<polyline points="1079.7,349.8 1086.6,354.6 1093.2,359.6 1099.5,364.7 1105.4,369.9 1111.1,375.2 1116.3,380.7 1121.2,386.2 1125.8,391.8 1130.0,397.6 1133.8,403.4 1137.2,409.3 1140.2,415.3 1142.7,421.3 1144.9,427.5 1146.6,433.7 1147.9,439.9 1148.7,446.2 1149.1,452.5 1149.0,458.9 1148.5,465.3 1147.4,471.7 1145.9,478.1 1143.9,484.5 1141.5,490.9 1138.5,497.3 1135.0,503.7 1131.0,510.0 1126.6,516.2 1121.6,522.5 1116.1,528.6 1110.1,534.7 1103.7,540.6 1096.7,546.5 1089.3,552.3 1081.3,557.9 1072.9,563.5 1064.1,568.9 1054.7,574.1 1044.9,579.2 1034.7,584.1 1024.1,588.8 1013.0,593.3 1001.6,597.6 989.8,601.7 977.6,605.6 965.1,609.3 952.2,612.8 939.1,615.9 925.6,618.9 911.9,621.6 898.0,624.0 883.8,626.2 869.5,628.0 855.0,629.6 840.3,631.0 825.6,632.0 810.7,632.7 795.8,633.2 780.9,633.4 765.9,633.2 751.0,632.8 736.1,632.1 721.3,631.1 706.6,629.8 692.1,628.2 677.6,626.4 663.4,624.3 649.4,621.9 635.6,619.2 622.0,616.3 608.8,613.1 595.8,609.7 583.1,606.1 570.8,602.2 558.8,598.1 547.2,593.8 536.0,589.3 525.2,584.6 514.9,579.7 504.9,574.6 495.4,569.4 486.4,564.0 477.8,558.5 469.7,552.8 462.0,547.0 454.9,541.1 448.3,535.2 442.1,529.1 436.5,522.9 431.3,516.7 426.7,510.4 422.5,504.1 418.9,497.7 415.7,491.3 413.1,484.9 410.9,478.4 409.2,472.0 408.0,465.6 407.3,459.2 407.1,452.8 407.3,446.4 408.0,440.1 409.2,433.9 410.8,427.6 412.8,421.5 415.2,415.4 418.1,409.4 421.4,403.5 425.1,397.6 429.2,391.9 433.6,386.2 438.4,380.7 443.6,375.2 449.1,369.9 455.0,364.7 461.2,359.6 467.7,354.6 474.5,349.7 481.6,345.0 489.0,340.4 496.7,336.0 504.6,331.6 512.8,327.5 521.3,323.5 529.9,319.6 538.8,315.8 548.0,312.3 557.3,308.8 566.8,305.6 576.4,302.4 586.3,299.5 596.3,296.7 606.5,294.0 616.8,291.5 627.3,289.2 637.8,287.1 648.5,285.1 659.3,283.2 670.2,281.6 681.2,280.1 692.2,278.7 703.4,277.6 714.5,276.6 725.8,275.7 737.0,275.1 748.3,274.6 759.7,274.2 771.0,274.1 782.4,274.1 793.7,274.3 805.0,274.6 816.3,275.1 827.6,275.8 838.9,276.6 850.0,277.6 861.2,278.8 872.2,280.2 883.2,281.7 894.1,283.3 904.9,285.2 915.6,287.2 926.2,289.3 936.7,291.7 947.1,294.2 957.3,296.8 967.3,299.6 977.2,302.6 986.9,305.7 996.5,309.0 1005.8,312.4 1015.0,316.0 1023.9,319.7 1032.6,323.6 1041.1,327.6 1049.4,331.8 1057.4,336.1 1065.1,340.5 1072.6,345.1 1079.7,349.8" stroke="#3a0e0c" stroke-width="1.1"/>
<polyline points="1077.8,350.3 1084.6,355.1 1091.1,360.1 1097.4,365.1 1103.3,370.3 1108.8,375.6 1114.1,381.0 1118.9,386.5 1123.4,392.1 1127.6,397.8 1131.3,403.6 1134.7,409.4 1137.6,415.4 1140.2,421.4 1142.3,427.5 1144.0,433.6 1145.3,439.8 1146.1,446.1 1146.5,452.4 1146.4,458.7 1145.8,465.0 1144.8,471.4 1143.3,477.7 1141.3,484.1 1138.8,490.5 1135.8,496.8 1132.4,503.1 1128.4,509.4 1124.0,515.6 1119.0,521.7 1113.6,527.8 1107.6,533.9 1101.2,539.8 1094.3,545.6 1086.9,551.4 1079.0,557.0 1070.6,562.4 1061.8,567.8 1052.6,573.0 1042.9,578.0 1032.7,582.8 1022.2,587.5 1011.2,592.0 999.8,596.3 988.1,600.4 976.0,604.2 963.6,607.9 950.8,611.3 937.8,614.4 924.4,617.4 910.8,620.0 897.0,622.4 883.0,624.6 868.7,626.4 854.4,628.0 839.8,629.3 825.2,630.3 810.5,631.1 795.7,631.5 780.8,631.7 766.0,631.6 751.2,631.2 736.5,630.4 721.8,629.5 707.2,628.2 692.8,626.6 678.5,624.8 664.3,622.7 650.4,620.3 636.7,617.7 623.3,614.8 610.1,611.7 597.2,608.3 584.7,604.7 572.5,600.8 560.6,596.8 549.1,592.5 538.0,588.0 527.2,583.3 516.9,578.5 507.1,573.5 497.6,568.3 488.6,562.9 480.1,557.5 472.1,551.9 464.5,546.1 457.4,540.3 450.8,534.4 444.7,528.3 439.0,522.2 433.9,516.0 429.3,509.8 425.1,503.5 421.5,497.2 418.4,490.8 415.7,484.5 413.6,478.1 411.9,471.7 410.7,465.3 410.0,459.0 409.8,452.6 410.0,446.3 410.7,440.0 411.8,433.8 413.3,427.6 415.4,421.5 417.8,415.5 420.6,409.5 423.9,403.6 427.5,397.8 431.5,392.1 435.9,386.5 440.7,381.0 445.9,375.6 451.3,370.3 457.2,365.1 463.3,360.0 469.8,355.1 476.5,350.2 483.6,345.6 490.9,341.0 498.5,336.6 506.4,332.3 514.6,328.1 522.9,324.1 531.5,320.3 540.4,316.6 549.4,313.0 558.7,309.6 568.1,306.3 577.7,303.2 587.5,300.3 597.5,297.5 607.6,294.9 617.8,292.4 628.2,290.1 638.7,287.9 649.3,286.0 660.1,284.1 670.9,282.5 681.8,281.0 692.8,279.7 703.8,278.5 714.9,277.5 726.1,276.7 737.3,276.0 748.5,275.5 759.8,275.2 771.1,275.0 782.3,275.0 793.6,275.2 804.9,275.5 816.1,276.1 827.3,276.7 838.5,277.6 849.6,278.6 860.7,279.7 871.7,281.1 882.6,282.6 893.4,284.2 904.2,286.1 914.8,288.1 925.3,290.2 935.7,292.5 946.0,295.0 956.1,297.6 966.1,300.4 975.9,303.4 985.6,306.5 995.1,309.7 1004.4,313.1 1013.4,316.7 1022.3,320.4 1031.0,324.3 1039.4,328.3 1047.6,332.4 1055.5,336.7 1063.2,341.1 1070.6,345.6 1077.8,350.3" stroke="#3a0e0c" stroke-width="1.6"/>
<polyline points="1066.7,353.2 1073.2,357.9 1079.5,362.6 1085.4,367.5 1091.1,372.5 1096.4,377.6 1101.3,382.8 1106.0,388.1 1110.3,393.5 1114.2,399.0 1117.7,404.5 1120.9,410.2 1123.7,415.9 1126.1,421.7 1128.0,427.5 1129.6,433.4 1130.8,439.4 1131.5,445.4 1131.8,451.4 1131.6,457.5 1131.0,463.6 1129.9,469.7 1128.4,475.8 1126.4,481.9 1124.0,487.9 1121.1,494.0 1117.7,500.0 1113.8,506.0 1109.5,512.0 1104.7,517.9 1099.4,523.7 1093.7,529.4 1087.5,535.1 1080.8,540.6 1073.7,546.1 1066.1,551.5 1058.0,556.7 1049.6,561.8 1040.6,566.7 1031.3,571.5 1021.6,576.1 1011.5,580.6 1000.9,584.8 990.1,588.9 978.8,592.8 967.2,596.5 955.3,599.9 943.1,603.2 930.6,606.2 917.9,608.9 904.9,611.5 891.7,613.7 878.3,615.8 864.7,617.5 850.9,619.0 837.1,620.3 823.1,621.2 809.0,621.9 794.9,622.4 780.7,622.5 766.6,622.4 752.5,622.0 738.4,621.3 724.4,620.4 710.4,619.2 696.6,617.7 683.0,616.0 669.5,614.0 656.2,611.7 643.1,609.2 630.2,606.5 617.7,603.5 605.3,600.3 593.3,596.8 581.6,593.2 570.2,589.3 559.2,585.3 548.5,581.0 538.3,576.6 528.4,571.9 518.9,567.2 509.8,562.2 501.2,557.1 493.0,551.9 485.2,546.6 477.9,541.1 471.1,535.5 464.7,529.9 458.8,524.1 453.3,518.3 448.4,512.4 443.9,506.4 439.8,500.4 436.3,494.4 433.2,488.3 430.6,482.2 428.5,476.1 426.8,470.0 425.6,463.9 424.9,457.8 424.5,451.7 424.7,445.6 425.3,439.6 426.3,433.6 427.7,427.7 429.6,421.8 431.8,416.0 434.5,410.3 437.6,404.6 441.0,399.0 444.8,393.5 449.0,388.1 453.6,382.8 458.4,377.6 463.7,372.5 469.2,367.5 475.1,362.6 481.2,357.8 487.7,353.2 494.5,348.6 501.5,344.2 508.8,340.0 516.4,335.8 524.2,331.8 532.2,327.9 540.5,324.2 549.0,320.6 557.7,317.2 566.6,313.9 575.6,310.7 584.9,307.7 594.3,304.9 603.9,302.2 613.6,299.6 623.5,297.2 633.5,295.0 643.6,292.9 653.9,291.0 664.2,289.2 674.7,287.6 685.2,286.2 695.8,284.9 706.4,283.8 717.1,282.8 727.9,282.0 738.7,281.3 749.6,280.9 760.4,280.5 771.3,280.4 782.2,280.4 793.1,280.6 803.9,280.9 814.8,281.4 825.6,282.0 836.4,282.8 847.1,283.8 857.8,285.0 868.4,286.3 878.9,287.7 889.4,289.3 899.7,291.1 910.0,293.0 920.1,295.1 930.2,297.4 940.1,299.8 949.8,302.3 959.5,305.0 968.9,307.9 978.2,310.9 987.3,314.0 996.2,317.3 1005.0,320.8 1013.5,324.3 1021.8,328.1 1029.9,331.9 1037.8,335.9 1045.4,340.1 1052.8,344.3 1059.9,348.7 1066.7,353.2" stroke="#3a0e0c" stroke-width="1.0"/>
<polyline points="1065.0,353.7 1071.5,358.3 1077.7,363.0 1083.6,367.9 1089.2,372.8 1094.4,377.9 1099.4,383.1 1104.0,388.3 1108.2,393.7 1112.1,399.2 1115.6,404.7 1118.8,410.3 1121.5,416.0 1123.9,421.7 1125.8,427.6 1127.4,433.4 1128.5,439.3 1129.2,445.3 1129.5,451.3 1129.3,457.3 1128.7,463.3 1127.7,469.4 1126.1,475.5 1124.2,481.5 1121.7,487.5 1118.8,493.6 1115.4,499.6 1111.6,505.5 1107.3,511.4 1102.5,517.3 1097.3,523.0 1091.5,528.7 1085.4,534.4 1078.7,539.9 1071.6,545.3 1064.1,550.6 1056.1,555.8 1047.7,560.8 1038.8,565.7 1029.6,570.5 1019.9,575.1 1009.8,579.5 999.4,583.7 988.6,587.8 977.4,591.6 965.9,595.3 954.1,598.7 942.0,601.9 929.6,604.9 916.9,607.6 904.0,610.1 890.9,612.4 877.5,614.4 864.1,616.2 850.4,617.7 836.6,618.9 822.7,619.9 808.8,620.5 794.8,621.0 780.7,621.1 766.7,621.0 752.6,620.6 738.7,619.9 724.7,619.0 710.9,617.8 697.2,616.4 683.7,614.6 670.3,612.7 657.1,610.4 644.1,607.9 631.3,605.2 618.8,602.3 606.6,599.1 594.6,595.7 583.0,592.0 571.7,588.2 560.8,584.2 550.2,579.9 540.0,575.5 530.1,570.9 520.7,566.2 511.7,561.3 503.1,556.3 495.0,551.1 487.2,545.8 480.0,540.3 473.2,534.8 466.8,529.2 460.9,523.5 455.5,517.7 450.6,511.8 446.1,505.9 442.1,499.9 438.6,493.9 435.5,487.9 432.9,481.8 430.8,475.8 429.1,469.7 427.9,463.6 427.1,457.6 426.8,451.5 427.0,445.5 427.5,439.5 428.5,433.6 429.9,427.7 431.8,421.9 434.0,416.1 436.7,410.4 439.7,404.8 443.1,399.2 446.9,393.8 451.0,388.4 455.5,383.1 460.4,377.9 465.6,372.8 471.1,367.9 476.9,363.0 483.0,358.2 489.4,353.6 496.2,349.1 503.1,344.7 510.4,340.5 517.9,336.4 525.7,332.4 533.6,328.5 541.9,324.8 550.3,321.3 558.9,317.8 567.8,314.5 576.8,311.4 586.0,308.4 595.4,305.6 604.9,302.9 614.6,300.4 624.4,298.0 634.3,295.8 644.4,293.7 654.6,291.8 664.9,290.0 675.2,288.4 685.7,287.0 696.2,285.7 706.8,284.6 717.5,283.6 728.2,282.8 739.0,282.2 749.7,281.7 760.5,281.4 771.4,281.2 782.2,281.2 793.0,281.4 803.8,281.7 814.6,282.2 825.3,282.9 836.1,283.7 846.7,284.6 857.3,285.8 867.9,287.1 878.4,288.5 888.8,290.1 899.1,291.9 909.3,293.8 919.3,295.9 929.3,298.1 939.2,300.5 948.9,303.0 958.4,305.7 967.8,308.5 977.1,311.5 986.1,314.7 995.0,318.0 1003.7,321.4 1012.2,324.9 1020.4,328.6 1028.5,332.5 1036.3,336.5 1043.8,340.6 1051.2,344.8 1058.2,349.2 1065.0,353.7" stroke="#3a0e0c" stroke-width="1.8"/>
<polyline points="1054.1,356.5 1060.3,361.0 1066.3,365.6 1071.9,370.2 1077.2,375.0 1082.3,379.9 1087.0,384.9 1091.3,389.9 1095.3,395.1 1099.0,400.3 1102.4,405.7 1105.3,411.0 1107.9,416.5 1110.1,422.0 1111.9,427.6 1113.4,433.2 1114.4,438.9 1115.0,444.6 1115.2,450.4 1115.0,456.2 1114.3,461.9 1113.2,467.7 1111.7,473.5 1109.8,479.3 1107.4,485.1 1104.5,490.9 1101.2,496.6 1097.5,502.3 1093.3,507.9 1088.7,513.5 1083.6,519.0 1078.1,524.5 1072.1,529.8 1065.7,535.1 1058.9,540.2 1051.6,545.3 1043.9,550.2 1035.8,555.0 1027.3,559.7 1018.4,564.2 1009.1,568.6 999.5,572.8 989.5,576.8 979.1,580.7 968.4,584.3 957.4,587.8 946.1,591.0 934.6,594.1 922.7,596.9 910.6,599.5 898.3,601.9 885.7,604.0 873.0,605.9 860.1,607.6 847.1,609.0 834.0,610.2 820.7,611.1 807.4,611.8 794.0,612.2 780.6,612.3 767.2,612.2 753.8,611.8 740.5,611.2 727.2,610.3 714.0,609.2 700.9,607.8 688.0,606.2 675.2,604.3 662.6,602.1 650.2,599.8 638.0,597.2 626.0,594.4 614.4,591.4 602.9,588.1 591.8,584.7 581.0,581.0 570.5,577.2 560.4,573.2 550.6,569.0 541.2,564.6 532.1,560.1 523.5,555.5 515.2,550.7 507.4,545.7 500.0,540.7 493.0,535.5 486.4,530.2 480.3,524.9 474.6,519.4 469.4,513.9 464.6,508.3 460.2,502.6 456.3,496.9 452.9,491.2 449.9,485.4 447.4,479.6 445.2,473.8 443.6,468.0 442.4,462.2 441.6,456.4 441.2,450.6 441.3,444.8 441.8,439.1 442.6,433.4 443.9,427.8 445.6,422.2 447.7,416.6 450.2,411.1 453.1,405.7 456.3,400.4 459.9,395.1 463.8,390.0 468.1,384.9 472.7,379.9 477.6,375.0 482.9,370.2 488.4,365.5 494.3,360.9 500.4,356.5 506.8,352.1 513.5,347.9 520.5,343.8 527.7,339.8 535.1,336.0 542.8,332.3 550.6,328.7 558.7,325.2 567.0,321.9 575.5,318.8 584.2,315.7 593.0,312.8 602.0,310.1 611.2,307.5 620.5,305.0 630.0,302.7 639.5,300.6 649.2,298.6 659.0,296.7 668.9,295.0 678.9,293.5 689.0,292.1 699.2,290.8 709.4,289.8 719.7,288.8 730.0,288.0 740.4,287.4 750.8,287.0 761.2,286.7 771.6,286.5 782.0,286.5 792.5,286.7 802.9,287.0 813.3,287.5 823.7,288.1 834.0,288.9 844.3,289.8 854.5,290.9 864.7,292.2 874.8,293.6 884.8,295.1 894.7,296.8 904.5,298.7 914.3,300.7 923.9,302.8 933.3,305.1 942.7,307.6 951.9,310.2 960.9,312.9 969.8,315.8 978.5,318.9 987.0,322.0 995.4,325.3 1003.5,328.8 1011.4,332.4 1019.2,336.1 1026.6,339.9 1033.9,343.9 1040.9,348.0 1047.7,352.2 1054.1,356.5" stroke="#3a0e0c" stroke-width="1.0"/>
<polyline points="1052.4,357.0 1058.6,361.4 1064.5,366.0 1070.1,370.6 1075.3,375.4 1080.3,380.2 1085.0,385.1 1089.3,390.2 1093.3,395.3 1097.0,400.5 1100.3,405.8 1103.2,411.2 1105.8,416.6 1107.9,422.1 1109.7,427.6 1111.1,433.2 1112.1,438.9 1112.7,444.5 1112.9,450.2 1112.7,456.0 1112.0,461.7 1111.0,467.5 1109.4,473.2 1107.5,479.0 1105.1,484.7 1102.3,490.4 1099.0,496.1 1095.3,501.8 1091.1,507.4 1086.5,512.9 1081.4,518.4 1075.9,523.8 1070.0,529.1 1063.6,534.3 1056.8,539.4 1049.6,544.5 1042.0,549.4 1033.9,554.1 1025.5,558.7 1016.7,563.2 1007.5,567.6 997.9,571.7 987.9,575.7 977.7,579.5 967.0,583.2 956.1,586.6 944.9,589.8 933.4,592.9 921.6,595.7 909.6,598.2 897.4,600.6 884.9,602.7 872.3,604.6 859.5,606.3 846.6,607.7 833.5,608.8 820.4,609.7 807.2,610.4 793.9,610.8 780.6,610.9 767.3,610.8 754.0,610.4 740.8,609.8 727.6,608.9 714.5,607.8 701.5,606.4 688.7,604.8 676.0,603.0 663.5,600.9 651.1,598.5 639.0,596.0 627.2,593.2 615.6,590.2 604.2,586.9 593.2,583.5 582.5,579.9 572.0,576.1 562.0,572.1 552.3,568.0 542.9,563.7 533.9,559.2 525.3,554.5 517.1,549.8 509.3,544.9 502.0,539.9 495.0,534.7 488.5,529.5 482.4,524.2 476.8,518.8 471.6,513.3 466.8,507.7 462.5,502.1 458.6,496.5 455.2,490.8 452.2,485.0 449.6,479.3 447.5,473.5 445.9,467.8 444.6,462.0 443.8,456.2 443.5,450.5 443.5,444.7 444.0,439.0 444.9,433.4 446.2,427.8 447.8,422.2 449.9,416.7 452.4,411.3 455.2,405.9 458.4,400.6 461.9,395.4 465.8,390.2 470.1,385.2 474.6,380.2 479.5,375.3 484.7,370.6 490.3,365.9 496.1,361.4 502.2,356.9 508.5,352.6 515.2,348.4 522.1,344.3 529.2,340.4 536.6,336.6 544.2,332.9 552.0,329.3 560.1,325.9 568.3,322.6 576.7,319.4 585.4,316.4 594.2,313.5 603.1,310.8 612.2,308.2 621.5,305.8 630.9,303.5 640.4,301.3 650.0,299.4 659.8,297.5 669.6,295.8 679.5,294.3 689.6,292.9 699.6,291.7 709.8,290.6 720.0,289.6 730.3,288.9 740.6,288.3 750.9,287.8 761.3,287.5 771.6,287.3 782.0,287.3 792.4,287.5 802.8,287.8 813.1,288.3 823.4,288.9 833.7,289.7 843.9,290.6 854.1,291.7 864.2,293.0 874.2,294.4 884.2,295.9 894.0,297.6 903.8,299.4 913.4,301.4 923.0,303.6 932.4,305.9 941.7,308.3 950.8,310.9 959.8,313.6 968.6,316.5 977.3,319.5 985.8,322.7 994.1,326.0 1002.1,329.4 1010.0,333.0 1017.7,336.7 1025.1,340.5 1032.3,344.4 1039.3,348.5 1046.0,352.7 1052.4,357.0" stroke="#3a0e0c" stroke-width="2.0"/>
<polyline points="837.0,413.7 840.1,416.5 842.6,419.5 844.5,422.6 845.7,425.8 846.2,429.0 846.1,432.3 845.3,435.5 843.8,438.7 841.7,441.8 838.9,444.8 835.5,447.6 831.6,450.3 827.0,452.7 822.0,455.0 816.5,456.9 810.5,458.6 804.3,460.0 797.8,461.1 791.0,461.9 784.2,462.3 777.3,462.4 770.3,462.2 763.5,461.6 756.8,460.7 750.4,459.5 744.3,457.9 738.5,456.1 733.1,454.0 728.3,451.6 723.9,449.1 720.1,446.3 717.0,443.4 714.4,440.4 712.5,437.2 711.3,434.0 710.7,430.8 710.9,427.5 711.6,424.3 713.1,421.2 715.2,418.1 717.9,415.2 721.2,412.4 725.0,409.8 729.3,407.4 734.1,405.2 739.3,403.3 744.9,401.6 750.8,400.2 757.0,399.0 763.3,398.2 769.8,397.6 776.4,397.4 783.0,397.5 789.5,397.9 795.9,398.5 802.2,399.5 808.3,400.8 814.1,402.3 819.5,404.1 824.6,406.2 829.2,408.5 833.4,411.0 837.0,413.7" stroke="#3a0e0c" stroke-width="1.1"/>
<polyline points="829.5,415.7 832.1,418.2 834.3,420.8 835.9,423.5 836.9,426.2 837.4,429.0 837.3,431.9 836.6,434.7 835.3,437.4 833.4,440.1 831.0,442.7 828.0,445.2 824.5,447.5 820.6,449.6 816.2,451.5 811.4,453.2 806.3,454.7 800.9,455.9 795.2,456.9 789.4,457.5 783.4,457.9 777.4,458.0 771.4,457.8 765.5,457.3 759.7,456.5 754.1,455.4 748.8,454.1 743.8,452.5 739.2,450.7 734.9,448.7 731.1,446.4 727.8,444.1 725.1,441.5 722.8,438.9 721.2,436.2 720.1,433.4 719.6,430.6 719.7,427.7 720.3,425.0 721.6,422.2 723.4,419.6 725.7,417.0 728.6,414.6 731.9,412.3 735.6,410.2 739.8,408.3 744.4,406.6 749.2,405.1 754.4,403.9 759.7,402.9 765.3,402.1 770.9,401.7 776.6,401.5 782.4,401.5 788.1,401.8 793.7,402.4 799.2,403.3 804.5,404.4 809.5,405.8 814.3,407.3 818.7,409.1 822.7,411.1 826.3,413.3 829.5,415.7" stroke="#3a0e0c" stroke-width="1.0"/>
<polyline points="986.8,429.6 987.3,433.4 987.4,437.1 987.3,440.8 986.9,444.6 986.2,448.3 985.2,452.1 983.9,455.8 982.3,459.5 980.4,463.2 978.2,466.9 975.8,470.5 973.0,474.1 969.9,477.7 966.6,481.2 962.9,484.6 959.0,488.0" stroke="#3a0e0c" stroke-width="2.0"/>
<polyline points="982.4,429.6 982.8,433.3 983.0,436.9 982.9,440.6 982.4,444.2 981.7,447.9 980.7,451.6 979.5,455.2 977.9,458.9 976.0,462.5 973.9,466.1 971.5,469.6 968.7,473.1 965.7,476.6 962.4,480.0 958.9,483.4 955.0,486.7" stroke="#3a0e0c" stroke-width="0.9"/>
<polyline points="881.6,429.4 881.6,431.2 881.6,433.0 881.4,434.9 881.0,436.7 880.5,438.5 879.9,440.4 879.1,442.2 878.2,444.0 877.1,445.8 875.9,447.5 874.6,449.3 873.1,451.0 871.5,452.7 869.7,454.3 867.8,456.0 865.8,457.6" stroke="#3a0e0c" stroke-width="1.2"/>
<polyline points="885.3,429.4 885.3,431.3 885.3,433.2 885.1,435.1 884.7,437.0 884.2,438.9 883.5,440.8 882.7,442.7 881.8,444.5 880.7,446.4 879.4,448.2 878.0,450.0 876.5,451.8 874.8,453.5 873.0,455.3 871.1,457.0 869.0,458.6" stroke="#3a0e0c" stroke-width="0.7"/>
<line x1="881.6" y1="429.4" x2="986.8" y2="429.6" stroke="#3a0e0c" stroke-width="1.6"/>
<line x1="865.8" y1="457.6" x2="959.0" y2="488.0" stroke="#3a0e0c" stroke-width="1.2"/>
<polyline points="786.3,537.4 777.8,537.5 769.3,537.4 760.8,537.1 752.3,536.6 743.9,536.0 735.6,535.3 727.3,534.3 719.1,533.2 711.0,532.0 703.0,530.5 695.2,529.0 687.5,527.3 680.0,525.4 672.6,523.4 665.4,521.3 658.5,519.0 651.7,516.6 645.1,514.1 638.8,511.4" stroke="#3a0e0c" stroke-width="2.0"/>
<polyline points="786.1,534.9 777.8,535.0 769.5,534.9 761.2,534.6 752.9,534.2 744.7,533.6 736.5,532.8 728.4,531.9 720.4,530.8 712.5,529.6 704.8,528.2 697.1,526.7 689.6,525.0 682.2,523.2 675.0,521.3 668.0,519.2 661.2,517.0 654.5,514.6 648.1,512.2 641.9,509.6" stroke="#3a0e0c" stroke-width="0.9"/>
<polyline points="782.2,480.5 778.2,480.5 774.1,480.5 770.1,480.3 766.1,480.1 762.1,479.9 758.1,479.5 754.2,479.1 750.3,478.6 746.4,478.0 742.6,477.4 738.8,476.6 735.2,475.9 731.5,475.0 728.0,474.1 724.5,473.1 721.2,472.0 717.9,470.9 714.7,469.8 711.6,468.5" stroke="#3a0e0c" stroke-width="1.2"/>
<polyline points="782.3,482.4 778.1,482.4 774.0,482.4 769.8,482.3 765.6,482.0 761.5,481.7 757.3,481.4 753.3,480.9 749.2,480.4 745.2,479.8 741.3,479.1 737.4,478.4 733.6,477.6 729.8,476.7 726.1,475.7 722.5,474.7 719.0,473.6 715.6,472.5 712.3,471.3 709.1,470.0" stroke="#3a0e0c" stroke-width="0.7"/>
<line x1="782.2" y1="480.5" x2="786.3" y2="537.4" stroke="#3a0e0c" stroke-width="1.6"/>
<line x1="711.6" y1="468.5" x2="638.8" y2="511.4" stroke="#3a0e0c" stroke-width="1.2"/>
<polyline points="569.4,432.8 569.9,429.0 570.6,425.2 571.6,421.4 573.0,417.7 574.6,414.0 576.4,410.4 578.6,406.8 581.0,403.3 583.7,399.8 586.6,396.4 589.8,393.0 593.3,389.7 596.9,386.5 600.8,383.4 605.0,380.3 609.3,377.3 613.9,374.4 618.7,371.6 623.6,368.9 628.8,366.3" stroke="#3a0e0c" stroke-width="2.0"/>
<polyline points="573.9,432.7 574.3,429.0 575.0,425.3 576.0,421.6 577.3,417.9 578.8,414.3 580.7,410.8 582.7,407.3 585.1,403.8 587.7,400.4 590.6,397.0 593.7,393.8 597.1,390.5 600.7,387.4 604.5,384.3 608.5,381.3 612.8,378.4 617.3,375.5 621.9,372.8 626.8,370.1 631.8,367.5" stroke="#3a0e0c" stroke-width="0.9"/>
<polyline points="675.3,430.9 675.3,429.0 675.5,427.2 675.9,425.3 676.4,423.4 677.0,421.6 677.8,419.8 678.8,418.0 679.8,416.2 681.0,414.4 682.4,412.7 683.9,411.0 685.5,409.3 687.2,407.7 689.0,406.1 691.0,404.5 693.1,403.0 695.3,401.5 697.6,400.0 700.1,398.6 702.6,397.2" stroke="#3a0e0c" stroke-width="1.2"/>
<polyline points="671.6,431.0 671.6,429.0 671.9,427.1 672.2,425.2 672.8,423.2 673.4,421.3 674.3,419.5 675.2,417.6 676.3,415.7 677.6,413.9 679.0,412.1 680.5,410.4 682.2,408.6 684.0,406.9 685.9,405.3 688.0,403.6 690.1,402.0 692.4,400.5 694.8,399.0 697.3,397.5 700.0,396.1" stroke="#3a0e0c" stroke-width="0.7"/>
<line x1="675.3" y1="430.9" x2="569.4" y2="432.8" stroke="#3a0e0c" stroke-width="1.6"/>
<line x1="702.6" y1="397.2" x2="628.8" y2="366.3" stroke="#3a0e0c" stroke-width="1.2"/>
<polyline points="781.9,336.4 789.4,336.5 796.8,336.8 804.2,337.2 811.5,337.7 818.8,338.3 826.1,339.1 833.3,340.0 840.5,341.0 847.5,342.2 854.5,343.4 861.5,344.8 868.3,346.3 875.0,347.9 881.6,349.7 888.0,351.5" stroke="#3a0e0c" stroke-width="2.0"/>
<polyline points="781.9,338.2 789.1,338.3 796.4,338.6 803.6,339.0 810.9,339.5 818.0,340.1 825.2,340.9 832.2,341.8 839.2,342.8 846.2,343.9 853.0,345.1 859.8,346.5 866.5,348.0 873.0,349.6 879.5,351.3 885.8,353.1" stroke="#3a0e0c" stroke-width="0.9"/>
<polyline points="780.3,381.5 784.1,381.6 787.9,381.7 791.7,381.9 795.4,382.2 799.2,382.5 802.9,382.9 806.6,383.4 810.3,384.0 813.9,384.6 817.4,385.2 820.9,386.0 824.4,386.8 827.8,387.6 831.1,388.5 834.4,389.5" stroke="#3a0e0c" stroke-width="1.2"/>
<polyline points="780.3,379.8 784.3,379.9 788.2,380.1 792.1,380.3 796.0,380.6 799.9,380.9 803.7,381.4 807.6,381.8 811.3,382.4 815.1,383.0 818.8,383.7 822.4,384.5 826.0,385.3 829.5,386.2 832.9,387.1 836.3,388.1" stroke="#3a0e0c" stroke-width="0.7"/>
<line x1="780.3" y1="381.5" x2="781.9" y2="336.4" stroke="#3a0e0c" stroke-width="1.6"/>
<line x1="834.4" y1="389.5" x2="888.0" y2="351.5" stroke="#3a0e0c" stroke-width="1.2"/>
<polyline points="645.1,565.9 635.2,563.3 625.6,560.5 616.3,557.5 607.2,554.3 598.4,551.0 589.9,547.6 581.7,544.0 573.8,540.2 566.3,536.3 559.0,532.3 552.1,528.2 545.6,524.0 539.4,519.7 533.6,515.2 528.1,510.7 523.0,506.1 518.3,501.5 514.0,496.7 510.1,491.9 506.5,487.1 503.3,482.2 500.5,477.3 498.1,472.4 496.1,467.4 494.4,462.4 493.2,457.4 492.3,452.5 491.8,447.5 491.6,442.5 491.8,437.6 492.4,432.7 493.4,427.8 494.7,423.0 496.3,418.2 498.3,413.4 500.6,408.7 503.3,404.1 506.2,399.5 509.5,395.0 513.1,390.6 517.0,386.3 521.2,382.0 525.7,377.8 530.4,373.7 535.4,369.7 540.7,365.8 546.2,362.0 552.0,358.4 558.0,354.8 564.2,351.3 570.7,347.9 577.3,344.7" stroke="#3a0e0c" stroke-width="1.0"/>
<polyline points="646.4,564.5 636.7,561.9 627.2,559.1 617.9,556.2 608.9,553.1 600.2,549.8 591.8,546.4 583.7,542.8 575.8,539.1 568.3,535.3 561.2,531.3 554.3,527.3 547.9,523.1 541.7,518.8 536.0,514.4 530.5,509.9 525.5,505.4 520.8,500.8 516.5,496.1 512.6,491.3 509.1,486.5 505.9,481.7 503.1,476.8 500.7,472.0 498.7,467.0 497.1,462.1 495.8,457.2 494.9,452.2 494.4,447.3 494.2,442.4 494.5,437.5 495.0,432.6 496.0,427.8 497.2,423.0 498.9,418.3 500.8,413.6 503.1,408.9 505.7,404.3 508.7,399.8 511.9,395.3 515.5,390.9 519.3,386.6 523.4,382.4 527.9,378.3 532.6,374.2 537.5,370.2 542.7,366.4 548.2,362.6 553.9,359.0 559.9,355.4 566.1,352.0 572.4,348.6 579.1,345.4" stroke="#3a0e0c" stroke-width="2.0"/>
<polyline points="655.3,555.4 646.2,553.0 637.3,550.4 628.7,547.7 620.3,544.8 612.1,541.8 604.2,538.6 596.6,535.3 589.3,531.8 582.2,528.3 575.5,524.6 569.1,520.8 563.0,516.9 557.2,512.9 551.8,508.8 546.6,504.7 541.9,500.4 537.5,496.1 533.4,491.8 529.7,487.3 526.3,482.9 523.3,478.4 520.6,473.8 518.3,469.2 516.3,464.6 514.7,460.0 513.5,455.4 512.6,450.8 512.1,446.2 511.9,441.6 512.0,437.0 512.5,432.4 513.3,427.9 514.4,423.4 515.9,418.9 517.7,414.5 519.7,410.1 522.1,405.8 524.9,401.5 527.9,397.3 531.1,393.2 534.7,389.2 538.6,385.2 542.7,381.3 547.0,377.4 551.7,373.7 556.5,370.1 561.7,366.5 567.0,363.0 572.6,359.7 578.4,356.4 584.3,353.3 590.5,350.2" stroke="#3a0e0c" stroke-width="1.0"/>
<polyline points="654.1,556.6 645.0,554.1 636.0,551.5 627.3,548.8 618.8,545.9 610.6,542.8 602.6,539.6 595.0,536.2 587.6,532.8 580.5,529.2 573.7,525.5 567.2,521.6 561.1,517.7 555.2,513.7 549.7,509.5 544.6,505.3 539.8,501.1 535.3,496.7 531.2,492.3 527.5,487.9 524.1,483.3 521.1,478.8 518.4,474.2 516.1,469.6 514.1,464.9 512.5,460.3 511.2,455.6 510.3,451.0 509.8,446.3 509.6,441.7 509.8,437.1 510.2,432.5 511.1,427.9 512.2,423.3 513.7,418.8 515.5,414.4 517.6,410.0 520.1,405.6 522.8,401.3 525.8,397.1 529.1,392.9 532.7,388.8 536.6,384.8 540.8,380.9 545.2,377.0 549.9,373.3 554.8,369.6 559.9,366.0 565.3,362.5 570.9,359.1 576.8,355.8 582.8,352.7 589.1,349.6" stroke="#3a0e0c" stroke-width="1.6"/>
<line x1="655.3" y1="555.4" x2="645.1" y2="565.9" stroke="#3a0e0c" stroke-width="1.4"/>
<line x1="590.5" y1="350.2" x2="577.3" y2="344.7" stroke="#3a0e0c" stroke-width="1.4"/>
<line x1="655.3" y1="555.4" x2="645.1" y2="565.9" stroke="#3a0e0c" stroke-width="0.8"/>
<line x1="630.7" y1="548.4" x2="618.5" y2="558.2" stroke="#3a0e0c" stroke-width="0.8"/>
<line x1="608.0" y1="540.1" x2="594.0" y2="549.3" stroke="#3a0e0c" stroke-width="0.8"/>
<line x1="587.3" y1="530.9" x2="571.7" y2="539.2" stroke="#3a0e0c" stroke-width="0.8"/>
<line x1="568.8" y1="520.7" x2="551.9" y2="528.1" stroke="#3a0e0c" stroke-width="0.8"/>
<line x1="552.8" y1="509.7" x2="534.7" y2="516.1" stroke="#3a0e0c" stroke-width="0.8"/>
<line x1="539.4" y1="498.1" x2="520.4" y2="503.5" stroke="#3a0e0c" stroke-width="0.8"/>
<line x1="528.5" y1="485.9" x2="508.9" y2="490.4" stroke="#3a0e0c" stroke-width="0.8"/>
<line x1="520.4" y1="473.5" x2="500.3" y2="476.9" stroke="#3a0e0c" stroke-width="0.8"/>
<line x1="515.0" y1="460.8" x2="494.7" y2="463.2" stroke="#3a0e0c" stroke-width="0.8"/>
<line x1="512.2" y1="448.1" x2="491.9" y2="449.5" stroke="#3a0e0c" stroke-width="0.8"/>
<line x1="512.1" y1="435.4" x2="492.0" y2="435.8" stroke="#3a0e0c" stroke-width="0.8"/>
<line x1="514.6" y1="422.9" x2="494.8" y2="422.4" stroke="#3a0e0c" stroke-width="0.8"/>
<line x1="519.5" y1="410.7" x2="500.3" y2="409.3" stroke="#3a0e0c" stroke-width="0.8"/>
<line x1="526.7" y1="398.9" x2="508.3" y2="396.7" stroke="#3a0e0c" stroke-width="0.8"/>
<line x1="536.2" y1="387.6" x2="518.6" y2="384.6" stroke="#3a0e0c" stroke-width="0.8"/>
<line x1="547.7" y1="376.9" x2="531.1" y2="373.1" stroke="#3a0e0c" stroke-width="0.8"/>
<line x1="561.2" y1="366.8" x2="545.7" y2="362.4" stroke="#3a0e0c" stroke-width="0.8"/>
<line x1="576.4" y1="357.5" x2="562.2" y2="352.4" stroke="#3a0e0c" stroke-width="0.8"/>
<polyline points="577.3,344.7 584.5,341.6 591.9,338.7 599.5,336.0 607.1,333.3 615.0,330.8 623.0,328.4 631.1,326.2 639.3,324.1 647.6,322.1 656.1,320.3 664.6,318.6 673.2,317.1 681.9,315.7 690.7,314.4 699.5,313.3 708.4,312.3 717.3,311.5 726.2,310.8 735.2,310.2 744.1,309.8 753.1,309.5 762.1,309.4 771.1,309.4 780.0,309.6 789.0,309.9 797.8,310.3 806.7,310.9 815.5,311.6 824.2,312.4 832.9,313.4 841.5,314.5 850.0,315.7 858.4,317.1 866.7,318.6 874.9,320.2 883.0,322.0" stroke="#3a0e0c" stroke-width="1.0"/>
<polyline points="579.1,345.4 586.2,342.4 593.5,339.5 601.0,336.8 608.6,334.1 616.4,331.6 624.3,329.3 632.3,327.1 640.5,325.0 648.7,323.0 657.1,321.2 665.6,319.6 674.1,318.0 682.7,316.6 691.4,315.4 700.2,314.3 709.0,313.3 717.8,312.5 726.7,311.8 735.5,311.2 744.4,310.8 753.3,310.6 762.2,310.4 771.1,310.4 780.0,310.6 788.9,310.9 797.7,311.3 806.4,311.9 815.2,312.6 823.8,313.4 832.4,314.4 840.9,315.5 849.3,316.7 857.7,318.1 865.9,319.6 874.0,321.2 882.0,322.9" stroke="#3a0e0c" stroke-width="2.0"/>
<polyline points="589.6,349.8 596.1,346.8 602.8,344.0 609.7,341.3 616.7,338.7 623.9,336.2 631.3,333.8 638.8,331.6 646.4,329.5 654.2,327.5 662.1,325.6 670.1,323.9 678.1,322.3 686.3,320.9 694.6,319.5 702.9,318.3 711.3,317.3 719.8,316.3 728.3,315.5 736.9,314.9 745.4,314.3 754.1,313.9 762.7,313.7 771.3,313.5 780.0,313.6 788.6,313.7 797.2,314.0 805.8,314.4 814.4,315.0 822.9,315.6 831.4,316.5 839.8,317.4 848.2,318.5 856.5,319.7 864.7,321.1 872.8,322.5 880.9,324.1" stroke="#3a0e0c" stroke-width="1.0"/>
<polyline points="588.1,349.2 594.7,346.2 601.4,343.3 608.4,340.6 615.5,338.0 622.7,335.5 630.2,333.1 637.7,330.8 645.4,328.7 653.2,326.7 661.2,324.9 669.2,323.1 677.4,321.5 685.6,320.0 693.9,318.7 702.3,317.5 710.8,316.4 719.3,315.5 727.9,314.7 736.5,314.0 745.2,313.5 753.9,313.1 762.6,312.8 771.3,312.7 780.0,312.7 788.7,312.8 797.4,313.1 806.0,313.5 814.7,314.1 823.3,314.8 831.8,315.6 840.3,316.6 848.7,317.7 857.1,318.9 865.4,320.2 873.6,321.7 881.6,323.3" stroke="#3a0e0c" stroke-width="1.6"/>
<line x1="589.6" y1="349.8" x2="577.3" y2="344.7" stroke="#3a0e0c" stroke-width="1.4"/>
<line x1="880.9" y1="324.1" x2="883.0" y2="322.0" stroke="#3a0e0c" stroke-width="1.4"/>
<line x1="589.6" y1="349.8" x2="577.3" y2="344.7" stroke="#3a0e0c" stroke-width="0.8"/>
<line x1="607.8" y1="342.0" x2="597.5" y2="336.7" stroke="#3a0e0c" stroke-width="0.8"/>
<line x1="627.4" y1="335.1" x2="618.7" y2="329.7" stroke="#3a0e0c" stroke-width="0.8"/>
<line x1="648.1" y1="329.1" x2="641.0" y2="323.7" stroke="#3a0e0c" stroke-width="0.8"/>
<line x1="669.6" y1="324.0" x2="664.2" y2="318.7" stroke="#3a0e0c" stroke-width="0.8"/>
<line x1="692.0" y1="319.9" x2="687.9" y2="314.8" stroke="#3a0e0c" stroke-width="0.8"/>
<line x1="714.9" y1="316.8" x2="712.1" y2="312.0" stroke="#3a0e0c" stroke-width="0.8"/>
<line x1="738.2" y1="314.8" x2="736.6" y2="310.2" stroke="#3a0e0c" stroke-width="0.8"/>
<line x1="761.8" y1="313.7" x2="761.1" y2="309.4" stroke="#3a0e0c" stroke-width="0.8"/>
<line x1="785.4" y1="313.6" x2="785.6" y2="309.7" stroke="#3a0e0c" stroke-width="0.8"/>
<line x1="809.0" y1="314.6" x2="809.9" y2="311.1" stroke="#3a0e0c" stroke-width="0.8"/>
<line x1="832.3" y1="316.6" x2="833.7" y2="313.5" stroke="#3a0e0c" stroke-width="0.8"/>
<line x1="855.2" y1="319.5" x2="857.0" y2="316.9" stroke="#3a0e0c" stroke-width="0.8"/>
<line x1="877.5" y1="323.4" x2="879.5" y2="321.2" stroke="#3a0e0c" stroke-width="0.8"/>
<polyline points="883.0,322.0 891.2,323.6 899.4,325.3 907.6,327.2 915.6,329.1 923.5,331.3 931.2,333.5 938.9,335.9 946.4,338.4 953.7,341.1 960.9,343.8 968.0,346.7 974.8,349.7 981.5,352.9 988.0,356.1 994.3,359.5 1000.4,363.0 1006.2,366.6 1011.8,370.3 1017.2,374.1 1022.4,378.0 1027.3,382.0 1031.9,386.1 1036.2,390.4 1040.3,394.7 1044.1,399.0 1047.6,403.5 1050.7,408.1 1053.6,412.7 1056.1,417.4 1058.3,422.1 1060.2,426.9 1061.7,431.8 1062.9,436.7 1063.7,441.7 1064.1,446.7" stroke="#3a0e0c" stroke-width="1.0"/>
<polyline points="882.0,322.9 890.3,324.5 898.4,326.2 906.4,328.1 914.4,330.0 922.2,332.1 929.9,334.4 937.5,336.7 944.9,339.2 952.2,341.8 959.3,344.6 966.3,347.4 973.1,350.4 979.7,353.5 986.2,356.8 992.4,360.1 998.4,363.6 1004.2,367.1 1009.8,370.8 1015.1,374.6 1020.2,378.5 1025.0,382.4 1029.6,386.5 1033.9,390.7 1038.0,395.0 1041.7,399.3 1045.1,403.7 1048.3,408.2 1051.1,412.8 1053.6,417.5 1055.8,422.2 1057.6,427.0 1059.1,431.8 1060.3,436.6 1061.1,441.6 1061.5,446.5" stroke="#3a0e0c" stroke-width="2.0"/>
<polyline points="878.8,326.3 886.7,327.9 894.5,329.6 902.2,331.4 909.8,333.4 917.3,335.4 924.6,337.7 931.9,340.0 938.9,342.4 945.9,345.0 952.7,347.7 959.3,350.5 965.7,353.4 972.0,356.4 978.1,359.6 983.9,362.8 989.6,366.2 995.0,369.6 1000.2,373.2 1005.2,376.9 1010.0,380.6 1014.4,384.5 1018.7,388.4 1022.6,392.4 1026.3,396.5 1029.8,400.7 1032.9,404.9 1035.7,409.2 1038.2,413.6 1040.5,418.0 1042.4,422.5 1043.9,427.1 1045.2,431.6 1046.1,436.3 1046.7,440.9 1046.9,445.6" stroke="#3a0e0c" stroke-width="1.0"/>
<polyline points="879.5,325.5 887.5,327.1 895.4,328.8 903.2,330.6 910.8,332.6 918.4,334.7 925.8,336.9 933.1,339.3 940.2,341.7 947.2,344.3 954.1,347.0 960.7,349.9 967.2,352.8 973.5,355.9 979.6,359.0 985.6,362.3 991.3,365.7 996.8,369.2 1002.0,372.8 1007.0,376.4 1011.8,380.2 1016.4,384.1 1020.6,388.1 1024.6,392.1 1028.4,396.2 1031.8,400.4 1035.0,404.7 1037.8,409.1 1040.4,413.5 1042.6,417.9 1044.5,422.5 1046.1,427.0 1047.4,431.7 1048.3,436.3 1048.9,441.0 1049.2,445.7" stroke="#3a0e0c" stroke-width="1.6"/>
<line x1="878.8" y1="326.3" x2="883.0" y2="322.0" stroke="#3a0e0c" stroke-width="1.4"/>
<line x1="1046.9" y1="445.6" x2="1064.1" y2="446.7" stroke="#3a0e0c" stroke-width="1.4"/>
<line x1="878.8" y1="326.3" x2="883.0" y2="322.0" stroke="#3a0e0c" stroke-width="0.8"/>
<line x1="900.1" y1="330.9" x2="905.4" y2="326.7" stroke="#3a0e0c" stroke-width="0.8"/>
<line x1="920.7" y1="336.5" x2="927.1" y2="332.3" stroke="#3a0e0c" stroke-width="0.8"/>
<line x1="940.4" y1="342.9" x2="947.9" y2="338.9" stroke="#3a0e0c" stroke-width="0.8"/>
<line x1="958.9" y1="350.3" x2="967.5" y2="346.5" stroke="#3a0e0c" stroke-width="0.8"/>
<line x1="976.1" y1="358.5" x2="985.9" y2="355.0" stroke="#3a0e0c" stroke-width="0.8"/>
<line x1="991.8" y1="367.6" x2="1002.8" y2="364.4" stroke="#3a0e0c" stroke-width="0.8"/>
<line x1="1005.9" y1="377.4" x2="1018.0" y2="374.6" stroke="#3a0e0c" stroke-width="0.8"/>
<line x1="1018.2" y1="387.9" x2="1031.3" y2="385.6" stroke="#3a0e0c" stroke-width="0.8"/>
<line x1="1028.5" y1="399.0" x2="1042.6" y2="397.3" stroke="#3a0e0c" stroke-width="0.8"/>
<line x1="1036.6" y1="410.7" x2="1051.8" y2="409.6" stroke="#3a0e0c" stroke-width="0.8"/>
<line x1="1042.5" y1="422.9" x2="1058.5" y2="422.5" stroke="#3a0e0c" stroke-width="0.8"/>
<line x1="1046.0" y1="435.4" x2="1062.7" y2="435.8" stroke="#3a0e0c" stroke-width="0.8"/>
<polyline points="1045.1,495.0 1040.9,499.8 1036.4,504.5 1031.4,509.2 1026.1,513.8 1020.4,518.4 1014.3,522.8 1007.9,527.1 1001.1,531.3 993.9,535.4 986.3,539.4 978.5,543.2 970.3,546.9 961.8,550.4 953.0,553.8 943.9,557.0 934.5,560.1 924.8,563.0 914.9,565.7 904.8,568.2 894.4,570.5 883.9,572.6 873.1,574.5 862.2,576.2 851.1,577.7 840.0,579.0 828.7,580.0 817.3,580.9 805.8,581.5 794.3,581.9 782.8,582.0 771.3,582.0 759.7,581.7 748.2,581.2 736.8,580.5" stroke="#3a0e0c" stroke-width="1.0"/>
<polyline points="1042.6,494.3 1038.4,499.1 1033.9,503.8 1029.0,508.5 1023.7,513.0 1018.1,517.5 1012.0,521.9 1005.6,526.2 998.9,530.3 991.8,534.4 984.3,538.3 976.5,542.1 968.4,545.7 960.0,549.2 951.2,552.6 942.2,555.8 932.9,558.8 923.4,561.6 913.6,564.3 903.5,566.8 893.3,569.1 882.8,571.1 872.2,573.0 861.4,574.7 850.4,576.2 839.3,577.5 828.2,578.5 816.9,579.3 805.6,579.9 794.2,580.3 782.8,580.5 771.3,580.5 759.9,580.2 748.5,579.7 737.2,579.0" stroke="#3a0e0c" stroke-width="2.0"/>
<polyline points="1025.6,490.2 1021.7,494.6 1017.4,499.0 1012.8,503.3 1007.8,507.6 1002.5,511.7 996.8,515.8 990.8,519.8 984.4,523.7 977.7,527.4 970.7,531.1 963.4,534.6 955.8,538.0 947.9,541.2 939.7,544.4 931.3,547.3 922.6,550.1 913.6,552.7 904.5,555.2 895.1,557.5 885.5,559.6 875.8,561.5 865.8,563.3 855.8,564.9 845.5,566.2 835.2,567.4 824.8,568.4 814.3,569.1 803.7,569.7 793.1,570.1 782.5,570.2 771.8,570.2 761.2,569.9 750.6,569.5 740.0,568.8" stroke="#3a0e0c" stroke-width="1.0"/>
<polyline points="1027.8,490.7 1023.8,495.2 1019.5,499.6 1014.9,504.0 1009.8,508.3 1004.5,512.5 998.7,516.6 992.6,520.6 986.2,524.5 979.5,528.3 972.4,532.0 965.1,535.6 957.4,539.0 949.4,542.3 941.2,545.4 932.7,548.4 923.9,551.2 914.9,553.9 905.6,556.4 896.2,558.7 886.5,560.8 876.6,562.8 866.6,564.5 856.5,566.1 846.2,567.5 835.7,568.7 825.2,569.6 814.6,570.4 803.9,571.0 793.2,571.4 782.5,571.5 771.8,571.5 761.0,571.2 750.3,570.7 739.7,570.1" stroke="#3a0e0c" stroke-width="1.6"/>
<line x1="1025.6" y1="490.2" x2="1045.1" y2="495.0" stroke="#3a0e0c" stroke-width="1.4"/>
<line x1="740.0" y1="568.8" x2="736.8" y2="580.5" stroke="#3a0e0c" stroke-width="1.4"/>
<line x1="1025.6" y1="490.2" x2="1045.1" y2="495.0" stroke="#3a0e0c" stroke-width="0.8"/>
<line x1="1014.2" y1="502.1" x2="1032.9" y2="507.9" stroke="#3a0e0c" stroke-width="0.8"/>
<line x1="1000.1" y1="513.5" x2="1017.9" y2="520.3" stroke="#3a0e0c" stroke-width="0.8"/>
<line x1="983.5" y1="524.2" x2="1000.1" y2="531.9" stroke="#3a0e0c" stroke-width="0.8"/>
<line x1="964.5" y1="534.1" x2="979.7" y2="542.7" stroke="#3a0e0c" stroke-width="0.8"/>
<line x1="943.3" y1="543.0" x2="956.9" y2="552.4" stroke="#3a0e0c" stroke-width="0.8"/>
<line x1="920.1" y1="550.9" x2="931.8" y2="560.9" stroke="#3a0e0c" stroke-width="0.8"/>
<line x1="895.2" y1="557.5" x2="904.9" y2="568.1" stroke="#3a0e0c" stroke-width="0.8"/>
<line x1="868.8" y1="562.8" x2="876.3" y2="573.9" stroke="#3a0e0c" stroke-width="0.8"/>
<line x1="841.3" y1="566.7" x2="846.5" y2="578.2" stroke="#3a0e0c" stroke-width="0.8"/>
<line x1="812.9" y1="569.2" x2="815.8" y2="581.0" stroke="#3a0e0c" stroke-width="0.8"/>
<line x1="784.2" y1="570.2" x2="784.6" y2="582.0" stroke="#3a0e0c" stroke-width="0.8"/>
<line x1="755.3" y1="569.7" x2="753.4" y2="581.5" stroke="#3a0e0c" stroke-width="0.8"/>
</g>
<polygon points="360.7,358.1 425.2,329.6 447.8,350.8 383.4,379.0" fill="#9c4c44" stroke="#3a0e0c" stroke-width="1.2" stroke-linejoin="round" />
<polygon points="360.7,358.1 383.4,379.0 381.5,407.4 357.4,394.7" fill="#a0463c" stroke="#3a0e0c" stroke-width="1.2" stroke-linejoin="round" />
<polygon points="534.2,274.7 590.0,250.0 592.0,287.0 550.3,301.2" fill="#a0554f" stroke="#3a0e0c" stroke-width="1.2" stroke-linejoin="round" />
<polygon points="649.4,251.5 668.9,245.9 671.7,270.9 652.2,268.2" fill="#a45c57" stroke="#3a0e0c" stroke-width="1.2" stroke-linejoin="round" />
<polygon points="809.0,238.4 885.0,238.9 880.3,260.7 809.0,265.9" fill="#a45c57" stroke="#3a0e0c" stroke-width="1.2" stroke-linejoin="round" />
<polygon points="885.0,238.9 943.8,255.0 938.0,275.9 880.3,260.7" fill="#a4524c" stroke="#3a0e0c" stroke-width="1.2" stroke-linejoin="round" />
<polygon points="1074.4,297.2 1144.6,319.2 1125.3,338.5 1062.0,316.4" fill="#a4524c" stroke="#3a0e0c" stroke-width="1.2" stroke-linejoin="round" />
<polygon points="1144.6,319.2 1165.3,352.2 1137.7,374.2 1125.3,338.5" fill="#a8483e" stroke="#3a0e0c" stroke-width="1.2" stroke-linejoin="round" />
<polygon points="350.4,474.6 383.8,492.8 373.2,538.3 342.8,530.7" fill="#a8483e" stroke="#3a0e0c" stroke-width="1.2" stroke-linejoin="round" />
<polygon points="1186.7,447.5 1207.8,435.0 1233.8,480.0 1207.8,491.8" fill="#a0443a" stroke="#3a0e0c" stroke-width="1.2" stroke-linejoin="round" />
<polyline points="342.8,530.7 400.5,558.0 417.2,556.5" fill="none" stroke="#3a0e0c" stroke-width="1.1" />
<polyline points="568.8,626.3 628.0,665.7 732.9,659.0" fill="none" stroke="#3a0e0c" stroke-width="1.1" />
<polyline points="935.0,645.5 1026.2,638.0 1074.2,600.0 1089.8,586.5" fill="none" stroke="#3a0e0c" stroke-width="1.1" />
<polyline points="1207.8,435.0 1233.8,480.0 1192.0,508.0" fill="none" stroke="#3a0e0c" stroke-width="1.1" />
<polyline points="311.4,353.4 360.7,358.1" fill="none" stroke="#3a0e0c" stroke-width="1.1" />
<polyline points="303.8,392.2 357.4,394.7" fill="none" stroke="#3a0e0c" stroke-width="1.1" />
<polyline points="283.7,489.7 350.4,474.6" fill="none" stroke="#3a0e0c" stroke-width="1.1" />
<polyline points="283.7,547.4 342.8,530.7" fill="none" stroke="#3a0e0c" stroke-width="1.1" />
<line x1="309.3" y1="357.3" x2="377.6" y2="315.0" stroke="#3a0e0c" stroke-width="0.7"/>
<line x1="309.3" y1="359.5" x2="377.6" y2="317.2" stroke="#c8786c" stroke-width="0.7"/>
<line x1="309.3" y1="361.7" x2="377.6" y2="319.4" stroke="#3a0e0c" stroke-width="0.7"/>
<line x1="512.0" y1="262.9" x2="568.0" y2="236.8" stroke="#3a0e0c" stroke-width="0.7"/>
<line x1="512.0" y1="265.1" x2="568.0" y2="239.0" stroke="#c8786c" stroke-width="0.7"/>
<line x1="512.0" y1="267.3" x2="568.0" y2="241.2" stroke="#3a0e0c" stroke-width="0.7"/>
<line x1="812.7" y1="223.1" x2="899.2" y2="220.8" stroke="#3a0e0c" stroke-width="0.7"/>
<line x1="812.7" y1="224.9" x2="899.2" y2="222.6" stroke="#c8786c" stroke-width="0.7"/>
<line x1="812.7" y1="226.7" x2="899.2" y2="224.4" stroke="#3a0e0c" stroke-width="0.7"/>
<line x1="899.2" y1="220.8" x2="965.6" y2="240.7" stroke="#3a0e0c" stroke-width="0.7"/>
<line x1="899.2" y1="222.6" x2="965.6" y2="242.5" stroke="#c8786c" stroke-width="0.7"/>
<line x1="899.2" y1="224.4" x2="965.6" y2="244.3" stroke="#3a0e0c" stroke-width="0.7"/>
<line x1="1113.5" y1="288.4" x2="1187.3" y2="312.7" stroke="#3a0e0c" stroke-width="0.7"/>
<line x1="1113.5" y1="290.2" x2="1187.3" y2="314.5" stroke="#c8786c" stroke-width="0.7"/>
<line x1="1113.5" y1="292.0" x2="1187.3" y2="316.3" stroke="#3a0e0c" stroke-width="0.7"/>
<line x1="1185.5" y1="311.4" x2="1208.6" y2="344.6" stroke="#3a0e0c" stroke-width="0.7"/>
<line x1="1183.7" y1="311.9" x2="1206.8" y2="345.1" stroke="#c8786c" stroke-width="0.7"/>
<line x1="1181.9" y1="312.4" x2="1205.0" y2="345.6" stroke="#3a0e0c" stroke-width="0.7"/>
<line x1="1268.6" y1="436.6" x2="1294.9" y2="490.9" stroke="#3a0e0c" stroke-width="0.7"/>
<line x1="1266.8" y1="437.1" x2="1293.1" y2="491.4" stroke="#c8786c" stroke-width="0.7"/>
<line x1="1265.0" y1="437.6" x2="1291.3" y2="491.9" stroke="#3a0e0c" stroke-width="0.7"/>
<line x1="1296.7" y1="492.2" x2="1249.2" y2="529.5" stroke="#3a0e0c" stroke-width="0.7"/>
<line x1="1296.7" y1="494.0" x2="1249.2" y2="531.3" stroke="#c8786c" stroke-width="0.7"/>
<line x1="1296.7" y1="495.8" x2="1249.2" y2="533.1" stroke="#3a0e0c" stroke-width="0.7"/>
<line x1="1136.0" y1="621.1" x2="1074.0" y2="670.8" stroke="#3a0e0c" stroke-width="0.7"/>
<line x1="1136.0" y1="622.9" x2="1074.0" y2="672.6" stroke="#c8786c" stroke-width="0.7"/>
<line x1="1136.0" y1="624.7" x2="1074.0" y2="674.4" stroke="#3a0e0c" stroke-width="0.7"/>
<line x1="1074.0" y1="670.8" x2="952.8" y2="679.8" stroke="#3a0e0c" stroke-width="0.7"/>
<line x1="1074.0" y1="672.6" x2="952.8" y2="681.6" stroke="#c8786c" stroke-width="0.7"/>
<line x1="1074.0" y1="674.4" x2="952.8" y2="683.4" stroke="#3a0e0c" stroke-width="0.7"/>
<line x1="727.8" y1="694.1" x2="602.0" y2="703.8" stroke="#3a0e0c" stroke-width="0.7"/>
<line x1="727.8" y1="695.9" x2="602.0" y2="705.6" stroke="#c8786c" stroke-width="0.7"/>
<line x1="727.8" y1="697.7" x2="602.0" y2="707.4" stroke="#3a0e0c" stroke-width="0.7"/>
<line x1="602.0" y1="703.8" x2="512.7" y2="658.4" stroke="#3a0e0c" stroke-width="0.7"/>
<line x1="602.0" y1="705.6" x2="512.7" y2="660.2" stroke="#c8786c" stroke-width="0.7"/>
<line x1="602.0" y1="707.4" x2="512.7" y2="662.0" stroke="#3a0e0c" stroke-width="0.7"/>
<line x1="355.0" y1="578.0" x2="283.7" y2="549.2" stroke="#3a0e0c" stroke-width="0.7"/>
<line x1="355.0" y1="579.8" x2="283.7" y2="551.0" stroke="#c8786c" stroke-width="0.7"/>
<line x1="355.0" y1="581.6" x2="283.7" y2="552.8" stroke="#3a0e0c" stroke-width="0.7"/>
<line x1="1075.6" y1="669.0" x2="1075.6" y2="700.0" stroke="#3a0e0c" stroke-width="0.7"/>
<line x1="1077.2" y1="669.0" x2="1077.2" y2="700.0" stroke="#c8786c" stroke-width="0.7"/>
<line x1="1078.8" y1="669.0" x2="1078.8" y2="700.0" stroke="#3a0e0c" stroke-width="0.7"/>
<line x1="603.6" y1="702.0" x2="605.3" y2="734.0" stroke="#3a0e0c" stroke-width="0.7"/>
<line x1="605.2" y1="702.0" x2="606.9" y2="734.0" stroke="#c8786c" stroke-width="0.7"/>
<line x1="606.8" y1="702.0" x2="608.5" y2="734.0" stroke="#3a0e0c" stroke-width="0.7"/>
<line x1="881.9" y1="238.0" x2="881.9" y2="260.7" stroke="#3a0e0c" stroke-width="0.7"/>
<line x1="883.5" y1="238.0" x2="883.5" y2="260.7" stroke="#c8786c" stroke-width="0.7"/>
<line x1="885.1" y1="238.0" x2="885.1" y2="260.7" stroke="#3a0e0c" stroke-width="0.7"/>
<line x1="351.9" y1="478.0" x2="344.3" y2="530.7" stroke="#3a0e0c" stroke-width="0.7"/>
<line x1="353.4" y1="478.0" x2="345.8" y2="530.7" stroke="#c8786c" stroke-width="0.7"/>
<line x1="354.9" y1="478.0" x2="347.3" y2="530.7" stroke="#3a0e0c" stroke-width="0.7"/>
<line x1="305.3" y1="392.2" x2="312.9" y2="353.4" stroke="#3a0e0c" stroke-width="0.7"/>
<line x1="306.8" y1="392.2" x2="314.4" y2="353.4" stroke="#c8786c" stroke-width="0.7"/>
<line x1="283.7" y1="549.0" x2="342.8" y2="532.3" stroke="#3a0e0c" stroke-width="0.7"/>
<line x1="283.7" y1="550.6" x2="342.8" y2="533.9" stroke="#c8786c" stroke-width="0.7"/>
<line x1="283.7" y1="552.2" x2="342.8" y2="535.5" stroke="#3a0e0c" stroke-width="0.7"/>
<line x1="1206.3" y1="435.5" x2="1232.3" y2="480.5" stroke="#3a0e0c" stroke-width="0.7"/>
<line x1="1204.8" y1="436.0" x2="1230.8" y2="481.0" stroke="#c8786c" stroke-width="0.7"/>
<line x1="1203.3" y1="436.5" x2="1229.3" y2="481.5" stroke="#3a0e0c" stroke-width="0.7"/>
<line x1="1233.8" y1="481.6" x2="1296.7" y2="492.0" stroke="#3a0e0c" stroke-width="0.7"/>
<line x1="1233.8" y1="483.2" x2="1296.7" y2="493.6" stroke="#c8786c" stroke-width="0.7"/>
<line x1="1233.8" y1="484.8" x2="1296.7" y2="495.2" stroke="#3a0e0c" stroke-width="0.7"/>
<polygon points="355.0,580.7 509.7,655.1 512.7,699.1 358.0,623.2" fill="url(#blkg)" stroke="#3a0e0c" stroke-width="1.2" stroke-linejoin="round" />
<polygon points="355.0,580.7 417.2,556.5 547.6,621.7 509.7,655.1" fill="#ac4b40" stroke="#3a0e0c" stroke-width="1.2" stroke-linejoin="round" />
<polygon points="727.8,692.3 952.8,677.1 952.8,722.6 727.8,737.8" fill="url(#blkg)" stroke="#3a0e0c" stroke-width="1.2" stroke-linejoin="round" />
<polygon points="732.9,649.3 928.8,636.7 952.8,677.1 727.8,692.3" fill="#ac4b40" stroke="#3a0e0c" stroke-width="1.2" stroke-linejoin="round" />
<polygon points="1142.9,614.7 1249.2,527.7 1247.0,571.8 1139.5,660.0" fill="url(#blkg)" stroke="#3a0e0c" stroke-width="1.2" stroke-linejoin="round" />
<polygon points="1184.7,510.7 1249.2,527.7 1142.9,614.7 1089.8,586.5" fill="#ac4b40" stroke="#3a0e0c" stroke-width="1.2" stroke-linejoin="round" />
<polygon points="358.5,395.4 389.0,414.0 384.0,492.0 351.6,476.0" fill="#9a4036" stroke="#3a0e0c" stroke-width="1.2" stroke-linejoin="round" />
<polygon points="297.5,392.4 358.5,395.4 351.6,476.0 283.8,484.0" fill="#ac4b40" stroke="#3a0e0c" stroke-width="1.2" stroke-linejoin="round" />
<polygon points="283.8,484.0 351.6,476.0 384.0,492.0 383.5,497.0 350.5,482.0 285.0,490.0" fill="#6a1e18" stroke="#3a0e0c" stroke-width="0.8" stroke-linejoin="round" />
<polygon points="425.0,329.0 533.1,274.0 550.2,300.5 447.8,350.8" fill="#a0473d" stroke="#3a0e0c" stroke-width="1.2" stroke-linejoin="round" />
<polygon points="377.6,312.8 500.9,255.9 533.1,274.0 425.0,329.0" fill="#ac4b40" stroke="#3a0e0c" stroke-width="1.2" stroke-linejoin="round" />
<polygon points="667.6,245.0 808.9,238.4 809.0,265.9 672.3,272.5" fill="#9c5753" stroke="#3a0e0c" stroke-width="1.2" stroke-linejoin="round" />
<polygon points="652.4,222.2 812.7,214.7 808.9,238.4 667.6,245.0" fill="#ac4b40" stroke="#3a0e0c" stroke-width="1.2" stroke-linejoin="round" />
<polygon points="950.4,255.0 1074.6,292.9 1055.7,319.5 938.1,281.5" fill="#a24e48" stroke="#3a0e0c" stroke-width="1.2" stroke-linejoin="round" />
<polygon points="973.2,234.1 1111.6,276.8 1074.6,292.9 950.4,255.0" fill="#ac4b40" stroke="#3a0e0c" stroke-width="1.2" stroke-linejoin="round" />
<polygon points="1165.6,351.8 1137.5,374.8 1175.8,447.6 1207.8,427.2" fill="#a4463c" stroke="#3a0e0c" stroke-width="1.2" stroke-linejoin="round" />
<polygon points="1219.3,344.1 1270.4,429.7 1207.8,427.2 1165.6,351.8" fill="#ac4b40" stroke="#3a0e0c" stroke-width="1.2" stroke-linejoin="round" />
<polygon points="1175.8,447.6 1207.8,427.2 1270.4,429.7 1270.4,436.1 1207.8,435.0 1180.0,451.0" fill="#6a1e18" stroke="#3a0e0c" stroke-width="0.8" stroke-linejoin="round" />
<linearGradient id="bgt" x1="0" y1="0" x2="1" y2="0"><stop offset="0" stop-color="#4e1410"/><stop offset="0.35" stop-color="#8c3a34"/><stop offset="0.55" stop-color="#9e4a44"/><stop offset="0.8" stop-color="#8c3a34"/><stop offset="1" stop-color="#4a1210"/></linearGradient>
<polygon points="622.3,181.7 622.3,182.5 622.3,183.4 622.4,184.2 622.4,185.1 622.4,185.9 622.4,186.7 622.4,187.6 622.5,188.4 622.5,189.3 622.5,190.1 622.5,190.9 622.5,191.8 622.6,192.6 622.6,193.4 622.6,194.3 622.6,195.1 622.6,196.0 622.7,196.8 622.7,197.6 622.7,198.5 622.7,199.3 622.7,200.2 622.8,201.0 622.8,201.8 622.8,202.7 622.8,203.5 622.8,204.4 622.9,205.2 622.9,206.0 622.9,206.9 622.9,207.7 622.9,208.6 623.0,209.4 623.0,210.2 623.0,211.1 623.0,211.9 623.0,212.8 623.1,213.6 623.1,214.4 623.1,215.3 623.1,216.1 623.2,216.9 623.2,217.8 623.2,218.6 623.2,219.5 623.2,220.3 623.3,221.1 623.3,222.0 623.3,222.8 623.3,223.7 623.3,224.5 623.4,225.3 623.4,226.2 623.4,227.0 623.4,227.9 623.4,228.7 623.5,229.5 623.5,230.4 623.5,231.2 623.5,232.1 623.5,232.9 623.6,233.7 623.6,234.6 623.6,235.4 623.6,236.3 623.6,237.1 623.7,237.9 623.7,238.8 623.7,239.6 623.7,240.4 623.7,241.3 623.8,242.1 623.8,243.0 623.8,243.8 623.8,244.6 623.8,245.5 623.9,246.3 623.9,247.2 623.9,248.0 623.9,248.0 624.0,248.5 624.3,249.1 624.8,249.6 625.5,250.1 626.4,250.5 627.4,250.9 628.6,251.2 629.8,251.5 631.2,251.7 632.7,251.9 634.1,252.0 635.7,252.0 637.1,251.9 638.6,251.7 640.0,251.5 641.2,251.2 642.4,250.9 643.4,250.5 644.3,250.1 645.0,249.6 645.5,249.1 645.8,248.5 645.9,248.0 645.9,248.0 645.9,247.2 645.9,246.3 646.0,245.5 646.0,244.6 646.0,243.8 646.0,243.0 646.0,242.1 646.1,241.3 646.1,240.4 646.1,239.6 646.1,238.8 646.1,237.9 646.2,237.1 646.2,236.3 646.2,235.4 646.2,234.6 646.2,233.7 646.3,232.9 646.3,232.1 646.3,231.2 646.3,230.4 646.3,229.5 646.4,228.7 646.4,227.9 646.4,227.0 646.4,226.2 646.4,225.3 646.5,224.5 646.5,223.7 646.5,222.8 646.5,222.0 646.5,221.1 646.6,220.3 646.6,219.5 646.6,218.6 646.6,217.8 646.6,216.9 646.7,216.1 646.7,215.3 646.7,214.4 646.7,213.6 646.8,212.8 646.8,211.9 646.8,211.1 646.8,210.2 646.8,209.4 646.9,208.6 646.9,207.7 646.9,206.9 646.9,206.0 646.9,205.2 647.0,204.4 647.0,203.5 647.0,202.7 647.0,201.8 647.0,201.0 647.1,200.2 647.1,199.3 647.1,198.5 647.1,197.6 647.1,196.8 647.2,196.0 647.2,195.1 647.2,194.3 647.2,193.4 647.2,192.6 647.3,191.8 647.3,190.9 647.3,190.1 647.3,189.3 647.3,188.4 647.4,187.6 647.4,186.7 647.4,185.9 647.4,185.1 647.4,184.2 647.5,183.4 647.5,182.5 647.5,181.7 647.5,181.7 647.4,181.1 647.0,180.5 646.5,179.9 645.7,179.3 644.7,178.8 643.5,178.4 642.2,178.0 640.7,177.7 639.1,177.4 637.5,177.3 635.8,177.2 634.0,177.2 632.3,177.3 630.7,177.4 629.1,177.7 627.6,178.0 626.3,178.4 625.1,178.8 624.1,179.3 623.3,179.9 622.8,180.5 622.4,181.1 622.3,181.7" fill="url(#bgt)" stroke="#2e0a08" stroke-width="1.2"/>
<polyline points="647.3,182.4 647.3,183.2 647.3,184.1 647.3,184.9 647.3,185.8 647.2,186.6 647.2,187.4 647.2,188.3 647.2,189.1 647.2,190.0 647.1,190.8 647.1,191.6 647.1,192.5 647.1,193.3 647.1,194.1 647.0,195.0 647.0,195.8 647.0,196.7 647.0,197.5 647.0,198.3 646.9,199.2 646.9,200.0 646.9,200.8 646.9,201.7 646.9,202.5 646.8,203.4 646.8,204.2 646.8,205.0 646.8,205.9 646.8,206.7 646.7,207.6 646.7,208.4 646.7,209.2 646.7,210.1 646.7,210.9 646.6,211.7 646.6,212.6 646.6,213.4 646.6,214.3 646.6,215.1 646.5,215.9 646.5,216.8 646.5,217.6 646.5,218.4 646.5,219.3 646.4,220.1 646.4,221.0 646.4,221.8 646.4,222.6 646.4,223.5 646.3,224.3 646.3,225.2 646.3,226.0 646.3,226.8 646.3,227.7 646.2,228.5 646.2,229.3 646.2,230.2 646.2,231.0 646.2,231.9 646.1,232.7 646.1,233.5 646.1,234.4 646.1,235.2 646.1,236.0 646.0,236.9 646.0,237.7 646.0,238.6 646.0,239.4 646.0,240.2 645.9,241.1 645.9,241.9 645.9,242.8 645.9,243.6 645.9,244.4 645.8,245.3 645.8,246.1 645.8,246.9 645.8,247.8 645.8,248.6" fill="none" stroke="#2e0a08" stroke-width="0.8"/>
<polyline points="646.1,183.8 646.1,184.6 646.1,185.4 646.1,186.3 646.1,187.1 646.0,187.9 646.0,188.8 646.0,189.6 646.0,190.4 646.0,191.3 645.9,192.1 645.9,193.0 645.9,193.8 645.9,194.6 645.9,195.5 645.9,196.3 645.8,197.1 645.8,198.0 645.8,198.8 645.8,199.6 645.8,200.5 645.7,201.3 645.7,202.1 645.7,203.0 645.7,203.8 645.7,204.7 645.7,205.5 645.6,206.3 645.6,207.2 645.6,208.0 645.6,208.8 645.6,209.7 645.5,210.5 645.5,211.3 645.5,212.2 645.5,213.0 645.5,213.9 645.5,214.7 645.4,215.5 645.4,216.4 645.4,217.2 645.4,218.0 645.4,218.9 645.4,219.7 645.3,220.5 645.3,221.4 645.3,222.2 645.3,223.0 645.3,223.9 645.2,224.7 645.2,225.6 645.2,226.4 645.2,227.2 645.2,228.1 645.2,228.9 645.1,229.7 645.1,230.6 645.1,231.4 645.1,232.2 645.1,233.1 645.0,233.9 645.0,234.8 645.0,235.6 645.0,236.4 645.0,237.3 645.0,238.1 644.9,238.9 644.9,239.8 644.9,240.6 644.9,241.4 644.9,242.3 644.8,243.1 644.8,243.9 644.8,244.8 644.8,245.6 644.8,246.5 644.8,247.3 644.7,248.1 644.7,249.0 644.7,249.8" fill="none" stroke="#2e0a08" stroke-width="0.8"/>
<polyline points="643.8,184.9 643.8,185.7 643.8,186.6 643.8,187.4 643.8,188.2 643.7,189.1 643.7,189.9 643.7,190.7 643.7,191.6 643.7,192.4 643.7,193.2 643.7,194.1 643.6,194.9 643.6,195.8 643.6,196.6 643.6,197.4 643.6,198.3 643.6,199.1 643.6,199.9 643.5,200.8 643.5,201.6 643.5,202.4 643.5,203.3 643.5,204.1 643.5,204.9 643.5,205.8 643.4,206.6 643.4,207.4 643.4,208.3 643.4,209.1 643.4,209.9 643.4,210.8 643.4,211.6 643.3,212.4 643.3,213.3 643.3,214.1 643.3,214.9 643.3,215.8 643.3,216.6 643.3,217.4 643.2,218.3 643.2,219.1 643.2,219.9 643.2,220.8 643.2,221.6 643.2,222.4 643.2,223.3 643.1,224.1 643.1,224.9 643.1,225.8 643.1,226.6 643.1,227.4 643.1,228.3 643.1,229.1 643.0,229.9 643.0,230.8 643.0,231.6 643.0,232.5 643.0,233.3 643.0,234.1 643.0,235.0 642.9,235.8 642.9,236.6 642.9,237.5 642.9,238.3 642.9,239.1 642.9,240.0 642.9,240.8 642.8,241.6 642.8,242.5 642.8,243.3 642.8,244.1 642.8,245.0 642.8,245.8 642.7,246.6 642.7,247.5 642.7,248.3 642.7,249.1 642.7,250.0 642.7,250.8" fill="none" stroke="#2e0a08" stroke-width="0.8"/>
<polyline points="640.6,185.7 640.6,186.6 640.6,187.4 640.6,188.2 640.6,189.1 640.6,189.9 640.6,190.7 640.6,191.6 640.5,192.4 640.5,193.2 640.5,194.1 640.5,194.9 640.5,195.7 640.5,196.6 640.5,197.4 640.5,198.2 640.5,199.1 640.5,199.9 640.5,200.7 640.4,201.6 640.4,202.4 640.4,203.2 640.4,204.1 640.4,204.9 640.4,205.7 640.4,206.6 640.4,207.4 640.4,208.2 640.4,209.1 640.4,209.9 640.3,210.7 640.3,211.6 640.3,212.4 640.3,213.2 640.3,214.1 640.3,214.9 640.3,215.7 640.3,216.6 640.3,217.4 640.3,218.2 640.3,219.1 640.2,219.9 640.2,220.7 640.2,221.5 640.2,222.4 640.2,223.2 640.2,224.0 640.2,224.9 640.2,225.7 640.2,226.5 640.2,227.4 640.2,228.2 640.1,229.0 640.1,229.9 640.1,230.7 640.1,231.5 640.1,232.4 640.1,233.2 640.1,234.0 640.1,234.9 640.1,235.7 640.1,236.5 640.1,237.4 640.0,238.2 640.0,239.0 640.0,239.9 640.0,240.7 640.0,241.5 640.0,242.4 640.0,243.2 640.0,244.0 640.0,244.9 640.0,245.7 639.9,246.5 639.9,247.4 639.9,248.2 639.9,249.0 639.9,249.9 639.9,250.7 639.9,251.5" fill="none" stroke="#2e0a08" stroke-width="0.8"/>
<polyline points="636.9,186.2 636.9,187.0 636.9,187.8 636.9,188.7 636.9,189.5 636.9,190.3 636.9,191.2 636.8,192.0 636.8,192.8 636.8,193.7 636.8,194.5 636.8,195.3 636.8,196.2 636.8,197.0 636.8,197.8 636.8,198.7 636.8,199.5 636.8,200.3 636.8,201.2 636.8,202.0 636.8,202.8 636.8,203.7 636.8,204.5 636.8,205.3 636.8,206.1 636.8,207.0 636.8,207.8 636.8,208.6 636.8,209.5 636.8,210.3 636.8,211.1 636.8,212.0 636.8,212.8 636.8,213.6 636.8,214.5 636.8,215.3 636.8,216.1 636.8,217.0 636.8,217.8 636.7,218.6 636.7,219.5 636.7,220.3 636.7,221.1 636.7,222.0 636.7,222.8 636.7,223.6 636.7,224.5 636.7,225.3 636.7,226.1 636.7,227.0 636.7,227.8 636.7,228.6 636.7,229.4 636.7,230.3 636.7,231.1 636.7,231.9 636.7,232.8 636.7,233.6 636.7,234.4 636.7,235.3 636.7,236.1 636.7,236.9 636.7,237.8 636.7,238.6 636.7,239.4 636.7,240.3 636.7,241.1 636.7,241.9 636.7,242.8 636.7,243.6 636.6,244.4 636.6,245.3 636.6,246.1 636.6,246.9 636.6,247.8 636.6,248.6 636.6,249.4 636.6,250.2 636.6,251.1 636.6,251.9" fill="none" stroke="#2e0a08" stroke-width="0.8"/>
<polyline points="632.9,186.2 632.9,187.0 632.9,187.8 632.9,188.7 632.9,189.5 632.9,190.3 632.9,191.2 633.0,192.0 633.0,192.8 633.0,193.7 633.0,194.5 633.0,195.3 633.0,196.2 633.0,197.0 633.0,197.8 633.0,198.7 633.0,199.5 633.0,200.3 633.0,201.2 633.0,202.0 633.0,202.8 633.0,203.7 633.0,204.5 633.0,205.3 633.0,206.1 633.0,207.0 633.0,207.8 633.0,208.6 633.0,209.5 633.0,210.3 633.0,211.1 633.0,212.0 633.0,212.8 633.0,213.6 633.0,214.5 633.0,215.3 633.0,216.1 633.0,217.0 633.0,217.8 633.1,218.6 633.1,219.5 633.1,220.3 633.1,221.1 633.1,222.0 633.1,222.8 633.1,223.6 633.1,224.5 633.1,225.3 633.1,226.1 633.1,227.0 633.1,227.8 633.1,228.6 633.1,229.4 633.1,230.3 633.1,231.1 633.1,231.9 633.1,232.8 633.1,233.6 633.1,234.4 633.1,235.3 633.1,236.1 633.1,236.9 633.1,237.8 633.1,238.6 633.1,239.4 633.1,240.3 633.1,241.1 633.1,241.9 633.1,242.8 633.1,243.6 633.2,244.4 633.2,245.3 633.2,246.1 633.2,246.9 633.2,247.8 633.2,248.6 633.2,249.4 633.2,250.2 633.2,251.1 633.2,251.9" fill="none" stroke="#2e0a08" stroke-width="0.8"/>
<polyline points="629.2,185.7 629.2,186.6 629.2,187.4 629.2,188.2 629.2,189.1 629.2,189.9 629.2,190.7 629.2,191.6 629.3,192.4 629.3,193.2 629.3,194.1 629.3,194.9 629.3,195.7 629.3,196.6 629.3,197.4 629.3,198.2 629.3,199.1 629.3,199.9 629.3,200.7 629.4,201.6 629.4,202.4 629.4,203.2 629.4,204.1 629.4,204.9 629.4,205.7 629.4,206.6 629.4,207.4 629.4,208.2 629.4,209.1 629.4,209.9 629.5,210.7 629.5,211.6 629.5,212.4 629.5,213.2 629.5,214.1 629.5,214.9 629.5,215.7 629.5,216.6 629.5,217.4 629.5,218.2 629.5,219.1 629.6,219.9 629.6,220.7 629.6,221.5 629.6,222.4 629.6,223.2 629.6,224.0 629.6,224.9 629.6,225.7 629.6,226.5 629.6,227.4 629.6,228.2 629.7,229.0 629.7,229.9 629.7,230.7 629.7,231.5 629.7,232.4 629.7,233.2 629.7,234.0 629.7,234.9 629.7,235.7 629.7,236.5 629.7,237.4 629.8,238.2 629.8,239.0 629.8,239.9 629.8,240.7 629.8,241.5 629.8,242.4 629.8,243.2 629.8,244.0 629.8,244.9 629.8,245.7 629.9,246.5 629.9,247.4 629.9,248.2 629.9,249.0 629.9,249.9 629.9,250.7 629.9,251.5" fill="none" stroke="#2e0a08" stroke-width="0.8"/>
<polyline points="626.0,184.9 626.0,185.7 626.0,186.6 626.0,187.4 626.0,188.2 626.1,189.1 626.1,189.9 626.1,190.7 626.1,191.6 626.1,192.4 626.1,193.2 626.1,194.1 626.2,194.9 626.2,195.8 626.2,196.6 626.2,197.4 626.2,198.3 626.2,199.1 626.2,199.9 626.3,200.8 626.3,201.6 626.3,202.4 626.3,203.3 626.3,204.1 626.3,204.9 626.3,205.8 626.4,206.6 626.4,207.4 626.4,208.3 626.4,209.1 626.4,209.9 626.4,210.8 626.4,211.6 626.5,212.4 626.5,213.3 626.5,214.1 626.5,214.9 626.5,215.8 626.5,216.6 626.5,217.4 626.6,218.3 626.6,219.1 626.6,219.9 626.6,220.8 626.6,221.6 626.6,222.4 626.6,223.3 626.7,224.1 626.7,224.9 626.7,225.8 626.7,226.6 626.7,227.4 626.7,228.3 626.7,229.1 626.8,229.9 626.8,230.8 626.8,231.6 626.8,232.5 626.8,233.3 626.8,234.1 626.8,235.0 626.9,235.8 626.9,236.6 626.9,237.5 626.9,238.3 626.9,239.1 626.9,240.0 626.9,240.8 627.0,241.6 627.0,242.5 627.0,243.3 627.0,244.1 627.0,245.0 627.0,245.8 627.1,246.6 627.1,247.5 627.1,248.3 627.1,249.1 627.1,250.0 627.1,250.8" fill="none" stroke="#2e0a08" stroke-width="0.8"/>
<polyline points="623.7,183.8 623.7,184.6 623.7,185.4 623.7,186.3 623.7,187.1 623.8,187.9 623.8,188.8 623.8,189.6 623.8,190.4 623.8,191.3 623.9,192.1 623.9,193.0 623.9,193.8 623.9,194.6 623.9,195.5 623.9,196.3 624.0,197.1 624.0,198.0 624.0,198.8 624.0,199.6 624.0,200.5 624.1,201.3 624.1,202.1 624.1,203.0 624.1,203.8 624.1,204.7 624.1,205.5 624.2,206.3 624.2,207.2 624.2,208.0 624.2,208.8 624.2,209.7 624.3,210.5 624.3,211.3 624.3,212.2 624.3,213.0 624.3,213.9 624.3,214.7 624.4,215.5 624.4,216.4 624.4,217.2 624.4,218.0 624.4,218.9 624.4,219.7 624.5,220.5 624.5,221.4 624.5,222.2 624.5,223.0 624.5,223.9 624.6,224.7 624.6,225.6 624.6,226.4 624.6,227.2 624.6,228.1 624.6,228.9 624.7,229.7 624.7,230.6 624.7,231.4 624.7,232.2 624.7,233.1 624.8,233.9 624.8,234.8 624.8,235.6 624.8,236.4 624.8,237.3 624.8,238.1 624.9,238.9 624.9,239.8 624.9,240.6 624.9,241.4 624.9,242.3 625.0,243.1 625.0,243.9 625.0,244.8 625.0,245.6 625.0,246.5 625.0,247.3 625.1,248.1 625.1,249.0 625.1,249.8" fill="none" stroke="#2e0a08" stroke-width="0.8"/>
<polyline points="622.5,182.4 622.5,183.2 622.5,184.1 622.5,184.9 622.5,185.8 622.6,186.6 622.6,187.4 622.6,188.3 622.6,189.1 622.6,190.0 622.7,190.8 622.7,191.6 622.7,192.5 622.7,193.3 622.7,194.1 622.8,195.0 622.8,195.8 622.8,196.7 622.8,197.5 622.8,198.3 622.9,199.2 622.9,200.0 622.9,200.8 622.9,201.7 622.9,202.5 623.0,203.4 623.0,204.2 623.0,205.0 623.0,205.9 623.0,206.7 623.1,207.6 623.1,208.4 623.1,209.2 623.1,210.1 623.1,210.9 623.2,211.7 623.2,212.6 623.2,213.4 623.2,214.3 623.2,215.1 623.3,215.9 623.3,216.8 623.3,217.6 623.3,218.4 623.3,219.3 623.4,220.1 623.4,221.0 623.4,221.8 623.4,222.6 623.4,223.5 623.5,224.3 623.5,225.2 623.5,226.0 623.5,226.8 623.5,227.7 623.6,228.5 623.6,229.3 623.6,230.2 623.6,231.0 623.6,231.9 623.7,232.7 623.7,233.5 623.7,234.4 623.7,235.2 623.7,236.0 623.8,236.9 623.8,237.7 623.8,238.6 623.8,239.4 623.8,240.2 623.9,241.1 623.9,241.9 623.9,242.8 623.9,243.6 623.9,244.4 624.0,245.3 624.0,246.1 624.0,246.9 624.0,247.8 624.0,248.6" fill="none" stroke="#2e0a08" stroke-width="0.8"/>
<polygon points="647.5,181.7 647.3,182.5 646.7,183.3 645.7,184.0 644.4,184.7 642.8,185.2 640.9,185.7 638.8,186.0 636.6,186.2 634.3,186.2 632.1,186.1 629.9,185.9 628.0,185.5 626.2,185.0 624.7,184.4 623.5,183.7 622.8,182.9 622.4,182.1 622.4,181.3 622.8,180.5 623.5,179.7 624.7,179.0 626.2,178.4 628.0,177.9 629.9,177.5 632.1,177.3 634.3,177.2 636.6,177.2 638.8,177.4 640.9,177.7 642.8,178.2 644.4,178.7 645.7,179.4 646.7,180.1 647.3,180.9 647.5,181.7" fill="#8a4038" stroke="#2e0a08" stroke-width="1"/>
<polyline points="646.8,210.0 646.7,210.7 646.2,211.4 645.4,212.0 644.3,212.6 643.0,213.2 641.4,213.6 639.7,213.9 637.8,214.2 635.9,214.3 633.9,214.3 632.0,214.2 630.1,213.9 628.4,213.6 626.8,213.2 625.5,212.6 624.4,212.0 623.6,211.4 623.1,210.7 623.0,210.0" fill="none" stroke="#2e0a08" stroke-width="0.8"/>
<polyline points="646.5,225.0 646.3,225.7 645.8,226.4 645.1,227.0 644.0,227.6 642.7,228.1 641.2,228.5 639.5,228.8 637.7,229.0 635.9,229.1 633.9,229.1 632.1,229.0 630.3,228.8 628.6,228.5 627.1,228.1 625.8,227.6 624.7,227.0 624.0,226.4 623.5,225.7 623.3,225.0" fill="none" stroke="#2e0a08" stroke-width="0.8"/>
<polyline points="646.1,240.0 645.9,240.7 645.5,241.3 644.7,241.9 643.7,242.5 642.5,243.0 641.0,243.4 639.4,243.7 637.6,243.9 635.8,244.0 634.0,244.0 632.2,243.9 630.4,243.7 628.8,243.4 627.3,243.0 626.1,242.5 625.1,241.9 624.3,241.3 623.9,240.7 623.7,240.0" fill="none" stroke="#2e0a08" stroke-width="0.8"/>
<ellipse cx="634.9" cy="181.7" rx="12.6" ry="4.5" fill="#7a3a36" stroke="#2e0a08" stroke-width="1"/>
<linearGradient id="bg1" x1="0" y1="0" x2="1" y2="0"><stop offset="0" stop-color="#4e1410"/><stop offset="0.35" stop-color="#72221b"/><stop offset="0.55" stop-color="#86352d"/><stop offset="0.8" stop-color="#72221b"/><stop offset="1" stop-color="#4a1210"/></linearGradient>
<polygon points="598.3,175.4 598.3,178.2 598.3,181.0 598.3,183.8 598.3,186.6 598.3,189.4 598.6,192.2 599.5,195.0 599.5,197.8 599.6,200.6 599.6,203.5 599.6,206.3 599.7,209.1 599.7,211.9 599.7,214.7 599.7,217.5 599.8,220.3 599.8,223.1 599.8,225.9 599.8,228.7 599.9,231.5 599.9,234.3 599.9,237.1 600.0,239.9 600.0,242.7 598.1,245.5 594.6,248.3 591.1,251.1 587.6,253.9 584.1,256.7 580.6,259.6 579.0,262.4 577.9,265.2 576.7,268.0 576.9,270.8 577.0,273.6 577.2,276.4 577.4,279.2 577.5,282.0 577.7,284.8 577.9,287.6 578.0,290.4 578.2,293.2 578.4,296.0 578.5,298.8 578.7,301.6 578.9,304.4 579.0,307.2 579.2,310.0 579.4,312.8 579.6,315.7 579.7,318.5 579.9,321.3 580.1,324.1 580.2,326.9 580.4,329.7 580.6,332.5 580.7,335.3 580.9,338.1 581.1,340.9 581.2,343.7 581.4,346.5 581.6,349.3 581.7,352.1 581.9,354.9 582.1,357.7 582.2,360.5 582.4,363.3 582.6,366.1 582.7,368.9 582.9,371.8 583.1,374.6 583.2,377.4 583.4,380.2 583.6,383.0 583.7,385.8 583.9,388.6 584.1,391.4 584.3,394.2 584.5,397.0 584.5,397.0 584.8,398.6 585.7,400.2 587.2,401.7 589.3,403.2 591.9,404.5 595.0,405.7 598.5,406.7 602.3,407.5 606.4,408.2 610.8,408.6 615.2,408.9 619.8,408.9 624.2,408.6 628.6,408.2 632.7,407.5 636.5,406.7 640.0,405.7 643.1,404.5 645.7,403.2 647.8,401.7 649.3,400.2 650.2,398.6 650.5,397.0 650.5,397.0 650.7,394.2 650.9,391.4 651.0,388.6 651.0,385.8 651.0,383.0 651.0,380.2 651.0,377.4 651.0,374.6 651.0,371.8 650.9,368.9 650.9,366.1 650.9,363.3 650.9,360.5 650.9,357.7 650.9,354.9 650.9,352.1 650.9,349.3 650.9,346.5 650.9,343.7 650.9,340.9 650.9,338.1 650.9,335.3 650.9,332.5 650.9,329.7 650.8,326.9 650.8,324.1 650.8,321.3 650.8,318.5 650.8,315.7 650.8,312.8 650.8,310.0 650.8,307.2 650.8,304.4 650.8,301.6 650.8,298.8 650.8,296.0 650.8,293.2 650.8,290.4 650.7,287.6 650.7,284.8 650.7,282.0 650.7,279.2 650.7,276.4 650.7,273.6 650.7,270.8 650.7,268.0 649.0,265.2 647.4,262.4 645.3,259.6 641.1,256.7 636.9,253.9 632.7,251.1 628.5,248.3 624.3,245.5 622.0,242.7 622.0,239.9 621.9,237.1 621.9,234.3 621.9,231.5 621.8,228.7 621.8,225.9 621.8,223.1 621.8,220.3 621.7,217.5 621.7,214.7 621.7,211.9 621.7,209.1 621.6,206.3 621.6,203.5 621.6,200.6 621.5,197.8 621.5,195.0 622.4,192.2 622.7,189.4 622.7,186.6 622.7,183.8 622.7,181.0 622.7,178.2 622.7,175.4 622.7,175.4 622.6,174.8 622.2,174.2 621.7,173.7 620.9,173.1 620.0,172.6 618.8,172.2 617.5,171.8 616.1,171.5 614.6,171.3 613.0,171.1 611.3,171.0 609.7,171.0 608.0,171.1 606.4,171.3 604.9,171.5 603.5,171.8 602.2,172.2 601.0,172.6 600.1,173.1 599.3,173.7 598.8,174.2 598.4,174.8 598.3,175.4" fill="url(#bg1)" stroke="#2e0a08" stroke-width="1.2"/>
<polyline points="621.7,176.1 621.7,178.9 621.7,181.7 621.7,184.5 621.7,187.3 621.7,190.1 621.4,192.9 620.6,195.7 620.6,198.5 620.7,201.3 620.7,204.1 620.7,206.9 620.8,209.7 620.8,212.5 620.8,215.3 620.8,218.1 620.9,220.9 620.9,223.7 620.9,226.5 620.9,229.3 621.0,232.1 621.0,234.9 621.0,237.7 621.1,240.5 621.1,243.3 623.2,246.3 627.1,249.3 631.0,252.3 634.9,255.3 638.8,258.4 642.7,261.4 644.6,264.3 646.1,267.2 647.6,270.0 647.7,272.9 647.7,275.7 647.7,278.5 647.7,281.3 647.7,284.1 647.7,286.9 647.7,289.7 647.8,292.5 647.8,295.3 647.8,298.1 647.8,300.9 647.8,303.7 647.8,306.5 647.8,309.3 647.9,312.1 647.9,314.9 647.9,317.7 647.9,320.5 647.9,323.3 647.9,326.1 647.9,328.9 647.9,331.7 648.0,334.5 648.0,337.3 648.0,340.1 648.0,342.9 648.0,345.7 648.0,348.5 648.0,351.3 648.1,354.1 648.1,356.9 648.1,359.7 648.1,362.5 648.1,365.3 648.1,368.1 648.1,370.9 648.1,373.7 648.2,376.5 648.2,379.3 648.2,382.1 648.2,384.9 648.2,387.7 648.2,390.5 648.1,393.3 648.0,396.1 647.8,398.9" fill="none" stroke="#2e0a08" stroke-width="0.8"/>
<polyline points="619.5,177.4 619.5,180.2 619.5,183.0 619.5,185.8 619.5,188.6 619.5,191.4 619.3,194.2 618.6,196.8 618.7,199.6 618.7,202.4 618.7,205.2 618.8,208.1 618.8,210.9 618.8,213.7 618.8,216.5 618.9,219.3 618.9,222.1 618.9,224.9 618.9,227.7 619.0,230.5 619.0,233.3 619.0,236.1 619.1,238.9 619.1,241.7 619.1,244.5 620.9,247.7 624.1,251.1 627.3,254.5 630.5,258.0 633.7,261.4 636.8,264.8 638.4,267.9 639.7,271.0 641.0,274.0 641.0,276.8 641.1,279.6 641.1,282.4 641.1,285.2 641.2,288.0 641.2,290.8 641.2,293.6 641.2,296.3 641.3,299.1 641.3,301.9 641.3,304.7 641.3,307.5 641.4,310.3 641.4,313.1 641.4,315.9 641.5,318.7 641.5,321.5 641.5,324.3 641.5,327.1 641.6,329.9 641.6,332.6 641.6,335.4 641.7,338.2 641.7,341.0 641.7,343.8 641.7,346.6 641.8,349.4 641.8,352.2 641.8,355.0 641.9,357.8 641.9,360.6 641.9,363.4 641.9,366.1 642.0,368.9 642.0,371.7 642.0,374.5 642.0,377.3 642.1,380.1 642.1,382.9 642.1,385.7 642.2,388.5 642.2,391.3 642.2,394.1 642.2,396.8 642.0,399.6 641.9,402.4" fill="none" stroke="#2e0a08" stroke-width="0.8"/>
<polyline points="617.1,178.5 617.1,181.3 617.1,184.1 617.1,186.9 617.1,189.7 617.1,192.5 617.0,195.3 616.5,197.8 616.5,200.6 616.5,203.4 616.6,206.3 616.6,209.1 616.6,211.9 616.6,214.7 616.7,217.5 616.7,220.3 616.7,223.1 616.8,225.9 616.8,228.7 616.8,231.5 616.8,234.3 616.9,237.1 616.9,239.9 616.9,242.7 616.9,245.5 618.3,248.9 620.7,252.6 623.2,256.4 625.6,260.2 628.0,264.0 630.5,267.8 631.7,271.1 632.7,274.2 633.7,277.4 633.8,280.2 633.8,283.0 633.9,285.7 633.9,288.5 634.0,291.3 634.0,294.1 634.0,296.9 634.1,299.7 634.1,302.4 634.2,305.2 634.2,308.0 634.3,310.8 634.3,313.6 634.3,316.4 634.4,319.2 634.4,321.9 634.5,324.7 634.5,327.5 634.6,330.3 634.6,333.1 634.7,335.9 634.7,338.6 634.7,341.4 634.8,344.2 634.8,347.0 634.9,349.8 634.9,352.6 635.0,355.4 635.0,358.1 635.0,360.9 635.1,363.7 635.1,366.5 635.2,369.3 635.2,372.1 635.3,374.8 635.3,377.6 635.4,380.4 635.4,383.2 635.4,386.0 635.5,388.8 635.5,391.6 635.6,394.3 635.6,397.1 635.6,399.9 635.5,402.6 635.4,405.4" fill="none" stroke="#2e0a08" stroke-width="0.8"/>
<polyline points="614.5,179.3 614.5,182.1 614.5,184.9 614.5,187.7 614.5,190.5 614.5,193.3 614.4,196.1 614.2,198.6 614.2,201.4 614.2,204.2 614.2,207.0 614.3,209.8 614.3,212.6 614.3,215.4 614.4,218.2 614.4,221.0 614.4,223.8 614.4,226.6 614.5,229.4 614.5,232.2 614.5,235.0 614.5,237.8 614.6,240.6 614.6,243.4 614.6,246.2 615.5,249.7 617.2,253.8 618.8,257.8 620.4,261.9 622.0,265.9 623.7,269.9 624.5,273.3 625.2,276.6 625.9,279.8 626.0,282.6 626.1,285.4 626.1,288.2 626.2,291.0 626.2,293.7 626.3,296.5 626.4,299.3 626.4,302.1 626.5,304.8 626.5,307.6 626.6,310.4 626.7,313.2 626.7,316.0 626.8,318.7 626.9,321.5 626.9,324.3 627.0,327.1 627.0,329.9 627.1,332.6 627.2,335.4 627.2,338.2 627.3,341.0 627.3,343.8 627.4,346.5 627.5,349.3 627.5,352.1 627.6,354.9 627.6,357.7 627.7,360.4 627.8,363.2 627.8,366.0 627.9,368.8 627.9,371.6 628.0,374.3 628.1,377.1 628.1,379.9 628.2,382.7 628.2,385.4 628.3,388.2 628.4,391.0 628.4,393.8 628.5,396.6 628.6,399.3 628.5,402.1 628.5,404.8 628.4,407.6" fill="none" stroke="#2e0a08" stroke-width="0.8"/>
<polyline points="611.9,179.7 611.9,182.5 611.9,185.3 611.9,188.2 611.9,191.0 611.9,193.8 611.8,196.5 611.7,198.9 611.8,201.8 611.8,204.6 611.8,207.4 611.9,210.2 611.9,213.0 611.9,215.8 611.9,218.6 612.0,221.4 612.0,224.2 612.0,227.0 612.0,229.8 612.1,232.6 612.1,235.4 612.1,238.2 612.2,241.0 612.2,243.8 612.2,246.6 612.6,250.2 613.4,254.4 614.2,258.5 615.0,262.7 615.8,266.9 616.5,271.1 617.0,274.5 617.4,277.8 617.8,281.1 617.9,283.9 618.0,286.7 618.1,289.5 618.1,292.2 618.2,295.0 618.3,297.8 618.4,300.6 618.4,303.3 618.5,306.1 618.6,308.9 618.7,311.7 618.8,314.4 618.8,317.2 618.9,320.0 619.0,322.8 619.1,325.5 619.1,328.3 619.2,331.1 619.3,333.9 619.4,336.7 619.5,339.4 619.5,342.2 619.6,345.0 619.7,347.8 619.8,350.5 619.9,353.3 619.9,356.1 620.0,358.9 620.1,361.6 620.2,364.4 620.2,367.2 620.3,370.0 620.4,372.7 620.5,375.5 620.6,378.3 620.6,381.1 620.7,383.9 620.8,386.6 620.9,389.4 621.0,392.2 621.0,395.0 621.1,397.7 621.2,400.5 621.2,403.3 621.2,406.0 621.2,408.7" fill="none" stroke="#2e0a08" stroke-width="0.8"/>
<polyline points="609.1,179.7 609.1,182.5 609.1,185.3 609.1,188.2 609.1,191.0 609.1,193.8 609.2,196.5 609.3,198.9 609.3,201.8 609.4,204.6 609.4,207.4 609.4,210.2 609.4,213.0 609.5,215.8 609.5,218.6 609.5,221.4 609.5,224.2 609.6,227.0 609.6,229.8 609.6,232.6 609.7,235.4 609.7,238.2 609.7,241.0 609.7,243.8 609.8,246.6 609.7,250.2 609.7,254.4 609.6,258.5 609.5,262.7 609.4,266.9 609.3,271.1 609.4,274.5 609.5,277.8 609.6,281.1 609.7,283.9 609.8,286.7 609.9,289.5 610.0,292.2 610.1,295.0 610.2,297.8 610.3,300.6 610.4,303.3 610.4,306.1 610.5,308.9 610.6,311.7 610.7,314.4 610.8,317.2 610.9,320.0 611.0,322.8 611.1,325.5 611.2,328.3 611.3,331.1 611.4,333.9 611.5,336.7 611.6,339.4 611.7,342.2 611.8,345.0 611.9,347.8 612.0,350.5 612.1,353.3 612.2,356.1 612.3,358.9 612.4,361.6 612.5,364.4 612.6,367.2 612.7,370.0 612.8,372.7 612.9,375.5 613.0,378.3 613.0,381.1 613.1,383.9 613.2,386.6 613.3,389.4 613.4,392.2 613.5,395.0 613.6,397.7 613.7,400.5 613.8,403.3 613.8,406.0 613.8,408.7" fill="none" stroke="#2e0a08" stroke-width="0.8"/>
<polyline points="606.5,179.3 606.5,182.1 606.5,184.9 606.5,187.7 606.5,190.5 606.5,193.3 606.6,196.1 606.9,198.6 606.9,201.4 606.9,204.2 607.0,207.0 607.0,209.8 607.0,212.6 607.0,215.4 607.1,218.2 607.1,221.0 607.1,223.8 607.2,226.6 607.2,229.4 607.2,232.2 607.2,235.0 607.3,237.8 607.3,240.6 607.3,243.4 607.3,246.2 606.9,249.7 605.9,253.8 605.0,257.8 604.1,261.9 603.2,265.9 602.2,269.9 601.9,273.3 601.7,276.6 601.5,279.8 601.6,282.6 601.7,285.4 601.8,288.2 601.9,291.0 602.0,293.7 602.1,296.5 602.3,299.3 602.4,302.1 602.5,304.8 602.6,307.6 602.7,310.4 602.8,313.2 602.9,316.0 603.1,318.7 603.2,321.5 603.3,324.3 603.4,327.1 603.5,329.9 603.6,332.6 603.7,335.4 603.9,338.2 604.0,341.0 604.1,343.8 604.2,346.5 604.3,349.3 604.4,352.1 604.5,354.9 604.7,357.7 604.8,360.4 604.9,363.2 605.0,366.0 605.1,368.8 605.2,371.6 605.3,374.3 605.4,377.1 605.6,379.9 605.7,382.7 605.8,385.4 605.9,388.2 606.0,391.0 606.1,393.8 606.2,396.6 606.4,399.3 606.5,402.1 606.5,404.8 606.6,407.6" fill="none" stroke="#2e0a08" stroke-width="0.8"/>
<polyline points="603.9,178.5 603.9,181.3 603.9,184.1 603.9,186.9 603.9,189.7 603.9,192.5 604.0,195.3 604.6,197.8 604.6,200.6 604.6,203.4 604.6,206.3 604.7,209.1 604.7,211.9 604.7,214.7 604.8,217.5 604.8,220.3 604.8,223.1 604.8,225.9 604.9,228.7 604.9,231.5 604.9,234.3 604.9,237.1 605.0,239.9 605.0,242.7 605.0,245.5 604.1,248.9 602.4,252.6 600.6,256.4 598.9,260.2 597.1,264.0 595.4,267.8 594.7,271.1 594.2,274.2 593.7,277.4 593.8,280.2 593.9,283.0 594.1,285.7 594.2,288.5 594.3,291.3 594.5,294.1 594.6,296.9 594.7,299.7 594.8,302.4 595.0,305.2 595.1,308.0 595.2,310.8 595.4,313.6 595.5,316.4 595.6,319.2 595.8,321.9 595.9,324.7 596.0,327.5 596.2,330.3 596.3,333.1 596.4,335.9 596.5,338.6 596.7,341.4 596.8,344.2 596.9,347.0 597.1,349.8 597.2,352.6 597.3,355.4 597.5,358.1 597.6,360.9 597.7,363.7 597.9,366.5 598.0,369.3 598.1,372.1 598.2,374.8 598.4,377.6 598.5,380.4 598.6,383.2 598.8,386.0 598.9,388.8 599.0,391.6 599.2,394.3 599.3,397.1 599.4,399.9 599.5,402.6 599.6,405.4" fill="none" stroke="#2e0a08" stroke-width="0.8"/>
<polyline points="601.5,177.4 601.5,180.2 601.5,183.0 601.5,185.8 601.5,188.6 601.5,191.4 601.7,194.2 602.4,196.8 602.4,199.6 602.5,202.4 602.5,205.2 602.5,208.1 602.5,210.9 602.6,213.7 602.6,216.5 602.6,219.3 602.6,222.1 602.7,224.9 602.7,227.7 602.7,230.5 602.8,233.3 602.8,236.1 602.8,238.9 602.8,241.7 602.9,244.5 601.5,247.7 599.0,251.1 596.5,254.5 594.0,258.0 591.5,261.4 589.0,264.8 588.0,267.9 587.2,271.0 586.4,274.0 586.5,276.8 586.7,279.6 586.8,282.4 587.0,285.2 587.1,288.0 587.3,290.8 587.4,293.6 587.6,296.3 587.7,299.1 587.9,301.9 588.0,304.7 588.1,307.5 588.3,310.3 588.4,313.1 588.6,315.9 588.7,318.7 588.9,321.5 589.0,324.3 589.2,327.1 589.3,329.9 589.5,332.6 589.6,335.4 589.8,338.2 589.9,341.0 590.1,343.8 590.2,346.6 590.3,349.4 590.5,352.2 590.6,355.0 590.8,357.8 590.9,360.6 591.1,363.4 591.2,366.1 591.4,368.9 591.5,371.7 591.7,374.5 591.8,377.3 592.0,380.1 592.1,382.9 592.3,385.7 592.4,388.5 592.5,391.3 592.7,394.1 592.8,396.8 593.0,399.6 593.1,402.4" fill="none" stroke="#2e0a08" stroke-width="0.8"/>
<polyline points="599.3,176.1 599.3,178.9 599.3,181.7 599.3,184.5 599.3,187.3 599.3,190.1 599.6,192.9 600.4,195.7 600.5,198.5 600.5,201.3 600.5,204.1 600.5,206.9 600.6,209.7 600.6,212.5 600.6,215.3 600.6,218.1 600.7,220.9 600.7,223.7 600.7,226.5 600.8,229.3 600.8,232.1 600.8,234.9 600.8,237.7 600.9,240.5 600.9,243.3 599.2,246.3 596.0,249.3 592.8,252.3 589.6,255.3 586.4,258.4 583.2,261.4 581.8,264.3 580.8,267.2 579.8,270.0 579.9,272.9 580.1,275.7 580.2,278.5 580.4,281.3 580.6,284.1 580.7,286.9 580.9,289.7 581.0,292.5 581.2,295.3 581.4,298.1 581.5,300.9 581.7,303.7 581.8,306.5 582.0,309.3 582.2,312.1 582.3,314.9 582.5,317.7 582.7,320.5 582.8,323.3 583.0,326.1 583.1,328.9 583.3,331.7 583.5,334.5 583.6,337.3 583.8,340.1 583.9,342.9 584.1,345.7 584.3,348.5 584.4,351.3 584.6,354.1 584.7,356.9 584.9,359.7 585.1,362.5 585.2,365.3 585.4,368.1 585.6,370.9 585.7,373.7 585.9,376.5 586.0,379.3 586.2,382.1 586.4,384.9 586.5,387.7 586.7,390.5 586.9,393.3 587.0,396.1 587.2,398.9" fill="none" stroke="#2e0a08" stroke-width="0.8"/>
<polygon points="622.7,175.4 622.5,176.2 621.9,176.9 621.0,177.7 619.7,178.3 618.1,178.8 616.3,179.3 614.3,179.6 612.1,179.8 610.0,179.8 607.8,179.7 605.7,179.4 603.8,179.1 602.1,178.6 600.6,178.0 599.5,177.3 598.7,176.6 598.3,175.8 598.3,175.0 598.7,174.2 599.5,173.5 600.6,172.8 602.1,172.2 603.8,171.7 605.7,171.4 607.8,171.1 610.0,171.0 612.1,171.0 614.3,171.2 616.3,171.5 618.1,172.0 619.7,172.5 621.0,173.1 621.9,173.9 622.5,174.6 622.7,175.4" fill="#8a4038" stroke="#2e0a08" stroke-width="1"/>
<ellipse cx="610.5" cy="175.9" rx="6.7" ry="2.4" fill="#3a0c0a"/>
<line x1="617.2" y1="175.9" x2="622.7" y2="175.4" stroke="#2e0a08" stroke-width="0.7"/>
<line x1="616.3" y1="177.1" x2="621.1" y2="177.6" stroke="#2e0a08" stroke-width="0.7"/>
<line x1="613.9" y1="178.0" x2="616.6" y2="179.2" stroke="#2e0a08" stroke-width="0.7"/>
<line x1="610.5" y1="178.3" x2="610.5" y2="179.8" stroke="#2e0a08" stroke-width="0.7"/>
<line x1="607.1" y1="178.0" x2="604.4" y2="179.2" stroke="#2e0a08" stroke-width="0.7"/>
<line x1="604.7" y1="177.1" x2="599.9" y2="177.6" stroke="#2e0a08" stroke-width="0.7"/>
<line x1="603.8" y1="175.9" x2="598.3" y2="175.4" stroke="#2e0a08" stroke-width="0.7"/>
<line x1="604.7" y1="174.7" x2="599.9" y2="173.2" stroke="#2e0a08" stroke-width="0.7"/>
<line x1="607.1" y1="173.8" x2="604.4" y2="171.6" stroke="#2e0a08" stroke-width="0.7"/>
<line x1="610.5" y1="173.5" x2="610.5" y2="171.0" stroke="#2e0a08" stroke-width="0.7"/>
<line x1="613.9" y1="173.8" x2="616.6" y2="171.6" stroke="#2e0a08" stroke-width="0.7"/>
<line x1="616.3" y1="174.7" x2="621.1" y2="173.2" stroke="#2e0a08" stroke-width="0.7"/>
<polyline points="622.7,185.0 622.5,185.7 622.0,186.4 621.2,187.1 620.1,187.7 618.8,188.2 617.2,188.7 615.4,189.0 613.5,189.3 611.5,189.4 609.5,189.4 607.5,189.3 605.6,189.0 603.8,188.7 602.2,188.2 600.9,187.7 599.8,187.1 599.0,186.4 598.5,185.7 598.3,185.0" fill="none" stroke="#2e0a08" stroke-width="0.8"/>
<polyline points="621.6,200.0 621.4,200.7 621.0,201.3 620.2,201.9 619.2,202.4 618.0,202.9 616.6,203.3 615.0,203.6 613.3,203.8 611.5,203.9 609.7,203.9 607.9,203.8 606.1,203.6 604.6,203.3 603.1,202.9 601.9,202.4 600.9,201.9 600.2,201.3 599.7,200.7 599.6,200.0" fill="none" stroke="#2e0a08" stroke-width="0.8"/>
<polyline points="621.7,215.0 621.6,215.7 621.1,216.3 620.4,216.9 619.4,217.4 618.2,217.9 616.7,218.3 615.1,218.6 613.4,218.8 611.6,218.9 609.8,218.9 608.0,218.8 606.3,218.6 604.7,218.3 603.3,217.9 602.0,217.4 601.0,216.9 600.3,216.3 599.9,215.7 599.7,215.0" fill="none" stroke="#2e0a08" stroke-width="0.8"/>
<polyline points="621.9,230.0 621.7,230.7 621.3,231.3 620.5,231.9 619.5,232.4 618.3,232.9 616.9,233.3 615.3,233.6 613.6,233.8 611.8,233.9 610.0,233.9 608.2,233.8 606.4,233.6 604.8,233.3 603.4,232.9 602.2,232.4 601.2,231.9 600.5,231.3 600.0,230.7 599.9,230.0" fill="none" stroke="#2e0a08" stroke-width="0.8"/>
<polyline points="621.9,238.0 621.8,238.7 621.3,239.3 620.6,239.9 619.6,240.4 618.4,240.9 617.0,241.3 615.4,241.6 613.6,241.8 611.8,241.9 610.0,241.9 608.2,241.8 606.5,241.6 604.9,241.3 603.5,240.9 602.3,240.4 601.3,239.9 600.5,239.3 600.1,238.7 599.9,238.0" fill="none" stroke="#2e0a08" stroke-width="0.8"/>
<polyline points="628.0,248.0 627.8,249.0 627.1,249.9 626.0,250.8 624.5,251.6 622.7,252.4 620.5,253.0 618.1,253.4 615.6,253.8 612.9,253.9 610.1,253.9 607.4,253.8 604.9,253.4 602.5,253.0 600.3,252.4 598.5,251.6 597.0,250.8 595.9,249.9 595.2,249.0 595.0,248.0" fill="none" stroke="#2e0a08" stroke-width="0.8"/>
<polyline points="640.0,256.0 639.6,257.6 638.5,259.2 636.7,260.7 634.2,262.1 631.1,263.3 627.5,264.3 623.5,265.1 619.3,265.6 614.8,265.9 610.2,265.9 605.7,265.6 601.5,265.1 597.5,264.3 593.9,263.3 590.8,262.1 588.3,260.7 586.5,259.2 585.4,257.6 585.0,256.0" fill="none" stroke="#2e0a08" stroke-width="0.8"/>
<polyline points="647.2,262.0 646.7,264.0 645.3,266.0 643.1,267.8 640.0,269.5 636.2,271.0 631.8,272.2 626.8,273.2 621.5,273.9 616.0,274.2 610.4,274.2 604.8,273.9 599.5,273.2 594.6,272.2 590.1,271.0 586.3,269.5 583.3,267.8 581.0,266.0 579.6,264.0 579.2,262.0" fill="none" stroke="#2e0a08" stroke-width="0.8"/>
<polyline points="649.5,266.0 649.0,268.1 647.6,270.2 645.2,272.2 641.9,274.0 637.9,275.5 633.2,276.8 628.0,277.9 622.4,278.6 616.5,278.9 610.6,278.9 604.7,278.6 599.1,277.9 593.8,276.8 589.1,275.5 585.1,274.0 581.9,272.2 579.5,270.2 578.0,268.1 577.5,266.0" fill="none" stroke="#2e0a08" stroke-width="0.8"/>
<polyline points="650.7,270.0 650.2,272.2 648.7,274.3 646.3,276.3 642.9,278.2 638.8,279.8 634.0,281.1 628.6,282.2 622.8,282.9 616.8,283.3 610.7,283.3 604.7,282.9 598.9,282.2 593.6,281.1 588.7,279.8 584.6,278.2 581.3,276.3 578.8,274.3 577.3,272.2 576.8,270.0" fill="none" stroke="#2e0a08" stroke-width="0.8"/>
<polyline points="650.7,274.0 650.2,276.2 648.7,278.3 646.3,280.3 642.9,282.1 638.8,283.8 634.0,285.1 628.7,286.1 622.9,286.9 616.9,287.2 610.8,287.2 604.8,286.9 599.1,286.1 593.7,285.1 588.9,283.8 584.8,282.1 581.5,280.3 579.1,278.3 577.6,276.2 577.1,274.0" fill="none" stroke="#2e0a08" stroke-width="0.8"/>
<polyline points="651.0,385.0 650.5,387.0 649.2,388.9 646.9,390.8 643.9,392.4 640.1,393.9 635.7,395.1 630.9,396.1 625.6,396.7 620.1,397.1 614.6,397.1 609.1,396.7 603.8,396.1 598.9,395.1 594.6,393.9 590.8,392.4 587.8,390.8 585.5,388.9 584.2,387.0 583.7,385.0" fill="none" stroke="#2e0a08" stroke-width="0.8"/>
<polyline points="650.9,392.0 650.4,394.0 649.0,395.9 646.8,397.7 643.8,399.4 640.1,400.8 635.7,402.1 630.9,403.0 625.7,403.6 620.3,404.0 614.7,404.0 609.3,403.6 604.1,403.0 599.3,402.1 594.9,400.8 591.2,399.4 588.2,397.7 586.0,395.9 584.6,394.0 584.1,392.0" fill="none" stroke="#2e0a08" stroke-width="0.8"/>
<linearGradient id="bg2" x1="0" y1="0" x2="1" y2="0"><stop offset="0" stop-color="#4e1410"/><stop offset="0.35" stop-color="#72221b"/><stop offset="0.55" stop-color="#86352d"/><stop offset="0.8" stop-color="#72221b"/><stop offset="1" stop-color="#4a1210"/></linearGradient>
<polygon points="742.4,90.6 742.4,93.6 742.4,96.5 742.4,99.5 742.3,102.5 742.3,105.4 742.2,108.4 742.2,111.4 742.1,114.3 742.0,117.3 742.0,120.3 741.9,123.2 741.8,126.2 741.8,129.2 741.7,132.1 741.6,135.1 741.6,138.1 741.5,141.0 740.8,144.0 740.2,147.0 739.5,149.9 738.8,152.9 738.2,155.9 737.5,158.8 736.8,161.8 736.2,164.8 735.5,167.7 734.9,170.7 734.3,173.7 733.7,176.6 733.1,179.6 732.5,182.6 731.9,185.5 731.3,188.5 730.7,191.5 730.1,194.4 729.5,197.4 728.9,200.4 728.4,203.3 727.9,206.3 727.5,209.3 727.0,212.3 726.5,215.2 726.0,218.2 726.0,221.2 726.0,224.1 725.9,227.1 725.9,230.1 725.9,233.0 725.9,236.0 725.8,239.0 725.8,241.9 725.8,244.9 725.8,247.9 725.8,250.8 725.7,253.8 725.7,256.8 725.7,259.7 725.7,262.7 725.6,265.7 725.6,268.6 725.6,271.6 725.6,274.6 725.6,277.5 725.5,280.5 725.5,283.5 725.5,286.4 725.5,289.4 725.4,292.4 725.4,295.3 725.4,298.3 725.4,301.3 725.4,304.2 725.3,307.2 725.3,310.2 725.3,313.1 725.3,316.1 725.2,319.1 725.2,322.0 725.2,325.0 725.2,325.0 725.5,326.4 726.2,327.7 727.5,329.0 729.2,330.2 731.4,331.3 734.0,332.3 737.0,333.2 740.2,333.9 743.7,334.4 747.3,334.8 751.1,335.0 754.9,335.0 758.7,334.8 762.3,334.4 765.8,333.9 769.0,333.2 772.0,332.3 774.6,331.3 776.8,330.2 778.5,329.0 779.8,327.7 780.5,326.4 780.8,325.0 780.8,325.0 780.8,322.0 780.8,319.1 780.7,316.1 780.7,313.1 780.7,310.2 780.7,307.2 780.6,304.2 780.6,301.3 780.6,298.3 780.6,295.3 780.6,292.4 780.5,289.4 780.5,286.4 780.5,283.5 780.5,280.5 780.4,277.5 780.4,274.6 780.4,271.6 780.4,268.6 780.4,265.7 780.3,262.7 780.3,259.7 780.3,256.8 780.3,253.8 780.2,250.8 780.2,247.9 780.2,244.9 780.2,241.9 780.2,239.0 780.1,236.0 780.1,233.0 780.1,230.1 780.1,227.1 780.0,224.1 780.0,221.2 780.0,218.2 779.5,215.2 779.0,212.3 778.5,209.3 778.1,206.3 777.6,203.3 777.1,200.4 776.5,197.4 775.9,194.4 775.3,191.5 774.7,188.5 774.1,185.5 773.5,182.6 772.9,179.6 772.3,176.6 771.7,173.7 771.1,170.7 770.6,167.7 770.0,164.8 769.4,161.8 768.9,158.8 768.3,155.9 767.8,152.9 767.2,149.9 766.6,147.0 766.1,144.0 765.5,141.0 765.5,138.1 765.4,135.1 765.4,132.1 765.4,129.2 765.3,126.2 765.3,123.2 765.2,120.3 765.2,117.3 765.2,114.3 765.1,111.4 765.1,108.4 765.1,105.4 765.0,102.5 765.0,99.5 765.0,96.5 765.0,93.6 765.0,90.6 765.0,90.6 764.9,90.0 764.6,89.5 764.1,89.0 763.4,88.5 762.5,88.0 761.4,87.6 760.2,87.3 758.9,87.0 757.5,86.8 756.0,86.6 754.5,86.5 752.9,86.5 751.4,86.6 749.9,86.8 748.5,87.0 747.2,87.3 746.0,87.6 744.9,88.0 744.0,88.5 743.3,89.0 742.8,89.5 742.5,90.0 742.4,90.6" fill="url(#bg2)" stroke="#2e0a08" stroke-width="1.2"/>
<polyline points="764.9,91.1 764.9,94.0 764.9,97.0 764.9,100.0 765.0,102.9 765.0,105.9 765.0,108.9 765.1,111.8 765.1,114.8 765.1,117.8 765.2,120.7 765.2,123.7 765.2,126.7 765.3,129.6 765.3,132.6 765.4,135.6 765.4,138.6 765.4,141.5 766.0,144.5 766.5,147.5 767.1,150.5 767.7,153.5 768.2,156.5 768.8,159.5 769.3,162.5 769.9,165.5 770.5,168.5 771.0,171.4 771.6,174.4 772.2,177.4 772.8,180.4 773.4,183.4 774.0,186.4 774.6,189.4 775.2,192.4 775.7,195.4 776.3,198.4 776.9,201.4 777.4,204.3 777.9,207.3 778.4,210.3 778.9,213.3 779.4,216.3 779.8,219.3 779.9,222.2 779.9,225.2 779.9,228.2 779.9,231.1 779.9,234.1 780.0,237.1 780.0,240.0 780.0,243.0 780.0,246.0 780.1,249.0 780.1,251.9 780.1,254.9 780.1,257.9 780.1,260.8 780.2,263.8 780.2,266.8 780.2,269.7 780.2,272.7 780.3,275.7 780.3,278.6 780.3,281.6 780.3,284.6 780.3,287.5 780.4,290.5 780.4,293.5 780.4,296.4 780.4,299.4 780.4,302.4 780.5,305.3 780.5,308.3 780.5,311.3 780.5,314.2 780.6,317.2 780.6,320.2 780.6,323.2 780.6,326.1" fill="none" stroke="#2e0a08" stroke-width="0.8"/>
<polyline points="764.4,91.9 764.4,94.9 764.4,97.9 764.4,100.8 764.4,103.8 764.4,106.8 764.5,109.8 764.5,112.7 764.5,115.7 764.6,118.7 764.6,121.7 764.6,124.6 764.7,127.6 764.7,130.6 764.7,133.5 764.8,136.5 764.8,139.5 764.8,142.5 765.4,145.5 765.9,148.5 766.4,151.6 766.9,154.6 767.5,157.7 768.0,160.7 768.5,163.7 769.1,166.8 769.6,169.8 770.1,172.9 770.7,175.9 771.2,178.9 771.8,182.0 772.4,185.0 772.9,188.1 773.5,191.1 774.0,194.1 774.6,197.2 775.2,200.2 775.7,203.2 776.2,206.3 776.6,209.3 777.1,212.3 777.6,215.3 778.0,218.4 778.5,221.4 778.5,224.4 778.5,227.3 778.5,230.3 778.6,233.3 778.6,236.2 778.6,239.2 778.6,242.2 778.7,245.2 778.7,248.1 778.7,251.1 778.7,254.1 778.7,257.0 778.8,260.0 778.8,263.0 778.8,265.9 778.8,268.9 778.8,271.9 778.9,274.9 778.9,277.8 778.9,280.8 778.9,283.8 778.9,286.7 779.0,289.7 779.0,292.7 779.0,295.6 779.0,298.6 779.1,301.6 779.1,304.5 779.1,307.5 779.1,310.5 779.1,313.5 779.2,316.4 779.2,319.4 779.2,322.4 779.2,325.3 779.2,328.3" fill="none" stroke="#2e0a08" stroke-width="0.8"/>
<polyline points="763.3,92.8 763.3,95.7 763.3,98.7 763.3,101.7 763.3,104.6 763.3,107.6 763.3,110.6 763.4,113.6 763.4,116.5 763.4,119.5 763.5,122.5 763.5,125.5 763.5,128.5 763.5,131.4 763.6,134.4 763.6,137.4 763.6,140.4 763.7,143.3 764.1,146.4 764.6,149.5 765.1,152.6 765.5,155.7 766.0,158.8 766.5,161.8 766.9,164.9 767.4,168.0 767.9,171.1 768.4,174.2 768.9,177.3 769.4,180.3 769.9,183.4 770.4,186.5 770.9,189.6 771.4,192.7 771.9,195.8 772.4,198.8 772.9,201.9 773.4,205.0 773.8,208.1 774.2,211.1 774.6,214.2 775.1,217.2 775.5,220.3 775.9,223.4 775.9,226.3 775.9,229.3 775.9,232.3 775.9,235.2 776.0,238.2 776.0,241.2 776.0,244.2 776.0,247.1 776.0,250.1 776.1,253.1 776.1,256.0 776.1,259.0 776.1,262.0 776.1,265.0 776.1,267.9 776.2,270.9 776.2,273.9 776.2,276.8 776.2,279.8 776.2,282.8 776.3,285.8 776.3,288.7 776.3,291.7 776.3,294.7 776.3,297.6 776.4,300.6 776.4,303.6 776.4,306.6 776.4,309.5 776.4,312.5 776.4,315.5 776.5,318.4 776.5,321.4 776.5,324.4 776.5,327.4 776.5,330.3" fill="none" stroke="#2e0a08" stroke-width="0.8"/>
<polyline points="761.7,93.5 761.7,96.4 761.7,99.4 761.7,102.4 761.7,105.4 761.7,108.3 761.8,111.3 761.8,114.3 761.8,117.3 761.8,120.3 761.8,123.2 761.9,126.2 761.9,129.2 761.9,132.2 761.9,135.2 761.9,138.1 762.0,141.1 762.0,144.1 762.4,147.2 762.8,150.3 763.1,153.5 763.5,156.6 763.9,159.7 764.3,162.8 764.7,166.0 765.1,169.1 765.4,172.2 765.8,175.3 766.2,178.4 766.7,181.6 767.1,184.7 767.5,187.8 767.9,190.9 768.3,194.0 768.8,197.2 769.2,200.3 769.6,203.4 770.0,206.5 770.4,209.6 770.7,212.7 771.1,215.8 771.4,218.9 771.8,222.0 772.1,225.1 772.1,228.0 772.1,231.0 772.1,234.0 772.2,236.9 772.2,239.9 772.2,242.9 772.2,245.9 772.2,248.8 772.2,251.8 772.2,254.8 772.3,257.8 772.3,260.7 772.3,263.7 772.3,266.7 772.3,269.6 772.3,272.6 772.4,275.6 772.4,278.6 772.4,281.5 772.4,284.5 772.4,287.5 772.4,290.5 772.5,293.4 772.5,296.4 772.5,299.4 772.5,302.3 772.5,305.3 772.5,308.3 772.5,311.3 772.6,314.2 772.6,317.2 772.6,320.2 772.6,323.2 772.6,326.1 772.6,329.1 772.7,332.1" fill="none" stroke="#2e0a08" stroke-width="0.8"/>
<polyline points="759.7,94.0 759.7,97.0 759.7,100.0 759.7,102.9 759.7,105.9 759.7,108.9 759.7,111.9 759.8,114.9 759.8,117.9 759.8,120.8 759.8,123.8 759.8,126.8 759.8,129.8 759.8,132.8 759.8,135.8 759.9,138.7 759.9,141.7 759.9,144.7 760.2,147.9 760.4,151.0 760.7,154.2 761.0,157.3 761.3,160.5 761.5,163.6 761.8,166.8 762.1,169.9 762.4,173.1 762.7,176.2 763.0,179.4 763.3,182.5 763.6,185.7 763.9,188.8 764.2,192.0 764.5,195.1 764.9,198.3 765.2,201.4 765.5,204.6 765.8,207.7 766.1,210.8 766.3,214.0 766.6,217.1 766.9,220.2 767.1,223.3 767.4,226.4 767.4,229.4 767.4,232.4 767.4,235.3 767.4,238.3 767.4,241.3 767.4,244.3 767.4,247.2 767.5,250.2 767.5,253.2 767.5,256.2 767.5,259.1 767.5,262.1 767.5,265.1 767.5,268.0 767.5,271.0 767.6,274.0 767.6,277.0 767.6,279.9 767.6,282.9 767.6,285.9 767.6,288.9 767.6,291.8 767.6,294.8 767.6,297.8 767.7,300.8 767.7,303.7 767.7,306.7 767.7,309.7 767.7,312.7 767.7,315.6 767.7,318.6 767.7,321.6 767.8,324.6 767.8,327.5 767.8,330.5 767.8,333.5" fill="none" stroke="#2e0a08" stroke-width="0.8"/>
<polyline points="757.4,94.4 757.4,97.4 757.4,100.4 757.4,103.3 757.4,106.3 757.4,109.3 757.4,112.3 757.4,115.3 757.4,118.3 757.4,121.2 757.4,124.2 757.4,127.2 757.5,130.2 757.5,133.2 757.5,136.2 757.5,139.1 757.5,142.1 757.5,145.1 757.6,148.3 757.8,151.5 757.9,154.6 758.1,157.8 758.2,161.0 758.4,164.2 758.5,167.4 758.7,170.5 758.8,173.7 759.0,176.9 759.2,180.0 759.4,183.2 759.6,186.4 759.8,189.6 760.0,192.7 760.2,195.9 760.4,199.1 760.6,202.2 760.8,205.4 760.9,208.6 761.1,211.7 761.3,214.8 761.4,218.0 761.6,221.1 761.8,224.2 761.9,227.4 761.9,230.3 761.9,233.3 761.9,236.3 761.9,239.3 762.0,242.2 762.0,245.2 762.0,248.2 762.0,251.2 762.0,254.1 762.0,257.1 762.0,260.1 762.0,263.1 762.0,266.0 762.0,269.0 762.0,272.0 762.0,275.0 762.0,277.9 762.0,280.9 762.1,283.9 762.1,286.9 762.1,289.8 762.1,292.8 762.1,295.8 762.1,298.8 762.1,301.7 762.1,304.7 762.1,307.7 762.1,310.6 762.1,313.6 762.1,316.6 762.1,319.6 762.2,322.5 762.2,325.5 762.2,328.5 762.2,331.5 762.2,334.4" fill="none" stroke="#2e0a08" stroke-width="0.8"/>
<polyline points="755.0,94.6 755.0,97.6 755.0,100.6 755.0,103.5 755.0,106.5 754.9,109.5 754.9,112.5 754.9,115.5 754.9,118.5 754.9,121.5 754.9,124.4 754.9,127.4 754.9,130.4 754.9,133.4 754.9,136.4 754.9,139.4 754.9,142.3 754.8,145.3 754.9,148.5 754.9,151.7 754.9,154.9 754.9,158.1 754.9,161.3 754.9,164.5 755.0,167.6 755.0,170.8 755.0,174.0 755.0,177.2 755.1,180.4 755.2,183.6 755.2,186.7 755.3,189.9 755.4,193.1 755.4,196.3 755.5,199.5 755.6,202.6 755.6,205.8 755.7,209.0 755.7,212.1 755.8,215.3 755.9,218.4 755.9,221.6 756.0,224.7 756.0,227.8 756.0,230.8 756.0,233.8 756.0,236.8 756.0,239.7 756.0,242.7 756.0,245.7 756.0,248.7 756.0,251.6 756.0,254.6 756.0,257.6 756.1,260.6 756.1,263.5 756.1,266.5 756.1,269.5 756.1,272.5 756.1,275.4 756.1,278.4 756.1,281.4 756.1,284.4 756.1,287.3 756.1,290.3 756.1,293.3 756.1,296.3 756.1,299.2 756.1,302.2 756.1,305.2 756.1,308.2 756.1,311.1 756.1,314.1 756.1,317.1 756.1,320.1 756.1,323.0 756.1,326.0 756.1,329.0 756.1,332.0 756.1,334.9" fill="none" stroke="#2e0a08" stroke-width="0.8"/>
<polyline points="752.4,94.6 752.4,97.6 752.4,100.6 752.4,103.5 752.4,106.5 752.4,109.5 752.4,112.5 752.4,115.5 752.3,118.5 752.3,121.5 752.3,124.4 752.3,127.4 752.3,130.4 752.2,133.4 752.2,136.4 752.2,139.4 752.2,142.3 752.2,145.3 752.0,148.5 751.9,151.7 751.8,154.9 751.7,158.1 751.6,161.3 751.4,164.5 751.3,167.6 751.2,170.8 751.1,174.0 751.0,177.2 750.9,180.4 750.8,183.6 750.8,186.7 750.7,189.9 750.6,193.1 750.6,196.3 750.5,199.5 750.4,202.6 750.4,205.8 750.3,209.0 750.3,212.1 750.2,215.3 750.1,218.4 750.1,221.6 750.0,224.7 750.0,227.8 750.0,230.8 750.0,233.8 750.0,236.8 750.0,239.7 750.0,242.7 750.0,245.7 750.0,248.7 750.0,251.6 750.0,254.6 750.0,257.6 749.9,260.6 749.9,263.5 749.9,266.5 749.9,269.5 749.9,272.5 749.9,275.4 749.9,278.4 749.9,281.4 749.9,284.4 749.9,287.3 749.9,290.3 749.9,293.3 749.9,296.3 749.9,299.2 749.9,302.2 749.9,305.2 749.9,308.2 749.9,311.1 749.9,314.1 749.9,317.1 749.9,320.1 749.9,323.0 749.9,326.0 749.9,329.0 749.9,332.0 749.9,334.9" fill="none" stroke="#2e0a08" stroke-width="0.8"/>
<polyline points="750.0,94.4 750.0,97.4 750.0,100.4 750.0,103.3 749.9,106.3 749.9,109.3 749.9,112.3 749.8,115.3 749.8,118.3 749.8,121.2 749.8,124.2 749.7,127.2 749.7,130.2 749.7,133.2 749.6,136.2 749.6,139.1 749.6,142.1 749.5,145.1 749.3,148.3 749.0,151.5 748.8,154.6 748.5,157.8 748.3,161.0 748.0,164.2 747.8,167.4 747.5,170.5 747.2,173.7 747.0,176.9 746.8,180.0 746.6,183.2 746.4,186.4 746.2,189.6 746.0,192.7 745.8,195.9 745.6,199.1 745.4,202.2 745.2,205.4 745.1,208.6 744.9,211.7 744.7,214.8 744.6,218.0 744.4,221.1 744.2,224.2 744.1,227.4 744.1,230.3 744.1,233.3 744.1,236.3 744.1,239.3 744.0,242.2 744.0,245.2 744.0,248.2 744.0,251.2 744.0,254.1 744.0,257.1 744.0,260.1 744.0,263.1 744.0,266.0 744.0,269.0 744.0,272.0 744.0,275.0 744.0,277.9 744.0,280.9 743.9,283.9 743.9,286.9 743.9,289.8 743.9,292.8 743.9,295.8 743.9,298.8 743.9,301.7 743.9,304.7 743.9,307.7 743.9,310.6 743.9,313.6 743.9,316.6 743.9,319.6 743.8,322.5 743.8,325.5 743.8,328.5 743.8,331.5 743.8,334.4" fill="none" stroke="#2e0a08" stroke-width="0.8"/>
<polyline points="747.7,94.0 747.7,97.0 747.7,100.0 747.7,102.9 747.7,105.9 747.6,108.9 747.6,111.9 747.5,114.9 747.5,117.9 747.4,120.8 747.4,123.8 747.4,126.8 747.3,129.8 747.3,132.8 747.2,135.8 747.2,138.7 747.2,141.7 747.1,144.7 746.7,147.9 746.4,151.0 746.0,154.2 745.6,157.3 745.2,160.5 744.8,163.6 744.5,166.8 744.1,169.9 743.7,173.1 743.3,176.2 743.0,179.4 742.7,182.5 742.4,185.7 742.1,188.8 741.8,192.0 741.5,195.1 741.1,198.3 740.8,201.4 740.5,204.6 740.2,207.7 739.9,210.8 739.7,214.0 739.4,217.1 739.1,220.2 738.9,223.3 738.6,226.4 738.6,229.4 738.6,232.4 738.6,235.3 738.6,238.3 738.6,241.3 738.6,244.3 738.6,247.2 738.5,250.2 738.5,253.2 738.5,256.2 738.5,259.1 738.5,262.1 738.5,265.1 738.5,268.0 738.5,271.0 738.4,274.0 738.4,277.0 738.4,279.9 738.4,282.9 738.4,285.9 738.4,288.9 738.4,291.8 738.4,294.8 738.4,297.8 738.3,300.8 738.3,303.7 738.3,306.7 738.3,309.7 738.3,312.7 738.3,315.6 738.3,318.6 738.3,321.6 738.2,324.6 738.2,327.5 738.2,330.5 738.2,333.5" fill="none" stroke="#2e0a08" stroke-width="0.8"/>
<polyline points="745.7,93.5 745.7,96.4 745.7,99.4 745.7,102.4 745.7,105.4 745.6,108.3 745.6,111.3 745.5,114.3 745.5,117.3 745.4,120.3 745.4,123.2 745.3,126.2 745.3,129.2 745.2,132.2 745.2,135.2 745.1,138.1 745.1,141.1 745.0,144.1 744.5,147.2 744.0,150.3 743.6,153.5 743.1,156.6 742.6,159.7 742.1,162.8 741.6,166.0 741.1,169.1 740.6,172.2 740.2,175.3 739.8,178.4 739.3,181.6 738.9,184.7 738.5,187.8 738.1,190.9 737.7,194.0 737.2,197.2 736.8,200.3 736.4,203.4 736.0,206.5 735.6,209.6 735.3,212.7 734.9,215.8 734.6,218.9 734.2,222.0 733.9,225.1 733.9,228.0 733.9,231.0 733.9,234.0 733.8,236.9 733.8,239.9 733.8,242.9 733.8,245.9 733.8,248.8 733.8,251.8 733.8,254.8 733.7,257.8 733.7,260.7 733.7,263.7 733.7,266.7 733.7,269.6 733.7,272.6 733.6,275.6 733.6,278.6 733.6,281.5 733.6,284.5 733.6,287.5 733.6,290.5 733.5,293.4 733.5,296.4 733.5,299.4 733.5,302.3 733.5,305.3 733.5,308.3 733.5,311.3 733.4,314.2 733.4,317.2 733.4,320.2 733.4,323.2 733.4,326.1 733.4,329.1 733.3,332.1" fill="none" stroke="#2e0a08" stroke-width="0.8"/>
<polyline points="744.1,92.8 744.1,95.7 744.1,98.7 744.1,101.7 744.1,104.6 744.0,107.6 744.0,110.6 743.9,113.6 743.9,116.5 743.8,119.5 743.7,122.5 743.7,125.5 743.6,128.5 743.6,131.4 743.5,134.4 743.5,137.4 743.4,140.4 743.3,143.3 742.8,146.4 742.2,149.5 741.6,152.6 741.0,155.7 740.5,158.8 739.9,161.8 739.3,164.9 738.8,168.0 738.2,171.1 737.6,174.2 737.1,177.3 736.6,180.3 736.1,183.4 735.6,186.5 735.1,189.6 734.6,192.7 734.1,195.8 733.6,198.8 733.1,201.9 732.6,205.0 732.2,208.1 731.8,211.1 731.4,214.2 730.9,217.2 730.5,220.3 730.1,223.4 730.1,226.3 730.1,229.3 730.1,232.3 730.1,235.2 730.0,238.2 730.0,241.2 730.0,244.2 730.0,247.1 730.0,250.1 729.9,253.1 729.9,256.0 729.9,259.0 729.9,262.0 729.9,265.0 729.9,267.9 729.8,270.9 729.8,273.9 729.8,276.8 729.8,279.8 729.8,282.8 729.7,285.8 729.7,288.7 729.7,291.7 729.7,294.7 729.7,297.6 729.6,300.6 729.6,303.6 729.6,306.6 729.6,309.5 729.6,312.5 729.6,315.5 729.5,318.4 729.5,321.4 729.5,324.4 729.5,327.4 729.5,330.3" fill="none" stroke="#2e0a08" stroke-width="0.8"/>
<polyline points="743.0,91.9 743.0,94.9 743.0,97.9 743.0,100.8 743.0,103.8 742.9,106.8 742.9,109.8 742.8,112.7 742.7,115.7 742.7,118.7 742.6,121.7 742.5,124.6 742.5,127.6 742.4,130.6 742.4,133.5 742.3,136.5 742.2,139.5 742.2,142.5 741.5,145.5 740.9,148.5 740.3,151.6 739.6,154.6 739.0,157.7 738.4,160.7 737.8,163.7 737.1,166.8 736.5,169.8 735.9,172.9 735.3,175.9 734.8,178.9 734.2,182.0 733.6,185.0 733.1,188.1 732.5,191.1 732.0,194.1 731.4,197.2 730.8,200.2 730.3,203.2 729.8,206.3 729.4,209.3 728.9,212.3 728.4,215.3 728.0,218.4 727.5,221.4 727.5,224.4 727.5,227.3 727.5,230.3 727.4,233.3 727.4,236.2 727.4,239.2 727.4,242.2 727.3,245.2 727.3,248.1 727.3,251.1 727.3,254.1 727.3,257.0 727.2,260.0 727.2,263.0 727.2,265.9 727.2,268.9 727.2,271.9 727.1,274.9 727.1,277.8 727.1,280.8 727.1,283.8 727.1,286.7 727.0,289.7 727.0,292.7 727.0,295.6 727.0,298.6 726.9,301.6 726.9,304.5 726.9,307.5 726.9,310.5 726.9,313.5 726.8,316.4 726.8,319.4 726.8,322.4 726.8,325.3 726.8,328.3" fill="none" stroke="#2e0a08" stroke-width="0.8"/>
<polyline points="742.5,91.1 742.5,94.0 742.5,97.0 742.5,100.0 742.4,102.9 742.4,105.9 742.3,108.9 742.2,111.8 742.2,114.8 742.1,117.8 742.0,120.7 742.0,123.7 741.9,126.7 741.8,129.6 741.8,132.6 741.7,135.6 741.6,138.6 741.6,141.5 740.9,144.5 740.2,147.5 739.6,150.5 738.9,153.5 738.3,156.5 737.6,159.5 736.9,162.5 736.3,165.5 735.6,168.5 735.0,171.4 734.4,174.4 733.8,177.4 733.2,180.4 732.6,183.4 732.0,186.4 731.4,189.4 730.8,192.4 730.3,195.4 729.7,198.4 729.1,201.4 728.6,204.3 728.1,207.3 727.6,210.3 727.1,213.3 726.6,216.3 726.2,219.3 726.1,222.2 726.1,225.2 726.1,228.2 726.1,231.1 726.1,234.1 726.0,237.1 726.0,240.0 726.0,243.0 726.0,246.0 725.9,249.0 725.9,251.9 725.9,254.9 725.9,257.9 725.9,260.8 725.8,263.8 725.8,266.8 725.8,269.7 725.8,272.7 725.7,275.7 725.7,278.6 725.7,281.6 725.7,284.6 725.7,287.5 725.6,290.5 725.6,293.5 725.6,296.4 725.6,299.4 725.6,302.4 725.5,305.3 725.5,308.3 725.5,311.3 725.5,314.2 725.4,317.2 725.4,320.2 725.4,323.2 725.4,326.1" fill="none" stroke="#2e0a08" stroke-width="0.8"/>
<polygon points="765.0,90.6 764.8,91.3 764.3,92.0 763.4,92.7 762.2,93.3 760.7,93.8 759.1,94.2 757.2,94.5 755.2,94.6 753.2,94.7 751.2,94.6 749.3,94.3 747.5,94.0 745.9,93.5 744.6,93.0 743.5,92.4 742.8,91.7 742.4,91.0 742.4,90.2 742.8,89.5 743.5,88.8 744.6,88.2 745.9,87.7 747.5,87.2 749.3,86.9 751.2,86.6 753.2,86.5 755.2,86.6 757.2,86.7 759.1,87.0 760.7,87.4 762.2,87.9 763.4,88.5 764.3,89.2 764.8,89.9 765.0,90.6" fill="#8a4038" stroke="#2e0a08" stroke-width="1"/>
<ellipse cx="753.7" cy="91.1" rx="6.2" ry="2.2" fill="#3a0c0a"/>
<line x1="759.9" y1="91.1" x2="765.0" y2="90.6" stroke="#2e0a08" stroke-width="0.7"/>
<line x1="758.9" y1="92.3" x2="763.2" y2="92.8" stroke="#2e0a08" stroke-width="0.7"/>
<line x1="756.3" y1="93.1" x2="758.4" y2="94.3" stroke="#2e0a08" stroke-width="0.7"/>
<line x1="752.8" y1="93.3" x2="752.1" y2="94.6" stroke="#2e0a08" stroke-width="0.7"/>
<line x1="749.6" y1="92.8" x2="746.3" y2="93.7" stroke="#2e0a08" stroke-width="0.7"/>
<line x1="747.7" y1="91.7" x2="742.9" y2="91.7" stroke="#2e0a08" stroke-width="0.7"/>
<line x1="747.7" y1="90.5" x2="742.9" y2="89.5" stroke="#2e0a08" stroke-width="0.7"/>
<line x1="749.6" y1="89.4" x2="746.3" y2="87.5" stroke="#2e0a08" stroke-width="0.7"/>
<line x1="752.8" y1="88.9" x2="752.1" y2="86.6" stroke="#2e0a08" stroke-width="0.7"/>
<line x1="756.3" y1="89.1" x2="758.4" y2="86.9" stroke="#2e0a08" stroke-width="0.7"/>
<line x1="758.9" y1="89.9" x2="763.2" y2="88.4" stroke="#2e0a08" stroke-width="0.7"/>
<polyline points="765.0,96.0 764.8,96.7 764.4,97.3 763.6,97.9 762.6,98.5 761.4,99.0 759.9,99.4 758.2,99.7 756.5,99.9 754.6,100.1 752.8,100.1 750.9,99.9 749.2,99.7 747.5,99.4 746.0,99.0 744.8,98.5 743.8,97.9 743.0,97.3 742.6,96.7 742.4,96.0" fill="none" stroke="#2e0a08" stroke-width="0.8"/>
<polyline points="765.0,103.0 764.9,103.7 764.4,104.3 763.7,104.9 762.6,105.5 761.4,106.0 759.9,106.4 758.2,106.7 756.5,107.0 754.6,107.1 752.7,107.1 750.9,107.0 749.1,106.7 747.5,106.4 746.0,106.0 744.7,105.5 743.7,104.9 742.9,104.3 742.5,103.7 742.3,103.0" fill="none" stroke="#2e0a08" stroke-width="0.8"/>
<polyline points="765.1,112.0 765.0,112.7 764.5,113.3 763.8,114.0 762.7,114.5 761.4,115.0 759.9,115.5 758.3,115.8 756.5,116.0 754.6,116.1 752.7,116.1 750.8,116.0 749.0,115.8 747.3,115.5 745.8,115.0 744.6,114.5 743.5,114.0 742.8,113.3 742.3,112.7 742.1,112.0" fill="none" stroke="#2e0a08" stroke-width="0.8"/>
<polyline points="765.3,122.0 765.1,122.7 764.6,123.4 763.9,124.0 762.8,124.6 761.5,125.1 760.0,125.5 758.3,125.8 756.5,126.1 754.6,126.2 752.6,126.2 750.7,126.1 748.9,125.8 747.2,125.5 745.7,125.1 744.4,124.6 743.3,124.0 742.5,123.4 742.1,122.7 741.9,122.0" fill="none" stroke="#2e0a08" stroke-width="0.8"/>
<polyline points="765.4,132.0 765.2,132.7 764.7,133.4 764.0,134.0 762.9,134.6 761.6,135.1 760.0,135.6 758.3,135.9 756.5,136.1 754.5,136.3 752.6,136.3 750.6,136.1 748.8,135.9 747.1,135.6 745.5,135.1 744.2,134.6 743.1,134.0 742.3,133.4 741.9,132.7 741.7,132.0" fill="none" stroke="#2e0a08" stroke-width="0.8"/>
<polyline points="765.5,141.0 765.3,141.7 764.8,142.4 764.1,143.1 763.0,143.7 761.6,144.2 760.1,144.6 758.3,145.0 756.4,145.2 754.5,145.3 752.5,145.3 750.6,145.2 748.7,145.0 746.9,144.6 745.4,144.2 744.0,143.7 742.9,143.1 742.2,142.4 741.7,141.7 741.5,141.0" fill="none" stroke="#2e0a08" stroke-width="0.8"/>
<polyline points="767.2,150.0 767.0,150.8 766.5,151.6 765.5,152.4 764.3,153.1 762.7,153.7 760.9,154.2 758.9,154.6 756.7,154.8 754.5,155.0 752.2,155.0 749.9,154.8 747.8,154.6 745.8,154.2 744.0,153.7 742.4,153.1 741.2,152.4 740.2,151.6 739.7,150.8 739.5,150.0" fill="none" stroke="#2e0a08" stroke-width="0.8"/>
<polyline points="769.1,160.0 768.9,160.9 768.2,161.9 767.2,162.7 765.7,163.5 764.0,164.2 761.9,164.8 759.6,165.3 757.1,165.6 754.5,165.7 751.9,165.7 749.3,165.6 746.8,165.3 744.5,164.8 742.4,164.2 740.6,163.5 739.2,162.7 738.1,161.9 737.5,160.9 737.2,160.0" fill="none" stroke="#2e0a08" stroke-width="0.8"/>
<polyline points="771.0,170.0 770.8,171.1 770.0,172.1 768.8,173.1 767.2,174.0 765.2,174.8 762.8,175.4 760.2,175.9 757.4,176.3 754.5,176.5 751.5,176.5 748.6,176.3 745.8,175.9 743.2,175.4 740.8,174.8 738.8,174.0 737.2,173.1 736.0,172.1 735.2,171.1 735.0,170.0" fill="none" stroke="#2e0a08" stroke-width="0.8"/>
<polyline points="773.0,180.0 772.7,181.2 771.9,182.3 770.6,183.4 768.8,184.4 766.5,185.3 763.9,186.0 761.0,186.6 757.9,187.0 754.7,187.2 751.3,187.2 748.1,187.0 745.0,186.6 742.1,186.0 739.5,185.3 737.2,184.4 735.4,183.4 734.1,182.3 733.3,181.2 733.0,180.0" fill="none" stroke="#2e0a08" stroke-width="0.8"/>
<polyline points="775.0,190.0 774.7,191.3 773.8,192.6 772.3,193.8 770.4,194.9 767.9,195.8 765.0,196.6 761.8,197.3 758.4,197.7 754.8,197.9 751.2,197.9 747.6,197.7 744.2,197.3 741.0,196.6 738.1,195.8 735.6,194.9 733.7,193.8 732.2,192.6 731.3,191.3 731.0,190.0" fill="none" stroke="#2e0a08" stroke-width="0.8"/>
<polyline points="777.0,200.0 776.7,201.4 775.7,202.8 774.1,204.1 771.9,205.3 769.3,206.4 766.1,207.2 762.6,207.9 758.9,208.4 755.0,208.6 751.0,208.6 747.1,208.4 743.4,207.9 739.9,207.2 736.7,206.4 734.1,205.3 731.9,204.1 730.3,202.8 729.3,201.4 729.0,200.0" fill="none" stroke="#2e0a08" stroke-width="0.8"/>
<polyline points="778.7,210.0 778.3,211.5 777.3,213.0 775.6,214.4 773.3,215.7 770.4,216.8 767.0,217.7 763.3,218.5 759.3,219.0 755.1,219.2 750.9,219.2 746.7,219.0 742.7,218.5 739.0,217.7 735.6,216.8 732.7,215.7 730.4,214.4 728.7,213.0 727.7,211.5 727.3,210.0" fill="none" stroke="#2e0a08" stroke-width="0.8"/>
<polyline points="780.0,220.0 779.6,221.6 778.6,223.2 776.8,224.6 774.3,226.0 771.3,227.2 767.8,228.1 763.9,228.9 759.6,229.4 755.2,229.7 750.8,229.7 746.4,229.4 742.1,228.9 738.2,228.1 734.7,227.2 731.7,226.0 729.2,224.6 727.4,223.2 726.4,221.6 726.0,220.0" fill="none" stroke="#2e0a08" stroke-width="0.8"/>
<polyline points="780.1,230.0 779.7,231.6 778.6,233.2 776.8,234.6 774.4,236.0 771.3,237.2 767.8,238.2 763.9,238.9 759.7,239.5 755.2,239.7 750.8,239.7 746.3,239.5 742.1,238.9 738.2,238.2 734.7,237.2 731.6,236.0 729.2,234.6 727.4,233.2 726.3,231.6 725.9,230.0" fill="none" stroke="#2e0a08" stroke-width="0.8"/>
<polyline points="780.2,240.0 779.8,241.6 778.7,243.2 776.9,244.7 774.4,246.0 771.4,247.2 767.9,248.2 763.9,249.0 759.7,249.5 755.2,249.7 750.8,249.7 746.3,249.5 742.1,249.0 738.1,248.2 734.6,247.2 731.6,246.0 729.1,244.7 727.3,243.2 726.2,241.6 725.8,240.0" fill="none" stroke="#2e0a08" stroke-width="0.8"/>
<polyline points="780.2,250.0 779.9,251.6 778.8,253.2 777.0,254.7 774.5,256.0 771.4,257.2 767.9,258.2 763.9,259.0 759.7,259.5 755.2,259.8 750.8,259.8 746.3,259.5 742.1,259.0 738.1,258.2 734.6,257.2 731.5,256.0 729.0,254.7 727.2,253.2 726.1,251.6 725.8,250.0" fill="none" stroke="#2e0a08" stroke-width="0.8"/>
<polyline points="780.3,260.0 779.9,261.6 778.8,263.2 777.0,264.7 774.6,266.0 771.5,267.2 767.9,268.2 764.0,269.0 759.7,269.5 755.3,269.8 750.7,269.8 746.3,269.5 742.0,269.0 738.1,268.2 734.5,267.2 731.4,266.0 729.0,264.7 727.2,263.2 726.1,261.6 725.7,260.0" fill="none" stroke="#2e0a08" stroke-width="0.8"/>
<polyline points="780.4,270.0 780.0,271.6 778.9,273.2 777.1,274.7 774.6,276.1 771.5,277.3 768.0,278.3 764.0,279.0 759.7,279.6 755.3,279.8 750.7,279.8 746.3,279.6 742.0,279.0 738.0,278.3 734.5,277.3 731.4,276.1 728.9,274.7 727.1,273.2 726.0,271.6 725.6,270.0" fill="none" stroke="#2e0a08" stroke-width="0.8"/>
<polyline points="780.5,280.0 780.1,281.6 779.0,283.2 777.2,284.7 774.7,286.1 771.6,287.3 768.0,288.3 764.0,289.1 759.7,289.6 755.3,289.9 750.7,289.9 746.3,289.6 742.0,289.1 738.0,288.3 734.4,287.3 731.3,286.1 728.8,284.7 727.0,283.2 725.9,281.6 725.5,280.0" fill="none" stroke="#2e0a08" stroke-width="0.8"/>
<polyline points="780.5,290.0 780.2,291.6 779.0,293.2 777.2,294.7 774.7,296.1 771.7,297.3 768.1,298.3 764.1,299.1 759.8,299.6 755.3,299.9 750.7,299.9 746.2,299.6 741.9,299.1 737.9,298.3 734.3,297.3 731.3,296.1 728.8,294.7 727.0,293.2 725.8,291.6 725.5,290.0" fill="none" stroke="#2e0a08" stroke-width="0.8"/>
<polyline points="780.6,300.0 780.2,301.6 779.1,303.2 777.3,304.7 774.8,306.1 771.7,307.3 768.1,308.3 764.1,309.1 759.8,309.6 755.3,309.9 750.7,309.9 746.2,309.6 741.9,309.1 737.9,308.3 734.3,307.3 731.2,306.1 728.7,304.7 726.9,303.2 725.8,301.6 725.4,300.0" fill="none" stroke="#2e0a08" stroke-width="0.8"/>
<polyline points="780.7,310.0 780.3,311.6 779.2,313.2 777.4,314.7 774.8,316.1 771.8,317.3 768.1,318.3 764.1,319.1 759.8,319.7 755.3,319.9 750.7,319.9 746.2,319.7 741.9,319.1 737.9,318.3 734.2,317.3 731.2,316.1 728.6,314.7 726.8,313.2 725.7,311.6 725.3,310.0" fill="none" stroke="#2e0a08" stroke-width="0.8"/>
<polyline points="780.8,320.0 780.4,321.6 779.3,323.2 777.4,324.8 774.9,326.1 771.8,327.4 768.2,328.4 764.2,329.2 759.8,329.7 755.3,330.0 750.7,330.0 746.2,329.7 741.8,329.2 737.8,328.4 734.2,327.4 731.1,326.1 728.6,324.8 726.7,323.2 725.6,321.6 725.2,320.0" fill="none" stroke="#2e0a08" stroke-width="0.8"/>
<linearGradient id="bg3" x1="0" y1="0" x2="1" y2="0"><stop offset="0" stop-color="#4e1410"/><stop offset="0.35" stop-color="#72221b"/><stop offset="0.55" stop-color="#86352d"/><stop offset="0.8" stop-color="#72221b"/><stop offset="1" stop-color="#4a1210"/></linearGradient>
<polygon points="766.0,287.9 766.0,290.7 766.0,293.4 766.0,296.2 766.0,299.0 765.8,301.8 765.4,304.5 765.1,307.3 764.7,310.1 764.4,312.9 764.0,315.6 763.7,318.4 763.5,321.2 763.6,324.0 763.6,326.7 763.7,329.5 763.7,332.3 763.8,335.0 763.9,337.8 763.9,340.6 764.0,343.4 763.7,346.1 763.0,348.9 762.3,351.7 761.6,354.5 760.8,357.2 758.0,360.0 755.2,362.8 752.4,365.6 749.7,368.3 747.6,371.1 746.5,373.9 745.4,376.6 744.3,379.4 743.3,382.2 743.1,385.0 743.1,387.7 743.1,390.5 743.1,393.3 743.1,396.1 743.1,398.8 743.1,401.6 743.1,404.4 743.1,407.2 743.1,409.9 743.1,412.7 743.2,415.5 743.2,418.3 743.2,421.0 743.2,423.8 743.2,426.6 743.2,429.3 743.2,432.1 743.2,434.9 743.2,437.7 743.2,440.4 743.2,443.2 743.2,446.0 743.2,448.8 743.2,451.5 743.2,454.3 743.2,457.1 743.2,459.9 743.2,462.6 743.2,465.4 743.2,468.2 743.2,470.9 743.2,473.7 743.3,476.5 743.3,479.3 743.3,482.0 743.3,484.8 743.3,487.6 743.3,490.4 743.3,493.1 743.3,495.9 743.3,498.7 743.3,501.5 743.3,504.2 743.3,507.0 743.3,507.0 743.6,508.8 744.7,510.6 746.4,512.4 748.8,514.0 751.7,515.5 755.2,516.9 759.2,518.0 763.5,519.0 768.2,519.7 773.2,520.2 778.2,520.5 783.4,520.5 788.4,520.2 793.4,519.7 798.1,519.0 802.4,518.0 806.4,516.9 809.9,515.5 812.8,514.0 815.2,512.4 816.9,510.6 818.0,508.8 818.3,507.0 818.3,507.0 818.3,504.2 818.3,501.5 818.3,498.7 818.3,495.9 818.3,493.1 818.3,490.4 818.3,487.6 818.3,484.8 818.3,482.0 818.3,479.3 818.3,476.5 818.4,473.7 818.4,470.9 818.4,468.2 818.4,465.4 818.4,462.6 818.4,459.9 818.4,457.1 818.4,454.3 818.4,451.5 818.4,448.8 818.4,446.0 818.4,443.2 818.4,440.4 818.4,437.7 818.4,434.9 818.4,432.1 818.4,429.3 818.4,426.6 818.4,423.8 818.4,421.0 818.4,418.3 818.4,415.5 818.5,412.7 818.5,409.9 818.5,407.2 818.5,404.4 818.5,401.6 818.5,398.8 818.5,396.1 818.5,393.3 818.5,390.5 818.5,387.7 818.5,385.0 818.4,382.2 817.4,379.4 816.4,376.6 815.4,373.9 814.4,371.1 812.3,368.3 809.6,365.6 806.8,362.8 804.0,360.0 801.2,357.2 800.4,354.5 799.7,351.7 799.0,348.9 798.3,346.1 798.0,343.4 798.1,340.6 798.1,337.8 798.2,335.0 798.3,332.3 798.3,329.5 798.4,326.7 798.4,324.0 798.5,321.2 798.4,318.4 798.1,315.6 797.9,312.9 797.7,310.1 797.4,307.3 797.2,304.5 797.0,301.8 796.8,299.0 796.8,296.2 796.8,293.4 796.8,290.7 796.8,287.9 796.8,287.9 796.7,287.1 796.2,286.4 795.5,285.7 794.6,285.0 793.3,284.4 791.9,283.8 790.3,283.4 788.5,283.0 786.6,282.7 784.5,282.5 782.5,282.4 780.3,282.4 778.3,282.5 776.2,282.7 774.3,283.0 772.5,283.4 770.9,283.8 769.5,284.4 768.2,285.0 767.3,285.7 766.6,286.4 766.1,287.1 766.0,287.9" fill="url(#bg3)" stroke="#2e0a08" stroke-width="1.2"/>
<polyline points="796.7,288.5 796.7,291.3 796.7,294.1 796.7,296.8 796.7,299.6 796.9,302.4 797.1,305.2 797.3,308.0 797.6,310.8 797.8,313.5 798.0,316.3 798.3,319.1 798.4,321.9 798.3,324.7 798.3,327.4 798.2,330.2 798.1,333.0 798.1,335.7 798.0,338.5 798.0,341.3 797.9,344.1 798.2,346.8 798.9,349.6 799.6,352.4 800.2,355.2 801.1,358.1 803.9,360.9 806.6,363.8 809.4,366.7 812.1,369.6 814.2,372.4 815.2,375.3 816.2,378.1 817.1,380.9 818.1,383.7 818.3,386.5 818.3,389.3 818.3,392.0 818.2,394.8 818.2,397.6 818.2,400.4 818.2,403.1 818.2,405.9 818.2,408.7 818.2,411.4 818.2,414.2 818.2,417.0 818.2,419.8 818.2,422.5 818.2,425.3 818.2,428.1 818.2,430.9 818.2,433.6 818.2,436.4 818.2,439.2 818.2,442.0 818.2,444.7 818.2,447.5 818.2,450.3 818.2,453.0 818.1,455.8 818.1,458.6 818.1,461.4 818.1,464.1 818.1,466.9 818.1,469.7 818.1,472.5 818.1,475.2 818.1,478.0 818.1,480.8 818.1,483.6 818.1,486.3 818.1,489.1 818.1,491.9 818.1,494.6 818.1,497.4 818.1,500.2 818.1,503.0 818.1,505.7 818.1,508.5" fill="none" stroke="#2e0a08" stroke-width="0.8"/>
<polyline points="795.9,289.7 795.9,292.5 795.9,295.3 795.9,298.1 795.9,300.8 796.1,303.6 796.3,306.4 796.5,309.2 796.7,312.0 797.0,314.9 797.2,317.7 797.4,320.5 797.5,323.3 797.4,326.0 797.4,328.8 797.3,331.6 797.3,334.3 797.2,337.1 797.2,339.9 797.1,342.6 797.1,345.4 797.3,348.2 798.0,351.1 798.6,353.9 799.3,356.8 800.1,359.6 802.7,362.7 805.3,365.8 808.0,369.0 810.6,372.1 812.5,375.1 813.5,378.0 814.4,380.9 815.3,383.8 816.2,386.7 816.4,389.5 816.4,392.2 816.4,395.0 816.4,397.8 816.4,400.5 816.4,403.3 816.4,406.1 816.4,408.9 816.3,411.6 816.3,414.4 816.3,417.2 816.3,420.0 816.3,422.7 816.3,425.5 816.3,428.3 816.3,431.0 816.3,433.8 816.3,436.6 816.3,439.4 816.3,442.1 816.3,444.9 816.3,447.7 816.3,450.5 816.3,453.2 816.3,456.0 816.3,458.8 816.3,461.5 816.3,464.3 816.3,467.1 816.3,469.9 816.3,472.6 816.3,475.4 816.2,478.2 816.2,481.0 816.2,483.7 816.2,486.5 816.2,489.3 816.2,492.0 816.2,494.8 816.2,497.6 816.2,500.4 816.2,503.1 816.2,505.9 816.2,508.7 816.2,511.5" fill="none" stroke="#2e0a08" stroke-width="0.8"/>
<polyline points="794.4,290.8 794.4,293.6 794.4,296.4 794.4,299.2 794.4,301.9 794.6,304.8 794.8,307.6 794.9,310.4 795.1,313.2 795.3,316.1 795.5,318.9 795.7,321.7 795.8,324.5 795.8,327.3 795.7,330.1 795.7,332.8 795.6,335.6 795.6,338.3 795.5,341.1 795.5,343.9 795.4,346.6 795.6,349.5 796.2,352.4 796.8,355.3 797.4,358.2 798.1,361.1 800.5,364.4 802.8,367.7 805.2,371.0 807.5,374.3 809.3,377.5 810.1,380.5 810.9,383.4 811.8,386.4 812.6,389.4 812.7,392.2 812.7,395.0 812.7,397.7 812.7,400.5 812.7,403.3 812.7,406.1 812.7,408.8 812.7,411.6 812.7,414.4 812.7,417.1 812.7,419.9 812.7,422.7 812.7,425.5 812.7,428.2 812.7,431.0 812.7,433.8 812.7,436.6 812.7,439.3 812.7,442.1 812.6,444.9 812.6,447.6 812.6,450.4 812.6,453.2 812.6,456.0 812.6,458.7 812.6,461.5 812.6,464.3 812.6,467.0 812.6,469.8 812.6,472.6 812.6,475.4 812.6,478.1 812.6,480.9 812.6,483.7 812.6,486.5 812.6,489.2 812.6,492.0 812.6,494.8 812.6,497.5 812.6,500.3 812.6,503.1 812.6,505.9 812.6,508.6 812.6,511.4 812.6,514.2" fill="none" stroke="#2e0a08" stroke-width="0.8"/>
<polyline points="792.3,291.8 792.3,294.6 792.3,297.4 792.3,300.1 792.3,302.9 792.4,305.7 792.5,308.6 792.7,311.4 792.8,314.3 793.0,317.1 793.1,320.0 793.3,322.8 793.4,325.6 793.3,328.4 793.3,331.1 793.2,333.9 793.2,336.7 793.2,339.4 793.1,342.2 793.1,344.9 793.0,347.7 793.2,350.5 793.7,353.5 794.2,356.4 794.7,359.4 795.3,362.4 797.3,365.9 799.2,369.3 801.2,372.8 803.2,376.3 804.6,379.6 805.3,382.6 806.0,385.7 806.7,388.7 807.4,391.8 807.5,394.6 807.5,397.3 807.4,400.1 807.4,402.9 807.4,405.7 807.4,408.4 807.4,411.2 807.4,414.0 807.4,416.7 807.4,419.5 807.4,422.3 807.4,425.1 807.4,427.8 807.4,430.6 807.4,433.4 807.4,436.1 807.4,438.9 807.4,441.7 807.4,444.5 807.4,447.2 807.4,450.0 807.4,452.8 807.4,455.6 807.4,458.3 807.4,461.1 807.4,463.9 807.4,466.6 807.4,469.4 807.4,472.2 807.4,475.0 807.4,477.7 807.4,480.5 807.4,483.3 807.4,486.1 807.3,488.8 807.3,491.6 807.3,494.4 807.3,497.1 807.3,499.9 807.3,502.7 807.3,505.5 807.3,508.2 807.3,511.0 807.3,513.8 807.3,516.5" fill="none" stroke="#2e0a08" stroke-width="0.8"/>
<polyline points="789.6,292.6 789.6,295.4 789.6,298.1 789.6,300.9 789.6,303.7 789.7,306.5 789.8,309.4 789.9,312.2 790.0,315.1 790.1,318.0 790.2,320.8 790.3,323.7 790.3,326.5 790.3,329.3 790.2,332.0 790.2,334.8 790.2,337.5 790.2,340.3 790.1,343.0 790.1,345.8 790.1,348.6 790.2,351.4 790.6,354.4 790.9,357.4 791.3,360.4 791.8,363.4 793.2,367.0 794.7,370.6 796.2,374.3 797.7,377.9 798.8,381.3 799.3,384.4 799.8,387.5 800.3,390.6 800.8,393.6 800.9,396.5 800.9,399.2 800.9,402.0 800.8,404.8 800.8,407.5 800.8,410.3 800.8,413.1 800.8,415.9 800.8,418.6 800.8,421.4 800.8,424.2 800.8,427.0 800.8,429.7 800.8,432.5 800.8,435.3 800.8,438.0 800.8,440.8 800.8,443.6 800.8,446.4 800.8,449.1 800.8,451.9 800.8,454.7 800.8,457.4 800.8,460.2 800.8,463.0 800.8,465.8 800.8,468.5 800.8,471.3 800.8,474.1 800.8,476.8 800.8,479.6 800.8,482.4 800.8,485.2 800.8,487.9 800.8,490.7 800.8,493.5 800.8,496.3 800.8,499.0 800.8,501.8 800.8,504.6 800.8,507.3 800.8,510.1 800.8,512.9 800.8,515.7 800.8,518.4" fill="none" stroke="#2e0a08" stroke-width="0.8"/>
<polyline points="786.5,293.1 786.5,295.9 786.5,298.7 786.5,301.5 786.5,304.2 786.5,307.1 786.6,309.9 786.6,312.8 786.6,315.7 786.7,318.6 786.7,321.4 786.8,324.3 786.8,327.1 786.8,329.9 786.7,332.6 786.7,335.4 786.7,338.1 786.7,340.9 786.7,343.6 786.6,346.4 786.6,349.2 786.7,352.0 786.9,355.0 787.2,358.0 787.4,361.0 787.7,364.1 788.6,367.8 789.5,371.5 790.4,375.3 791.3,379.0 792.0,382.5 792.3,385.6 792.6,388.7 792.9,391.8 793.2,395.0 793.3,397.8 793.2,400.6 793.2,403.3 793.2,406.1 793.2,408.9 793.2,411.6 793.2,414.4 793.2,417.2 793.2,420.0 793.2,422.7 793.2,425.5 793.2,428.3 793.2,431.0 793.2,433.8 793.2,436.6 793.2,439.4 793.2,442.1 793.2,444.9 793.2,447.7 793.2,450.4 793.2,453.2 793.2,456.0 793.2,458.8 793.2,461.5 793.2,464.3 793.2,467.1 793.2,469.8 793.2,472.6 793.2,475.4 793.2,478.2 793.2,480.9 793.2,483.7 793.2,486.5 793.2,489.3 793.2,492.0 793.2,494.8 793.2,497.6 793.2,500.3 793.2,503.1 793.2,505.9 793.2,508.7 793.2,511.4 793.2,514.2 793.2,517.0 793.2,519.7" fill="none" stroke="#2e0a08" stroke-width="0.8"/>
<polyline points="783.1,293.4 783.1,296.2 783.1,299.0 783.1,301.7 783.1,304.5 783.1,307.3 783.1,310.2 783.1,313.1 783.0,316.0 783.0,318.9 783.0,321.7 783.0,324.6 783.0,327.4 783.0,330.2 782.9,332.9 782.9,335.7 782.9,338.4 782.9,341.2 782.9,344.0 782.9,346.7 782.9,349.5 782.9,352.3 783.0,355.3 783.1,358.4 783.2,361.4 783.3,364.5 783.6,368.2 783.9,372.0 784.2,375.8 784.5,379.5 784.7,383.1 784.8,386.2 784.9,389.3 784.9,392.5 785.0,395.6 785.0,398.5 785.0,401.2 785.0,404.0 785.0,406.8 785.0,409.5 785.0,412.3 785.0,415.1 785.0,417.9 785.0,420.6 785.0,423.4 785.0,426.2 785.0,428.9 785.0,431.7 785.0,434.5 785.0,437.3 785.0,440.0 785.0,442.8 785.0,445.6 785.0,448.3 785.0,451.1 785.0,453.9 785.0,456.7 785.0,459.4 785.0,462.2 785.0,465.0 785.0,467.8 785.0,470.5 785.0,473.3 785.0,476.1 785.0,478.8 785.0,481.6 785.0,484.4 785.0,487.2 785.0,489.9 785.0,492.7 785.0,495.5 785.0,498.2 785.0,501.0 785.0,503.8 785.0,506.6 785.0,509.3 785.0,512.1 785.0,514.9 785.0,517.6 785.0,520.4" fill="none" stroke="#2e0a08" stroke-width="0.8"/>
<polyline points="779.7,293.4 779.7,296.2 779.7,299.0 779.7,301.7 779.7,304.5 779.6,307.3 779.5,310.2 779.4,313.1 779.4,316.0 779.3,318.9 779.2,321.7 779.1,324.6 779.0,327.4 779.0,330.2 779.1,332.9 779.1,335.7 779.1,338.4 779.1,341.2 779.1,344.0 779.1,346.7 779.1,349.5 779.1,352.3 779.0,355.3 778.9,358.4 778.8,361.4 778.7,364.5 778.4,368.2 778.1,372.0 777.8,375.8 777.5,379.5 777.2,383.1 777.1,386.2 776.9,389.3 776.8,392.5 776.6,395.6 776.6,398.5 776.6,401.2 776.6,404.0 776.6,406.8 776.6,409.5 776.6,412.3 776.6,415.1 776.6,417.9 776.6,420.6 776.6,423.4 776.6,426.2 776.6,428.9 776.6,431.7 776.6,434.5 776.6,437.3 776.6,440.0 776.6,442.8 776.6,445.6 776.6,448.3 776.6,451.1 776.6,453.9 776.6,456.7 776.6,459.4 776.6,462.2 776.6,465.0 776.6,467.8 776.6,470.5 776.6,473.3 776.6,476.1 776.6,478.8 776.6,481.6 776.6,484.4 776.6,487.2 776.6,489.9 776.6,492.7 776.6,495.5 776.6,498.2 776.6,501.0 776.6,503.8 776.6,506.6 776.6,509.3 776.6,512.1 776.6,514.9 776.6,517.6 776.6,520.4" fill="none" stroke="#2e0a08" stroke-width="0.8"/>
<polyline points="776.3,293.1 776.3,295.9 776.3,298.7 776.3,301.5 776.3,304.2 776.2,307.1 776.1,309.9 775.9,312.8 775.8,315.7 775.6,318.6 775.5,321.4 775.3,324.3 775.2,327.1 775.2,329.9 775.3,332.6 775.3,335.4 775.3,338.1 775.3,340.9 775.3,343.6 775.4,346.4 775.4,349.2 775.3,352.0 775.1,355.0 774.8,358.0 774.6,361.0 774.3,364.1 773.4,367.8 772.5,371.5 771.6,375.3 770.7,379.0 769.9,382.5 769.6,385.6 769.2,388.7 768.8,391.8 768.4,395.0 768.3,397.8 768.4,400.6 768.4,403.3 768.4,406.1 768.4,408.9 768.4,411.6 768.4,414.4 768.4,417.2 768.4,420.0 768.4,422.7 768.4,425.5 768.4,428.3 768.4,431.0 768.4,433.8 768.4,436.6 768.4,439.4 768.4,442.1 768.4,444.9 768.4,447.7 768.4,450.4 768.4,453.2 768.4,456.0 768.4,458.8 768.4,461.5 768.4,464.3 768.4,467.1 768.4,469.8 768.4,472.6 768.4,475.4 768.4,478.2 768.4,480.9 768.4,483.7 768.4,486.5 768.4,489.3 768.4,492.0 768.4,494.8 768.4,497.6 768.4,500.3 768.4,503.1 768.4,505.9 768.4,508.7 768.4,511.4 768.4,514.2 768.4,517.0 768.4,519.7" fill="none" stroke="#2e0a08" stroke-width="0.8"/>
<polyline points="773.2,292.6 773.2,295.4 773.2,298.1 773.2,300.9 773.2,303.7 773.1,306.5 772.9,309.4 772.7,312.2 772.4,315.1 772.2,318.0 772.0,320.8 771.8,323.7 771.7,326.5 771.7,329.3 771.8,332.0 771.8,334.8 771.8,337.5 771.8,340.3 771.9,343.0 771.9,345.8 771.9,348.6 771.8,351.4 771.4,354.4 771.1,357.4 770.7,360.4 770.2,363.4 768.8,367.0 767.3,370.6 765.8,374.3 764.3,377.9 763.2,381.3 762.6,384.4 762.0,387.5 761.4,390.6 760.8,393.6 760.7,396.5 760.7,399.2 760.7,402.0 760.8,404.8 760.8,407.5 760.8,410.3 760.8,413.1 760.8,415.9 760.8,418.6 760.8,421.4 760.8,424.2 760.8,427.0 760.8,429.7 760.8,432.5 760.8,435.3 760.8,438.0 760.8,440.8 760.8,443.6 760.8,446.4 760.8,449.1 760.8,451.9 760.8,454.7 760.8,457.4 760.8,460.2 760.8,463.0 760.8,465.8 760.8,468.5 760.8,471.3 760.8,474.1 760.8,476.8 760.8,479.6 760.8,482.4 760.8,485.2 760.8,487.9 760.8,490.7 760.8,493.5 760.8,496.3 760.8,499.0 760.8,501.8 760.8,504.6 760.8,507.3 760.8,510.1 760.8,512.9 760.8,515.7 760.8,518.4" fill="none" stroke="#2e0a08" stroke-width="0.8"/>
<polyline points="770.5,291.8 770.5,294.6 770.5,297.4 770.5,300.1 770.5,302.9 770.3,305.7 770.1,308.6 769.8,311.4 769.6,314.3 769.3,317.1 769.0,320.0 768.8,322.8 768.6,325.6 768.7,328.4 768.7,331.1 768.8,333.9 768.8,336.7 768.8,339.4 768.9,342.2 768.9,344.9 769.0,347.7 768.8,350.5 768.3,353.5 767.8,356.4 767.3,359.4 766.7,362.4 764.7,365.9 762.8,369.3 760.8,372.8 758.8,376.3 757.4,379.6 756.6,382.6 755.8,385.7 755.0,388.7 754.3,391.8 754.1,394.6 754.1,397.3 754.2,400.1 754.2,402.9 754.2,405.7 754.2,408.4 754.2,411.2 754.2,414.0 754.2,416.7 754.2,419.5 754.2,422.3 754.2,425.1 754.2,427.8 754.2,430.6 754.2,433.4 754.2,436.1 754.2,438.9 754.2,441.7 754.2,444.5 754.2,447.2 754.2,450.0 754.2,452.8 754.2,455.6 754.2,458.3 754.2,461.1 754.2,463.9 754.2,466.6 754.2,469.4 754.2,472.2 754.2,475.0 754.2,477.7 754.2,480.5 754.2,483.3 754.2,486.1 754.3,488.8 754.3,491.6 754.3,494.4 754.3,497.1 754.3,499.9 754.3,502.7 754.3,505.5 754.3,508.2 754.3,511.0 754.3,513.8 754.3,516.5" fill="none" stroke="#2e0a08" stroke-width="0.8"/>
<polyline points="768.4,290.8 768.4,293.6 768.4,296.4 768.4,299.2 768.4,301.9 768.2,304.8 767.9,307.6 767.6,310.4 767.3,313.2 767.0,316.1 766.7,318.9 766.4,321.7 766.2,324.5 766.2,327.3 766.3,330.1 766.3,332.8 766.4,335.6 766.4,338.3 766.5,341.1 766.5,343.9 766.6,346.6 766.4,349.5 765.8,352.4 765.2,355.3 764.6,358.2 763.9,361.1 761.5,364.4 759.2,367.7 756.8,371.0 754.5,374.3 752.7,377.5 751.8,380.5 750.9,383.4 749.9,386.4 749.0,389.4 748.9,392.2 748.9,395.0 748.9,397.7 748.9,400.5 748.9,403.3 748.9,406.1 748.9,408.8 748.9,411.6 748.9,414.4 748.9,417.1 748.9,419.9 748.9,422.7 748.9,425.5 748.9,428.2 748.9,431.0 748.9,433.8 748.9,436.6 748.9,439.3 748.9,442.1 749.0,444.9 749.0,447.6 749.0,450.4 749.0,453.2 749.0,456.0 749.0,458.7 749.0,461.5 749.0,464.3 749.0,467.0 749.0,469.8 749.0,472.6 749.0,475.4 749.0,478.1 749.0,480.9 749.0,483.7 749.0,486.5 749.0,489.2 749.0,492.0 749.0,494.8 749.0,497.5 749.0,500.3 749.0,503.1 749.0,505.9 749.0,508.6 749.0,511.4 749.0,514.2" fill="none" stroke="#2e0a08" stroke-width="0.8"/>
<polyline points="766.9,289.7 766.9,292.5 766.9,295.3 766.9,298.1 766.9,300.8 766.7,303.6 766.3,306.4 766.0,309.2 765.7,312.0 765.3,314.9 765.0,317.7 764.7,320.5 764.5,323.3 764.6,326.0 764.6,328.8 764.7,331.6 764.7,334.3 764.8,337.1 764.8,339.9 764.9,342.6 764.9,345.4 764.7,348.2 764.0,351.1 763.4,353.9 762.7,356.8 761.9,359.6 759.3,362.7 756.7,365.8 754.0,369.0 751.4,372.1 749.4,375.1 748.4,378.0 747.4,380.9 746.4,383.8 745.4,386.7 745.2,389.5 745.2,392.2 745.2,395.0 745.2,397.8 745.2,400.5 745.2,403.3 745.2,406.1 745.2,408.9 745.3,411.6 745.3,414.4 745.3,417.2 745.3,420.0 745.3,422.7 745.3,425.5 745.3,428.3 745.3,431.0 745.3,433.8 745.3,436.6 745.3,439.4 745.3,442.1 745.3,444.9 745.3,447.7 745.3,450.5 745.3,453.2 745.3,456.0 745.3,458.8 745.3,461.5 745.3,464.3 745.3,467.1 745.3,469.9 745.3,472.6 745.3,475.4 745.4,478.2 745.4,481.0 745.4,483.7 745.4,486.5 745.4,489.3 745.4,492.0 745.4,494.8 745.4,497.6 745.4,500.4 745.4,503.1 745.4,505.9 745.4,508.7 745.4,511.5" fill="none" stroke="#2e0a08" stroke-width="0.8"/>
<polyline points="766.1,288.5 766.1,291.3 766.1,294.1 766.1,296.8 766.1,299.6 765.9,302.4 765.5,305.2 765.2,308.0 764.8,310.8 764.5,313.5 764.2,316.3 763.8,319.1 763.6,321.9 763.7,324.7 763.7,327.4 763.8,330.2 763.9,333.0 763.9,335.7 764.0,338.5 764.0,341.3 764.1,344.1 763.8,346.8 763.1,349.6 762.4,352.4 761.8,355.2 760.9,358.1 758.1,360.9 755.4,363.8 752.6,366.7 749.9,369.6 747.8,372.4 746.7,375.3 745.6,378.1 744.6,380.9 743.5,383.7 743.3,386.5 743.3,389.3 743.3,392.0 743.4,394.8 743.4,397.6 743.4,400.4 743.4,403.1 743.4,405.9 743.4,408.7 743.4,411.4 743.4,414.2 743.4,417.0 743.4,419.8 743.4,422.5 743.4,425.3 743.4,428.1 743.4,430.9 743.4,433.6 743.4,436.4 743.4,439.2 743.4,442.0 743.4,444.7 743.4,447.5 743.4,450.3 743.4,453.0 743.5,455.8 743.5,458.6 743.5,461.4 743.5,464.1 743.5,466.9 743.5,469.7 743.5,472.5 743.5,475.2 743.5,478.0 743.5,480.8 743.5,483.6 743.5,486.3 743.5,489.1 743.5,491.9 743.5,494.6 743.5,497.4 743.5,500.2 743.5,503.0 743.5,505.7 743.5,508.5" fill="none" stroke="#2e0a08" stroke-width="0.8"/>
<polygon points="796.8,287.9 796.6,288.9 795.8,289.8 794.6,290.7 793.0,291.5 791.0,292.2 788.7,292.8 786.2,293.2 783.5,293.4 780.7,293.4 778.0,293.3 775.3,293.0 772.9,292.5 770.8,291.9 768.9,291.2 767.5,290.3 766.6,289.4 766.1,288.4 766.1,287.4 766.6,286.4 767.5,285.5 768.9,284.6 770.8,283.9 772.9,283.3 775.3,282.8 778.0,282.5 780.7,282.4 783.5,282.4 786.2,282.6 788.7,283.0 791.0,283.6 793.0,284.3 794.6,285.1 795.8,286.0 796.6,286.9 796.8,287.9" fill="#8a4038" stroke="#2e0a08" stroke-width="1"/>
<ellipse cx="781.4" cy="288.4" rx="8.5" ry="3.0" fill="#3a0c0a"/>
<line x1="789.9" y1="288.4" x2="796.8" y2="287.9" stroke="#2e0a08" stroke-width="0.7"/>
<line x1="789.1" y1="289.6" x2="795.5" y2="290.2" stroke="#2e0a08" stroke-width="0.7"/>
<line x1="787.1" y1="290.7" x2="791.7" y2="292.0" stroke="#2e0a08" stroke-width="0.7"/>
<line x1="784.0" y1="291.3" x2="786.2" y2="293.2" stroke="#2e0a08" stroke-width="0.7"/>
<line x1="780.5" y1="291.4" x2="779.8" y2="293.4" stroke="#2e0a08" stroke-width="0.7"/>
<line x1="777.2" y1="291.0" x2="773.7" y2="292.7" stroke="#2e0a08" stroke-width="0.7"/>
<line x1="774.5" y1="290.2" x2="768.9" y2="291.2" stroke="#2e0a08" stroke-width="0.7"/>
<line x1="773.1" y1="289.0" x2="766.3" y2="289.1" stroke="#2e0a08" stroke-width="0.7"/>
<line x1="773.1" y1="287.8" x2="766.3" y2="286.7" stroke="#2e0a08" stroke-width="0.7"/>
<line x1="774.5" y1="286.6" x2="768.9" y2="284.6" stroke="#2e0a08" stroke-width="0.7"/>
<line x1="777.2" y1="285.8" x2="773.7" y2="283.1" stroke="#2e0a08" stroke-width="0.7"/>
<line x1="780.5" y1="285.4" x2="779.8" y2="282.4" stroke="#2e0a08" stroke-width="0.7"/>
<line x1="784.0" y1="285.5" x2="786.2" y2="282.6" stroke="#2e0a08" stroke-width="0.7"/>
<line x1="787.1" y1="286.1" x2="791.7" y2="283.8" stroke="#2e0a08" stroke-width="0.7"/>
<line x1="789.1" y1="287.2" x2="795.5" y2="285.6" stroke="#2e0a08" stroke-width="0.7"/>
<polyline points="796.8,294.0 796.6,294.9 796.0,295.8 794.9,296.6 793.6,297.4 791.8,298.1 789.8,298.6 787.6,299.1 785.2,299.4 782.7,299.5 780.1,299.5 777.6,299.4 775.2,299.1 773.0,298.6 771.0,298.1 769.2,297.4 767.9,296.6 766.8,295.8 766.2,294.9 766.0,294.0" fill="none" stroke="#2e0a08" stroke-width="0.8"/>
<polyline points="797.0,302.0 796.8,302.9 796.1,303.8 795.1,304.7 793.7,305.5 791.9,306.1 789.9,306.7 787.6,307.1 785.2,307.4 782.6,307.6 780.1,307.6 777.5,307.4 775.1,307.1 772.8,306.7 770.8,306.1 769.0,305.5 767.6,304.7 766.6,303.8 766.0,302.9 765.8,302.0" fill="none" stroke="#2e0a08" stroke-width="0.8"/>
<polyline points="797.8,312.0 797.6,313.0 796.9,313.9 795.8,314.9 794.3,315.7 792.4,316.4 790.3,317.0 787.9,317.5 785.2,317.8 782.5,318.0 779.8,318.0 777.1,317.8 774.5,317.5 772.0,317.0 769.9,316.4 768.0,315.7 766.5,314.9 765.4,313.9 764.7,313.0 764.5,312.0" fill="none" stroke="#2e0a08" stroke-width="0.8"/>
<polyline points="798.5,322.0 798.2,323.0 797.5,324.0 796.4,325.0 794.8,325.9 792.8,326.6 790.5,327.3 788.0,327.8 785.3,328.1 782.4,328.3 779.6,328.3 776.7,328.1 774.0,327.8 771.5,327.3 769.2,326.6 767.2,325.9 765.6,325.0 764.5,324.0 763.8,323.0 763.5,322.0" fill="none" stroke="#2e0a08" stroke-width="0.8"/>
<polyline points="798.3,332.0 798.0,333.0 797.3,334.0 796.2,335.0 794.6,335.8 792.7,336.6 790.4,337.2 787.9,337.7 785.2,338.0 782.4,338.2 779.6,338.2 776.8,338.0 774.1,337.7 771.6,337.2 769.3,336.6 767.4,335.8 765.8,335.0 764.7,334.0 764.0,333.0 763.7,332.0" fill="none" stroke="#2e0a08" stroke-width="0.8"/>
<polyline points="798.1,342.0 797.8,343.0 797.1,344.0 796.0,344.9 794.5,345.8 792.6,346.5 790.3,347.1 787.9,347.6 785.2,348.0 782.4,348.1 779.6,348.1 776.8,348.0 774.1,347.6 771.7,347.1 769.4,346.5 767.5,345.8 766.0,344.9 764.9,344.0 764.2,343.0 763.9,342.0" fill="none" stroke="#2e0a08" stroke-width="0.8"/>
<polyline points="799.8,352.0 799.5,353.1 798.7,354.2 797.5,355.2 795.8,356.1 793.7,357.0 791.3,357.7 788.5,358.2 785.6,358.5 782.5,358.7 779.5,358.7 776.4,358.5 773.5,358.2 770.7,357.7 768.3,357.0 766.2,356.1 764.5,355.2 763.3,354.2 762.5,353.1 762.2,352.0" fill="none" stroke="#2e0a08" stroke-width="0.8"/>
<polyline points="806.0,362.0 805.7,363.5 804.6,364.9 803.0,366.3 800.7,367.5 797.9,368.6 794.7,369.5 791.0,370.2 787.1,370.7 783.1,371.0 778.9,371.0 774.9,370.7 771.0,370.2 767.3,369.5 764.1,368.6 761.3,367.5 759.0,366.3 757.4,364.9 756.3,363.5 756.0,362.0" fill="none" stroke="#2e0a08" stroke-width="0.8"/>
<polyline points="814.0,370.0 813.5,372.0 812.2,373.9 810.0,375.7 807.0,377.3 803.4,378.7 799.0,379.9 794.3,380.9 789.1,381.5 783.7,381.8 778.3,381.8 772.9,381.5 767.7,380.9 763.0,379.9 758.6,378.7 755.0,377.3 752.0,375.7 749.8,373.9 748.5,372.0 748.0,370.0" fill="none" stroke="#2e0a08" stroke-width="0.8"/>
<polyline points="816.1,376.0 815.7,378.1 814.2,380.1 811.9,382.0 808.7,383.8 804.8,385.3 800.2,386.6 795.1,387.6 789.6,388.3 783.8,388.6 778.0,388.6 772.3,388.3 766.7,387.6 761.6,386.6 757.0,385.3 753.1,383.8 749.9,382.0 747.6,380.1 746.1,378.1 745.7,376.0" fill="none" stroke="#2e0a08" stroke-width="0.8"/>
<polyline points="818.3,382.0 817.8,384.2 816.3,386.4 813.8,388.4 810.4,390.3 806.2,391.9 801.3,393.3 795.9,394.4 790.0,395.1 783.9,395.4 777.7,395.4 771.6,395.1 765.8,394.4 760.3,393.3 755.4,391.9 751.2,390.3 747.9,388.4 745.4,386.4 743.8,384.2 743.3,382.0" fill="none" stroke="#2e0a08" stroke-width="0.8"/>
<polyline points="818.5,388.0 818.0,390.2 816.4,392.4 813.9,394.5 810.5,396.3 806.3,398.0 801.4,399.4 795.9,400.4 790.1,401.2 783.9,401.5 777.7,401.5 771.5,401.2 765.7,400.4 760.2,399.4 755.3,398.0 751.1,396.3 747.7,394.5 745.2,392.4 743.6,390.2 743.1,388.0" fill="none" stroke="#2e0a08" stroke-width="0.8"/>
<polyline points="818.5,410.0 817.9,412.2 816.4,414.4 813.9,416.5 810.5,418.3 806.3,420.0 801.4,421.3 795.9,422.4 790.0,423.1 783.9,423.5 777.7,423.5 771.6,423.1 765.7,422.4 760.2,421.3 755.3,420.0 751.1,418.3 747.7,416.5 745.2,414.4 743.7,412.2 743.1,410.0" fill="none" stroke="#2e0a08" stroke-width="0.8"/>
<polyline points="818.4,460.0 817.9,462.2 816.3,464.4 813.8,466.4 810.5,468.3 806.2,470.0 801.4,471.3 795.9,472.4 790.0,473.1 783.9,473.5 777.7,473.5 771.6,473.1 765.7,472.4 760.2,471.3 755.4,470.0 751.1,468.3 747.8,466.4 745.3,464.4 743.7,462.2 743.2,460.0" fill="none" stroke="#2e0a08" stroke-width="0.8"/>
<polyline points="818.3,500.0 817.8,502.2 816.3,504.4 813.8,506.4 810.4,508.3 806.2,509.9 801.3,511.3 795.9,512.4 790.0,513.1 783.9,513.5 777.7,513.5 771.6,513.1 765.7,512.4 760.3,511.3 755.4,509.9 751.2,508.3 747.8,506.4 745.3,504.4 743.8,502.2 743.3,500.0" fill="none" stroke="#2e0a08" stroke-width="0.8"/>
<linearGradient id="bg4" x1="0" y1="0" x2="1" y2="0"><stop offset="0" stop-color="#4e1410"/><stop offset="0.35" stop-color="#72221b"/><stop offset="0.55" stop-color="#86352d"/><stop offset="0.8" stop-color="#72221b"/><stop offset="1" stop-color="#4a1210"/></linearGradient>
<polygon points="983.2,363.4 983.2,365.6 983.2,367.9 983.2,370.1 983.2,372.3 983.2,374.6 983.2,376.8 983.2,379.0 983.2,381.3 983.2,383.5 983.2,385.8 983.2,388.0 983.2,390.2 983.2,392.5 983.2,394.7 983.2,396.9 983.2,399.2 983.2,401.4 983.2,403.6 979.5,405.9 975.7,408.1 971.8,410.3 968.2,412.6 965.3,414.8 962.4,417.1 959.5,419.3 956.6,421.5 953.7,423.8 953.5,426.0 953.7,428.2 953.9,430.5 954.0,432.7 954.2,434.9 954.3,437.2 954.5,439.4 954.7,441.6 954.8,443.9 955.0,446.1 955.1,448.3 955.3,450.6 955.5,452.8 955.6,455.1 955.8,457.3 955.9,459.5 956.1,461.8 956.3,464.0 956.4,466.2 956.6,468.5 956.7,470.7 956.9,472.9 957.1,475.2 957.2,477.4 957.4,479.6 957.5,481.9 957.7,484.1 957.9,486.3 958.0,488.6 958.2,490.8 958.3,493.1 958.5,495.3 958.7,497.5 958.8,499.8 959.0,502.0 959.1,504.2 959.3,506.5 959.5,508.7 959.6,510.9 959.8,513.2 959.9,515.4 960.1,517.6 960.3,519.9 960.4,522.1 960.6,524.4 960.7,526.6 960.9,528.8 961.1,531.1 961.2,533.3 961.4,535.5 961.5,537.8 961.7,540.0 961.7,540.0 962.0,541.7 963.0,543.4 964.6,545.0 966.8,546.5 969.6,548.0 972.8,549.2 976.5,550.3 980.6,551.2 985.0,551.9 989.6,552.3 994.3,552.6 999.1,552.6 1003.8,552.3 1008.4,551.9 1012.8,551.2 1016.9,550.3 1020.6,549.2 1023.8,548.0 1026.6,546.5 1028.8,545.0 1030.4,543.4 1031.4,541.7 1031.7,540.0 1031.7,540.0 1031.8,537.8 1031.8,535.5 1031.9,533.3 1032.0,531.1 1032.0,528.8 1032.1,526.6 1032.1,524.4 1032.2,522.1 1032.3,519.9 1032.3,517.6 1032.4,515.4 1032.5,513.2 1032.5,510.9 1032.6,508.7 1032.7,506.5 1032.7,504.2 1032.8,502.0 1032.8,499.8 1032.9,497.5 1033.0,495.3 1033.0,493.1 1033.1,490.8 1033.2,488.6 1033.2,486.3 1033.3,484.1 1033.4,481.9 1033.4,479.6 1033.5,477.4 1033.5,475.2 1033.6,472.9 1033.7,470.7 1033.7,468.5 1033.8,466.2 1033.9,464.0 1033.9,461.8 1034.0,459.5 1034.1,457.3 1034.1,455.1 1034.2,452.8 1034.2,450.6 1034.3,448.3 1034.4,446.1 1034.4,443.9 1034.5,441.6 1034.6,439.4 1034.6,437.2 1034.7,434.9 1034.8,432.7 1034.8,430.5 1034.9,428.2 1034.9,426.0 1034.7,423.8 1032.1,421.5 1029.5,419.3 1026.9,417.1 1024.3,414.8 1021.7,412.6 1018.6,410.3 1015.5,408.1 1012.3,405.9 1009.2,403.6 1009.2,401.4 1009.2,399.2 1009.2,396.9 1009.2,394.7 1009.2,392.5 1009.2,390.2 1009.2,388.0 1009.2,385.8 1010.2,383.5 1011.2,381.3 1011.2,379.0 1011.2,376.8 1011.2,374.6 1011.2,372.3 1011.2,370.1 1011.2,367.9 1011.2,365.6 1011.2,363.4 1011.2,363.4 1011.1,362.7 1010.7,362.0 1010.0,361.4 1009.2,360.8 1008.1,360.2 1006.8,359.7 1005.3,359.3 1003.6,358.9 1001.9,358.7 1000.0,358.5 998.2,358.4 996.2,358.4 994.4,358.5 992.5,358.7 990.8,358.9 989.1,359.3 987.6,359.7 986.3,360.2 985.2,360.8 984.4,361.4 983.7,362.0 983.3,362.7 983.2,363.4" fill="url(#bg4)" stroke="#2e0a08" stroke-width="1.2"/>
<polyline points="1010.0,364.2 1010.0,366.4 1010.0,368.7 1010.0,370.9 1010.0,373.1 1010.0,375.4 1010.0,377.6 1010.0,379.8 1010.0,382.1 1009.1,384.3 1008.1,386.5 1008.1,388.7 1008.1,391.0 1008.1,393.2 1008.1,395.4 1008.1,397.7 1008.1,399.9 1008.1,402.1 1008.1,404.4 1010.9,406.8 1013.8,409.2 1016.7,411.7 1019.5,414.1 1021.9,416.5 1024.2,418.9 1026.6,421.3 1029.0,423.6 1031.4,426.0 1031.6,428.3 1031.5,430.5 1031.5,432.7 1031.4,435.0 1031.4,437.2 1031.3,439.4 1031.3,441.7 1031.2,443.9 1031.2,446.1 1031.1,448.3 1031.0,450.6 1031.0,452.8 1030.9,455.0 1030.9,457.3 1030.8,459.5 1030.8,461.7 1030.7,464.0 1030.7,466.2 1030.6,468.4 1030.6,470.6 1030.5,472.9 1030.4,475.1 1030.4,477.3 1030.3,479.6 1030.3,481.8 1030.2,484.0 1030.2,486.2 1030.1,488.5 1030.1,490.7 1030.0,492.9 1030.0,495.2 1029.9,497.4 1029.8,499.6 1029.8,501.8 1029.7,504.1 1029.7,506.3 1029.6,508.5 1029.6,510.8 1029.5,513.0 1029.5,515.2 1029.4,517.5 1029.4,519.7 1029.3,521.9 1029.2,524.1 1029.2,526.4 1029.1,528.6 1029.1,530.8 1029.0,533.1 1029.0,535.3 1028.9,537.5 1028.9,539.7 1028.8,542.0" fill="none" stroke="#2e0a08" stroke-width="0.8"/>
<polyline points="1007.5,365.7 1007.5,367.9 1007.5,370.2 1007.5,372.4 1007.5,374.6 1007.5,376.9 1007.5,379.1 1007.5,381.3 1007.5,383.6 1006.6,385.7 1005.8,387.9 1005.8,390.1 1005.8,392.3 1005.8,394.6 1005.8,396.8 1005.8,399.1 1005.8,401.3 1005.8,403.5 1005.8,405.8 1008.0,408.6 1010.3,411.4 1012.5,414.2 1014.7,416.9 1016.6,419.6 1018.5,422.3 1020.3,425.0 1022.2,427.7 1024.1,430.4 1024.3,432.6 1024.3,434.9 1024.2,437.1 1024.2,439.3 1024.2,441.5 1024.1,443.7 1024.1,445.9 1024.0,448.2 1024.0,450.4 1024.0,452.6 1023.9,454.8 1023.9,457.0 1023.9,459.3 1023.8,461.5 1023.8,463.7 1023.8,465.9 1023.7,468.1 1023.7,470.3 1023.7,472.6 1023.6,474.8 1023.6,477.0 1023.6,479.2 1023.5,481.4 1023.5,483.6 1023.5,485.9 1023.4,488.1 1023.4,490.3 1023.4,492.5 1023.3,494.7 1023.3,496.9 1023.3,499.2 1023.2,501.4 1023.2,503.6 1023.2,505.8 1023.1,508.0 1023.1,510.2 1023.1,512.5 1023.0,514.7 1023.0,516.9 1022.9,519.1 1022.9,521.3 1022.9,523.5 1022.8,525.8 1022.8,528.0 1022.8,530.2 1022.7,532.4 1022.7,534.6 1022.7,536.9 1022.6,539.1 1022.6,541.3 1022.6,543.5 1022.5,545.7" fill="none" stroke="#2e0a08" stroke-width="0.8"/>
<polyline points="1004.8,367.0 1004.8,369.2 1004.8,371.4 1004.8,373.7 1004.8,375.9 1004.8,378.1 1004.8,380.4 1004.8,382.6 1004.8,384.8 1004.0,387.0 1003.2,389.1 1003.2,391.3 1003.2,393.5 1003.2,395.8 1003.2,398.0 1003.2,400.2 1003.2,402.5 1003.2,404.7 1003.2,406.9 1004.8,410.0 1006.3,413.2 1007.9,416.3 1009.4,419.4 1010.8,422.3 1012.1,425.3 1013.5,428.2 1014.8,431.1 1016.1,434.1 1016.3,436.4 1016.3,438.6 1016.3,440.8 1016.2,443.0 1016.2,445.2 1016.2,447.4 1016.2,449.6 1016.2,451.8 1016.2,454.0 1016.2,456.2 1016.2,458.4 1016.1,460.6 1016.1,462.8 1016.1,465.0 1016.1,467.3 1016.1,469.5 1016.1,471.7 1016.1,473.9 1016.1,476.1 1016.0,478.3 1016.0,480.5 1016.0,482.7 1016.0,484.9 1016.0,487.1 1016.0,489.3 1016.0,491.5 1016.0,493.7 1015.9,495.9 1015.9,498.1 1015.9,500.4 1015.9,502.6 1015.9,504.8 1015.9,507.0 1015.9,509.2 1015.9,511.4 1015.8,513.6 1015.8,515.8 1015.8,518.0 1015.8,520.2 1015.8,522.4 1015.8,524.6 1015.8,526.8 1015.8,529.0 1015.7,531.3 1015.7,533.5 1015.7,535.7 1015.7,537.9 1015.7,540.1 1015.7,542.3 1015.7,544.5 1015.7,546.7 1015.6,548.9" fill="none" stroke="#2e0a08" stroke-width="0.8"/>
<polyline points="1001.8,367.9 1001.8,370.1 1001.8,372.4 1001.8,374.6 1001.8,376.8 1001.8,379.1 1001.8,381.3 1001.8,383.5 1001.8,385.8 1001.1,387.8 1000.5,389.9 1000.5,392.2 1000.5,394.4 1000.5,396.6 1000.5,398.9 1000.5,401.1 1000.5,403.3 1000.5,405.6 1000.5,407.8 1001.3,411.1 1002.1,414.5 1003.0,417.9 1003.8,421.1 1004.6,424.3 1005.3,427.4 1006.1,430.5 1006.9,433.6 1007.6,436.7 1007.7,439.0 1007.7,441.2 1007.7,443.4 1007.7,445.6 1007.8,447.8 1007.8,450.0 1007.8,452.2 1007.8,454.4 1007.8,456.6 1007.8,458.8 1007.8,461.0 1007.8,463.2 1007.8,465.4 1007.9,467.6 1007.9,469.8 1007.9,472.0 1007.9,474.2 1007.9,476.4 1007.9,478.6 1007.9,480.8 1007.9,483.0 1007.9,485.2 1008.0,487.4 1008.0,489.6 1008.0,491.8 1008.0,494.0 1008.0,496.2 1008.0,498.4 1008.0,500.6 1008.0,502.8 1008.0,505.0 1008.1,507.2 1008.1,509.4 1008.1,511.6 1008.1,513.8 1008.1,516.0 1008.1,518.2 1008.1,520.4 1008.1,522.6 1008.1,524.8 1008.2,527.0 1008.2,529.2 1008.2,531.4 1008.2,533.6 1008.2,535.8 1008.2,538.0 1008.2,540.2 1008.2,542.4 1008.2,544.6 1008.3,546.8 1008.3,549.0 1008.3,551.2" fill="none" stroke="#2e0a08" stroke-width="0.8"/>
<polyline points="998.8,368.4 998.8,370.6 998.8,372.8 998.8,375.1 998.8,377.3 998.8,379.6 998.8,381.8 998.8,384.0 998.8,386.3 998.2,388.3 997.6,390.4 997.6,392.6 997.6,394.8 997.6,397.1 997.6,399.3 997.6,401.6 997.6,403.8 997.6,406.0 997.6,408.3 997.7,411.7 997.8,415.2 997.8,418.7 997.9,422.1 998.1,425.3 998.2,428.5 998.4,431.7 998.6,434.9 998.7,438.2 998.8,440.5 998.8,442.7 998.8,444.9 998.9,447.1 998.9,449.2 999.0,451.4 999.0,453.6 999.0,455.8 999.1,458.0 999.1,460.2 999.1,462.4 999.2,464.6 999.2,466.8 999.2,469.0 999.3,471.2 999.3,473.4 999.3,475.6 999.4,477.8 999.4,480.0 999.5,482.2 999.5,484.4 999.5,486.6 999.6,488.8 999.6,491.0 999.6,493.2 999.7,495.4 999.7,497.6 999.7,499.7 999.8,501.9 999.8,504.1 999.8,506.3 999.9,508.5 999.9,510.7 1000.0,512.9 1000.0,515.1 1000.0,517.3 1000.1,519.5 1000.1,521.7 1000.1,523.9 1000.2,526.1 1000.2,528.3 1000.2,530.5 1000.3,532.7 1000.3,534.9 1000.3,537.1 1000.4,539.3 1000.4,541.5 1000.5,543.7 1000.5,545.9 1000.5,548.1 1000.6,550.2 1000.6,552.4" fill="none" stroke="#2e0a08" stroke-width="0.8"/>
<polyline points="995.6,368.4 995.6,370.6 995.6,372.8 995.6,375.1 995.6,377.3 995.6,379.6 995.6,381.8 995.6,384.0 995.6,386.3 995.2,388.3 994.8,390.4 994.8,392.6 994.8,394.8 994.8,397.1 994.8,399.3 994.8,401.6 994.8,403.8 994.8,406.0 994.8,408.3 994.1,411.7 993.3,415.2 992.6,418.7 992.0,422.1 991.5,425.3 991.1,428.5 990.6,431.7 990.2,434.9 989.7,438.2 989.7,440.5 989.8,442.7 989.8,444.9 989.9,447.1 990.0,449.2 990.0,451.4 990.1,453.6 990.1,455.8 990.2,458.0 990.3,460.2 990.3,462.4 990.4,464.6 990.4,466.8 990.5,469.0 990.6,471.2 990.6,473.4 990.7,475.6 990.7,477.8 990.8,480.0 990.9,482.2 990.9,484.4 991.0,486.6 991.0,488.8 991.1,491.0 991.2,493.2 991.2,495.4 991.3,497.6 991.4,499.7 991.4,501.9 991.5,504.1 991.5,506.3 991.6,508.5 991.7,510.7 991.7,512.9 991.8,515.1 991.8,517.3 991.9,519.5 992.0,521.7 992.0,523.9 992.1,526.1 992.1,528.3 992.2,530.5 992.3,532.7 992.3,534.9 992.4,537.1 992.4,539.3 992.5,541.5 992.6,543.7 992.6,545.9 992.7,548.1 992.7,550.2 992.8,552.4" fill="none" stroke="#2e0a08" stroke-width="0.8"/>
<polyline points="992.6,367.9 992.6,370.1 992.6,372.4 992.6,374.6 992.6,376.8 992.6,379.1 992.6,381.3 992.6,383.5 992.6,385.8 992.2,387.8 991.9,389.9 991.9,392.2 991.9,394.4 991.9,396.6 991.9,398.9 991.9,401.1 991.9,403.3 991.9,405.6 991.9,407.8 990.5,411.1 989.0,414.5 987.5,417.9 986.1,421.1 985.1,424.3 984.0,427.4 982.9,430.5 981.9,433.6 980.8,436.7 980.8,439.0 980.9,441.2 980.9,443.4 981.0,445.6 981.1,447.8 981.2,450.0 981.3,452.2 981.4,454.4 981.5,456.6 981.5,458.8 981.6,461.0 981.7,463.2 981.8,465.4 981.9,467.6 982.0,469.8 982.1,472.0 982.1,474.2 982.2,476.4 982.3,478.6 982.4,480.8 982.5,483.0 982.6,485.2 982.7,487.4 982.7,489.6 982.8,491.8 982.9,494.0 983.0,496.2 983.1,498.4 983.2,500.6 983.2,502.8 983.3,505.0 983.4,507.2 983.5,509.4 983.6,511.6 983.7,513.8 983.8,516.0 983.8,518.2 983.9,520.4 984.0,522.6 984.1,524.8 984.2,527.0 984.3,529.2 984.4,531.4 984.4,533.6 984.5,535.8 984.6,538.0 984.7,540.2 984.8,542.4 984.9,544.6 985.0,546.8 985.0,549.0 985.1,551.2" fill="none" stroke="#2e0a08" stroke-width="0.8"/>
<polyline points="989.6,367.0 989.6,369.2 989.6,371.4 989.6,373.7 989.6,375.9 989.6,378.1 989.6,380.4 989.6,382.6 989.6,384.8 989.4,387.0 989.2,389.1 989.2,391.3 989.2,393.5 989.2,395.8 989.2,398.0 989.2,400.2 989.2,402.5 989.2,404.7 989.2,406.9 987.0,410.0 984.8,413.2 982.6,416.3 980.5,419.4 978.9,422.3 977.2,425.3 975.6,428.2 973.9,431.1 972.3,434.1 972.2,436.4 972.3,438.6 972.4,440.8 972.5,443.0 972.6,445.2 972.8,447.4 972.9,449.6 973.0,451.8 973.1,454.0 973.2,456.2 973.3,458.4 973.4,460.6 973.5,462.8 973.6,465.0 973.7,467.3 973.8,469.5 973.9,471.7 974.1,473.9 974.2,476.1 974.3,478.3 974.4,480.5 974.5,482.7 974.6,484.9 974.7,487.1 974.8,489.3 974.9,491.5 975.0,493.7 975.1,495.9 975.3,498.1 975.4,500.4 975.5,502.6 975.6,504.8 975.7,507.0 975.8,509.2 975.9,511.4 976.0,513.6 976.1,515.8 976.2,518.0 976.3,520.2 976.4,522.4 976.6,524.6 976.7,526.8 976.8,529.0 976.9,531.3 977.0,533.5 977.1,535.7 977.2,537.9 977.3,540.1 977.4,542.3 977.5,544.5 977.6,546.7 977.8,548.9" fill="none" stroke="#2e0a08" stroke-width="0.8"/>
<polyline points="986.9,365.7 986.9,367.9 986.9,370.2 986.9,372.4 986.9,374.6 986.9,376.9 986.9,379.1 986.9,381.3 986.9,383.6 986.7,385.7 986.6,387.9 986.6,390.1 986.6,392.3 986.6,394.6 986.6,396.8 986.6,399.1 986.6,401.3 986.6,403.5 986.6,405.8 983.8,408.6 980.9,411.4 978.0,414.2 975.2,416.9 973.1,419.6 970.9,422.3 968.7,425.0 966.5,427.7 964.3,430.4 964.2,432.6 964.3,434.9 964.5,437.1 964.6,439.3 964.7,441.5 964.9,443.7 965.0,445.9 965.1,448.2 965.2,450.4 965.4,452.6 965.5,454.8 965.6,457.0 965.8,459.3 965.9,461.5 966.0,463.7 966.2,465.9 966.3,468.1 966.4,470.3 966.6,472.6 966.7,474.8 966.8,477.0 966.9,479.2 967.1,481.4 967.2,483.6 967.3,485.9 967.5,488.1 967.6,490.3 967.7,492.5 967.9,494.7 968.0,496.9 968.1,499.2 968.2,501.4 968.4,503.6 968.5,505.8 968.6,508.0 968.8,510.2 968.9,512.5 969.0,514.7 969.2,516.9 969.3,519.1 969.4,521.3 969.6,523.5 969.7,525.8 969.8,528.0 969.9,530.2 970.1,532.4 970.2,534.6 970.3,536.9 970.5,539.1 970.6,541.3 970.7,543.5 970.9,545.7" fill="none" stroke="#2e0a08" stroke-width="0.8"/>
<polyline points="984.4,364.2 984.4,366.4 984.4,368.7 984.4,370.9 984.4,373.1 984.4,375.4 984.4,377.6 984.4,379.8 984.4,382.1 984.3,384.3 984.3,386.5 984.3,388.7 984.3,391.0 984.3,393.2 984.3,395.4 984.3,397.7 984.3,399.9 984.3,402.1 984.3,404.4 980.8,406.8 977.3,409.2 973.8,411.7 970.4,414.1 967.8,416.5 965.1,418.9 962.4,421.3 959.7,423.6 957.1,426.0 956.9,428.3 957.0,430.5 957.2,432.7 957.4,435.0 957.5,437.2 957.7,439.4 957.8,441.7 958.0,443.9 958.1,446.1 958.3,448.3 958.4,450.6 958.6,452.8 958.7,455.0 958.9,457.3 959.0,459.5 959.2,461.7 959.3,464.0 959.5,466.2 959.6,468.4 959.8,470.6 959.9,472.9 960.1,475.1 960.2,477.3 960.4,479.6 960.5,481.8 960.7,484.0 960.8,486.2 961.0,488.5 961.1,490.7 961.3,492.9 961.4,495.2 961.6,497.4 961.7,499.6 961.9,501.8 962.0,504.1 962.2,506.3 962.3,508.5 962.5,510.8 962.6,513.0 962.8,515.2 962.9,517.5 963.1,519.7 963.2,521.9 963.4,524.1 963.5,526.4 963.7,528.6 963.8,530.8 964.0,533.1 964.1,535.3 964.3,537.5 964.4,539.7 964.6,542.0" fill="none" stroke="#2e0a08" stroke-width="0.8"/>
<polygon points="1011.2,363.4 1011.0,364.3 1010.3,365.2 1009.2,366.0 1007.7,366.7 1005.9,367.3 1003.8,367.8 1001.5,368.2 999.1,368.4 996.6,368.4 994.1,368.3 991.7,368.0 989.5,367.6 987.5,367.0 985.9,366.4 984.6,365.6 983.7,364.7 983.3,363.9 983.3,362.9 983.7,362.1 984.6,361.2 985.9,360.4 987.5,359.8 989.5,359.2 991.7,358.8 994.1,358.5 996.6,358.4 999.1,358.4 1001.5,358.6 1003.8,359.0 1005.9,359.5 1007.7,360.1 1009.2,360.8 1010.3,361.6 1011.0,362.5 1011.2,363.4" fill="#8a4038" stroke="#2e0a08" stroke-width="1"/>
<ellipse cx="997.2" cy="363.9" rx="7.7" ry="2.8" fill="#3a0c0a"/>
<line x1="1004.9" y1="363.9" x2="1011.2" y2="363.4" stroke="#2e0a08" stroke-width="0.7"/>
<line x1="1004.1" y1="365.1" x2="1009.8" y2="365.6" stroke="#2e0a08" stroke-width="0.7"/>
<line x1="1002.0" y1="366.1" x2="1005.9" y2="367.3" stroke="#2e0a08" stroke-width="0.7"/>
<line x1="998.9" y1="366.6" x2="1000.3" y2="368.3" stroke="#2e0a08" stroke-width="0.7"/>
<line x1="995.5" y1="366.6" x2="994.1" y2="368.3" stroke="#2e0a08" stroke-width="0.7"/>
<line x1="992.4" y1="366.1" x2="988.5" y2="367.3" stroke="#2e0a08" stroke-width="0.7"/>
<line x1="990.3" y1="365.1" x2="984.6" y2="365.6" stroke="#2e0a08" stroke-width="0.7"/>
<line x1="989.5" y1="363.9" x2="983.2" y2="363.4" stroke="#2e0a08" stroke-width="0.7"/>
<line x1="990.3" y1="362.7" x2="984.6" y2="361.2" stroke="#2e0a08" stroke-width="0.7"/>
<line x1="992.4" y1="361.7" x2="988.5" y2="359.5" stroke="#2e0a08" stroke-width="0.7"/>
<line x1="995.5" y1="361.2" x2="994.1" y2="358.5" stroke="#2e0a08" stroke-width="0.7"/>
<line x1="998.9" y1="361.2" x2="1000.3" y2="358.5" stroke="#2e0a08" stroke-width="0.7"/>
<line x1="1002.0" y1="361.7" x2="1005.9" y2="359.5" stroke="#2e0a08" stroke-width="0.7"/>
<line x1="1004.1" y1="362.7" x2="1009.8" y2="361.2" stroke="#2e0a08" stroke-width="0.7"/>
<polyline points="1011.2,370.0 1011.0,370.8 1010.4,371.6 1009.5,372.4 1008.2,373.1 1006.7,373.7 1004.9,374.2 1002.8,374.6 1000.6,374.9 998.4,375.0 996.0,375.0 993.8,374.9 991.6,374.6 989.5,374.2 987.7,373.7 986.2,373.1 984.9,372.4 984.0,371.6 983.4,370.8 983.2,370.0" fill="none" stroke="#2e0a08" stroke-width="0.8"/>
<polyline points="1011.2,378.0 1011.0,378.8 1010.4,379.6 1009.5,380.4 1008.2,381.1 1006.7,381.7 1004.9,382.2 1002.8,382.6 1000.6,382.9 998.4,383.0 996.0,383.0 993.8,382.9 991.6,382.6 989.5,382.2 987.7,381.7 986.2,381.1 984.9,380.4 984.0,379.6 983.4,378.8 983.2,378.0" fill="none" stroke="#2e0a08" stroke-width="0.8"/>
<polyline points="1009.2,390.0 1009.0,390.8 1008.5,391.5 1007.6,392.2 1006.5,392.9 1005.0,393.4 1003.3,393.9 1001.4,394.3 999.4,394.5 997.3,394.7 995.1,394.7 993.0,394.5 991.0,394.3 989.1,393.9 987.4,393.4 985.9,392.9 984.8,392.2 983.9,391.5 983.4,390.8 983.2,390.0" fill="none" stroke="#2e0a08" stroke-width="0.8"/>
<polyline points="1009.2,398.0 1009.0,398.8 1008.5,399.5 1007.6,400.2 1006.5,400.9 1005.0,401.4 1003.3,401.9 1001.4,402.3 999.4,402.5 997.3,402.7 995.1,402.7 993.0,402.5 991.0,402.3 989.1,401.9 987.4,401.4 985.9,400.9 984.8,400.2 983.9,399.5 983.4,398.8 983.2,398.0" fill="none" stroke="#2e0a08" stroke-width="0.8"/>
<polyline points="1015.3,408.0 1015.0,409.2 1014.2,410.3 1012.9,411.4 1011.2,412.4 1008.9,413.2 1006.4,413.9 1003.5,414.5 1000.4,414.9 997.2,415.1 993.9,415.1 990.7,414.9 987.7,414.5 984.8,413.9 982.2,413.2 980.0,412.4 978.2,411.4 976.9,410.3 976.1,409.2 975.8,408.0" fill="none" stroke="#2e0a08" stroke-width="0.8"/>
<polyline points="1025.7,416.0 1025.2,417.8 1024.0,419.6 1021.9,421.3 1019.1,422.8 1015.7,424.2 1011.7,425.3 1007.2,426.2 1002.3,426.8 997.3,427.1 992.2,427.1 987.1,426.8 982.3,426.2 977.8,425.3 973.8,424.2 970.3,422.8 967.5,421.3 965.5,419.6 964.2,417.8 963.8,416.0" fill="none" stroke="#2e0a08" stroke-width="0.8"/>
<polyline points="1032.7,422.0 1032.1,424.3 1030.6,426.5 1028.0,428.6 1024.6,430.5 1020.3,432.2 1015.3,433.6 1009.7,434.6 1003.7,435.4 997.5,435.8 991.2,435.8 984.9,435.4 978.9,434.6 973.4,433.6 968.4,432.2 964.1,430.5 960.6,428.6 958.1,426.5 956.5,424.3 956.0,422.0" fill="none" stroke="#2e0a08" stroke-width="0.8"/>
<polyline points="1034.9,428.0 1034.3,430.4 1032.7,432.7 1030.0,435.0 1026.3,437.0 1021.8,438.8 1016.5,440.2 1010.6,441.4 1004.3,442.2 997.6,442.6 990.9,442.6 984.3,442.2 978.0,441.4 972.1,440.2 966.8,438.8 962.2,437.0 958.6,435.0 955.9,432.7 954.2,430.4 953.7,428.0" fill="none" stroke="#2e0a08" stroke-width="0.8"/>
<polyline points="1031.9,534.0 1031.4,536.1 1030.0,538.1 1027.6,540.0 1024.4,541.8 1020.5,543.3 1015.9,544.6 1010.8,545.6 1005.2,546.3 999.5,546.7 993.7,546.7 987.9,546.3 982.4,545.6 977.3,544.6 972.7,543.3 968.7,541.8 965.5,540.0 963.2,538.1 961.8,536.1 961.3,534.0" fill="none" stroke="#2e0a08" stroke-width="0.8"/>
<ellipse cx="465" cy="489.3" rx="29.4" ry="13.7" fill="#9a3f35" stroke="#2e0a08" stroke-width="1.2"/>
<ellipse cx="465" cy="489.3" rx="9.702" ry="4.521" fill="none" stroke="#2e0a08" stroke-width="0.8"/>
<ellipse cx="465" cy="489.3" rx="19.404" ry="9.042" fill="none" stroke="#2e0a08" stroke-width="0.8"/>
<line x1="494.4" y1="489.3" x2="435.6" y2="489.3" stroke="#2e0a08" stroke-width="0.7"/>
<line x1="493.8" y1="492.0" x2="436.2" y2="486.6" stroke="#2e0a08" stroke-width="0.7"/>
<line x1="492.2" y1="494.5" x2="437.8" y2="484.1" stroke="#2e0a08" stroke-width="0.7"/>
<line x1="489.4" y1="496.9" x2="440.6" y2="481.7" stroke="#2e0a08" stroke-width="0.7"/>
<line x1="485.8" y1="499.0" x2="444.2" y2="479.6" stroke="#2e0a08" stroke-width="0.7"/>
<line x1="481.3" y1="500.7" x2="448.7" y2="477.9" stroke="#2e0a08" stroke-width="0.7"/>
<line x1="476.3" y1="502.0" x2="453.7" y2="476.6" stroke="#2e0a08" stroke-width="0.7"/>
<line x1="470.7" y1="502.7" x2="459.3" y2="475.9" stroke="#2e0a08" stroke-width="0.7"/>
<line x1="465.0" y1="503.0" x2="465.0" y2="475.6" stroke="#2e0a08" stroke-width="0.7"/>
<line x1="459.3" y1="502.7" x2="470.7" y2="475.9" stroke="#2e0a08" stroke-width="0.7"/>
<line x1="453.7" y1="502.0" x2="476.3" y2="476.6" stroke="#2e0a08" stroke-width="0.7"/>
<line x1="448.7" y1="500.7" x2="481.3" y2="477.9" stroke="#2e0a08" stroke-width="0.7"/>
<line x1="444.2" y1="499.0" x2="485.8" y2="479.6" stroke="#2e0a08" stroke-width="0.7"/>
<line x1="440.6" y1="496.9" x2="489.4" y2="481.7" stroke="#2e0a08" stroke-width="0.7"/>
<line x1="437.8" y1="494.5" x2="492.2" y2="484.1" stroke="#2e0a08" stroke-width="0.7"/>
<line x1="436.2" y1="492.0" x2="493.8" y2="486.6" stroke="#2e0a08" stroke-width="0.7"/>
<path d="M461 452 L460.5 484 L466.5 484 L465 452 Z" fill="#2a0806"/>
<path d="M418 406 Q440 440 461 453 L465 453 Q490 440 500 406 Q459 425 418 406 Z" fill="#2a0806"/>
<ellipse cx="458.6" cy="405.6" rx="41" ry="15.7" fill="#8e4e48" stroke="#2e0a08" stroke-width="1.2"/>
<ellipse cx="459" cy="412" rx="31" ry="10.5" fill="#9a4037" stroke="#2e0a08" stroke-width="1.2"/>
<line x1="490.0" y1="412.0" x2="428.0" y2="412.0" stroke="#2e0a08" stroke-width="0.7"/>
<line x1="488.9" y1="414.7" x2="429.1" y2="409.3" stroke="#2e0a08" stroke-width="0.7"/>
<line x1="485.8" y1="417.2" x2="432.2" y2="406.8" stroke="#2e0a08" stroke-width="0.7"/>
<line x1="480.9" y1="419.4" x2="437.1" y2="404.6" stroke="#2e0a08" stroke-width="0.7"/>
<line x1="474.5" y1="421.1" x2="443.5" y2="402.9" stroke="#2e0a08" stroke-width="0.7"/>
<line x1="467.0" y1="422.1" x2="451.0" y2="401.9" stroke="#2e0a08" stroke-width="0.7"/>
<line x1="459.0" y1="422.5" x2="459.0" y2="401.5" stroke="#2e0a08" stroke-width="0.7"/>
<line x1="451.0" y1="422.1" x2="467.0" y2="401.9" stroke="#2e0a08" stroke-width="0.7"/>
<line x1="443.5" y1="421.1" x2="474.5" y2="402.9" stroke="#2e0a08" stroke-width="0.7"/>
<line x1="437.1" y1="419.4" x2="480.9" y2="404.6" stroke="#2e0a08" stroke-width="0.7"/>
<line x1="432.2" y1="417.2" x2="485.8" y2="406.8" stroke="#2e0a08" stroke-width="0.7"/>
<line x1="429.1" y1="414.7" x2="488.9" y2="409.3" stroke="#2e0a08" stroke-width="0.7"/>
<line x1="417.6" y1="405.6" x2="428.0" y2="412.0" stroke="#2e0a08" stroke-width="0.8"/>
<line x1="418.6" y1="402.1" x2="428.8" y2="409.7" stroke="#2e0a08" stroke-width="0.8"/>
<line x1="421.7" y1="398.8" x2="431.1" y2="407.4" stroke="#2e0a08" stroke-width="0.8"/>
<line x1="426.5" y1="395.8" x2="434.8" y2="405.5" stroke="#2e0a08" stroke-width="0.8"/>
<line x1="433.0" y1="393.3" x2="439.7" y2="403.8" stroke="#2e0a08" stroke-width="0.8"/>
<line x1="440.8" y1="391.5" x2="445.5" y2="402.5" stroke="#2e0a08" stroke-width="0.8"/>
<line x1="449.5" y1="390.3" x2="452.1" y2="401.8" stroke="#2e0a08" stroke-width="0.8"/>
<line x1="458.6" y1="389.9" x2="459.0" y2="401.5" stroke="#2e0a08" stroke-width="0.8"/>
<line x1="467.7" y1="390.3" x2="465.9" y2="401.8" stroke="#2e0a08" stroke-width="0.8"/>
<line x1="476.4" y1="391.5" x2="472.5" y2="402.5" stroke="#2e0a08" stroke-width="0.8"/>
<line x1="484.2" y1="393.3" x2="478.3" y2="403.8" stroke="#2e0a08" stroke-width="0.8"/>
<line x1="490.7" y1="395.8" x2="483.2" y2="405.5" stroke="#2e0a08" stroke-width="0.8"/>
<line x1="495.5" y1="398.8" x2="486.9" y2="407.4" stroke="#2e0a08" stroke-width="0.8"/>
<line x1="498.6" y1="402.1" x2="489.2" y2="409.7" stroke="#2e0a08" stroke-width="0.8"/>
<ellipse cx="624" cy="583.3" rx="31" ry="16.9" fill="#9a3f35" stroke="#2e0a08" stroke-width="1.2"/>
<ellipse cx="624" cy="583.3" rx="12.4" ry="6.76" fill="none" stroke="#2e0a08" stroke-width="0.8"/>
<ellipse cx="624" cy="583.3" rx="21.7" ry="11.829999999999998" fill="none" stroke="#2e0a08" stroke-width="0.8"/>
<line x1="655.0" y1="583.3" x2="593.0" y2="583.3" stroke="#2e0a08" stroke-width="0.7"/>
<line x1="654.4" y1="586.6" x2="593.6" y2="580.0" stroke="#2e0a08" stroke-width="0.7"/>
<line x1="652.6" y1="589.8" x2="595.4" y2="576.8" stroke="#2e0a08" stroke-width="0.7"/>
<line x1="649.8" y1="592.7" x2="598.2" y2="573.9" stroke="#2e0a08" stroke-width="0.7"/>
<line x1="645.9" y1="595.3" x2="602.1" y2="571.3" stroke="#2e0a08" stroke-width="0.7"/>
<line x1="641.2" y1="597.4" x2="606.8" y2="569.2" stroke="#2e0a08" stroke-width="0.7"/>
<line x1="635.9" y1="598.9" x2="612.1" y2="567.7" stroke="#2e0a08" stroke-width="0.7"/>
<line x1="630.0" y1="599.9" x2="618.0" y2="566.7" stroke="#2e0a08" stroke-width="0.7"/>
<line x1="624.0" y1="600.2" x2="624.0" y2="566.4" stroke="#2e0a08" stroke-width="0.7"/>
<line x1="618.0" y1="599.9" x2="630.0" y2="566.7" stroke="#2e0a08" stroke-width="0.7"/>
<line x1="612.1" y1="598.9" x2="635.9" y2="567.7" stroke="#2e0a08" stroke-width="0.7"/>
<line x1="606.8" y1="597.4" x2="641.2" y2="569.2" stroke="#2e0a08" stroke-width="0.7"/>
<line x1="602.1" y1="595.3" x2="645.9" y2="571.3" stroke="#2e0a08" stroke-width="0.7"/>
<line x1="598.2" y1="592.7" x2="649.8" y2="573.9" stroke="#2e0a08" stroke-width="0.7"/>
<line x1="595.4" y1="589.8" x2="652.6" y2="576.8" stroke="#2e0a08" stroke-width="0.7"/>
<line x1="593.6" y1="586.6" x2="654.4" y2="580.0" stroke="#2e0a08" stroke-width="0.7"/>
<path d="M620.5 546 L620 580 L625.5 580 L625 546 Z" fill="#2a0806"/>
<linearGradient id="bgg2" x1="0" y1="0" x2="1" y2="0"><stop offset="0" stop-color="#4e1410"/><stop offset="0.35" stop-color="#7e3028"/><stop offset="0.55" stop-color="#934a42"/><stop offset="0.8" stop-color="#7e3028"/><stop offset="1" stop-color="#4a1210"/></linearGradient>
<polygon points="591.7,487.0 591.7,487.8 591.7,488.5 591.7,489.3 591.8,490.1 591.8,490.9 591.8,491.6 591.8,492.4 591.8,493.2 591.8,493.9 591.8,494.7 591.9,495.5 591.9,496.3 591.9,497.0 591.9,497.8 591.9,498.6 591.9,499.4 591.9,500.1 592.0,500.9 592.0,501.7 592.0,502.4 592.0,503.2 592.0,504.0 592.0,504.8 592.0,505.5 592.1,506.3 592.1,507.1 592.1,507.8 592.1,508.6 592.1,509.4 592.1,510.2 592.1,510.9 592.2,511.7 592.2,512.5 592.2,513.3 592.2,514.0 592.2,514.8 592.2,515.6 592.2,516.3 592.3,517.1 592.3,517.9 592.3,518.7 592.3,519.4 592.3,520.2 592.3,521.0 592.3,521.7 592.4,522.5 592.4,523.3 592.4,524.1 592.4,524.8 592.6,525.6 593.0,526.4 593.3,527.2 593.6,527.9 593.9,528.7 594.2,529.5 594.5,530.2 594.9,531.0 595.2,531.8 595.5,532.6 595.8,533.3 596.1,534.1 596.4,534.9 597.3,535.6 598.2,536.4 599.1,537.2 600.0,538.0 600.9,538.7 601.9,539.5 602.8,540.3 603.7,541.1 604.6,541.8 605.5,542.6 606.7,543.4 608.2,544.1 609.6,544.9 611.1,545.7 612.6,546.5 614.0,547.2 615.5,548.0 615.5,548.0 615.6,548.3 615.7,548.6 616.0,548.9 616.4,549.1 616.8,549.4 617.4,549.6 618.0,549.8 618.7,549.9 619.5,550.0 620.3,550.1 621.1,550.2 621.9,550.2 622.7,550.1 623.5,550.0 624.3,549.9 625.0,549.8 625.6,549.6 626.2,549.4 626.6,549.1 627.0,548.9 627.3,548.6 627.4,548.3 627.5,548.0 627.5,548.0 628.8,547.2 630.1,546.5 631.4,545.7 632.8,544.9 634.1,544.1 635.4,543.4 636.4,542.6 637.3,541.8 638.1,541.1 638.9,540.3 639.7,539.5 640.5,538.7 641.4,538.0 642.2,537.2 643.0,536.4 643.8,535.6 644.5,534.9 644.8,534.1 645.0,533.3 645.2,532.6 645.4,531.8 645.7,531.0 645.9,530.2 646.1,529.5 646.3,528.7 646.6,527.9 646.8,527.2 647.0,526.4 647.2,525.6 647.4,524.8 647.4,524.1 647.4,523.3 647.4,522.5 647.5,521.7 647.5,521.0 647.5,520.2 647.5,519.4 647.5,518.7 647.5,517.9 647.5,517.1 647.6,516.3 647.6,515.6 647.6,514.8 647.6,514.0 647.6,513.3 647.6,512.5 647.6,511.7 647.7,510.9 647.7,510.2 647.7,509.4 647.7,508.6 647.7,507.8 647.7,507.1 647.7,506.3 647.8,505.5 647.8,504.8 647.8,504.0 647.8,503.2 647.8,502.4 647.8,501.7 647.8,500.9 647.9,500.1 647.9,499.4 647.9,498.6 647.9,497.8 647.9,497.0 647.9,496.3 647.9,495.5 648.0,494.7 648.0,493.9 648.0,493.2 648.0,492.4 648.0,491.6 648.0,490.9 648.0,490.1 648.1,489.3 648.1,488.5 648.1,487.8 648.1,487.0 648.1,487.0 647.8,485.6 647.1,484.3 645.8,483.0 644.0,481.7 641.8,480.6 639.1,479.6 636.2,478.7 632.9,478.0 629.3,477.4 625.6,477.1 621.8,476.9 618.0,476.9 614.2,477.1 610.5,477.4 606.9,478.0 603.6,478.7 600.7,479.6 598.0,480.6 595.8,481.7 594.0,483.0 592.7,484.3 592.0,485.6 591.7,487.0" fill="url(#bgg2)" stroke="#2e0a08" stroke-width="1.2"/>
<polyline points="647.9,488.1 647.9,488.9 647.9,489.7 647.9,490.5 647.9,491.2 647.9,492.0 647.8,492.8 647.8,493.5 647.8,494.3 647.8,495.1 647.8,495.9 647.8,496.6 647.8,497.4 647.7,498.2 647.7,498.9 647.7,499.7 647.7,500.5 647.7,501.3 647.7,502.0 647.7,502.8 647.6,503.6 647.6,504.3 647.6,505.1 647.6,505.9 647.6,506.7 647.6,507.4 647.6,508.2 647.5,509.0 647.5,509.7 647.5,510.5 647.5,511.3 647.5,512.1 647.5,512.8 647.5,513.6 647.4,514.4 647.4,515.1 647.4,515.9 647.4,516.7 647.4,517.5 647.4,518.2 647.4,519.0 647.3,519.8 647.3,520.5 647.3,521.3 647.3,522.1 647.3,522.9 647.3,523.6 647.3,524.4 647.2,525.2 647.2,525.9 647.1,526.7 646.8,527.5 646.6,528.2 646.4,529.0 646.2,529.8 645.9,530.5 645.7,531.3 645.5,532.0 645.3,532.8 645.1,533.6 644.8,534.3 644.6,535.1 644.4,535.8 643.7,536.6 642.9,537.3 642.0,538.1 641.2,538.8 640.4,539.5 639.6,540.3 638.8,541.0 638.0,541.7 637.1,542.5 636.3,543.2 635.3,543.9 634.0,544.7 632.7,545.4 631.4,546.1 630.1,546.8 628.8,547.5 627.5,548.2" fill="none" stroke="#2e0a08" stroke-width="0.8"/>
<polyline points="646.5,490.4 646.5,491.1 646.5,491.9 646.5,492.7 646.5,493.4 646.5,494.2 646.4,495.0 646.4,495.7 646.4,496.5 646.4,497.3 646.4,498.1 646.4,498.8 646.4,499.6 646.3,500.4 646.3,501.1 646.3,501.9 646.3,502.7 646.3,503.5 646.3,504.2 646.3,505.0 646.2,505.8 646.2,506.5 646.2,507.3 646.2,508.1 646.2,508.8 646.2,509.6 646.2,510.4 646.2,511.2 646.1,511.9 646.1,512.7 646.1,513.5 646.1,514.2 646.1,515.0 646.1,515.8 646.1,516.5 646.0,517.3 646.0,518.1 646.0,518.9 646.0,519.6 646.0,520.4 646.0,521.2 646.0,521.9 646.0,522.7 645.9,523.5 645.9,524.3 645.9,525.0 645.9,525.8 645.9,526.6 645.9,527.3 645.9,528.1 645.7,528.9 645.5,529.6 645.3,530.3 645.1,531.1 644.9,531.8 644.6,532.6 644.4,533.3 644.2,534.0 644.0,534.8 643.8,535.5 643.6,536.3 643.4,537.0 643.2,537.7 642.5,538.4 641.7,539.1 641.0,539.8 640.2,540.4 639.4,541.1 638.6,541.8 637.9,542.4 637.1,543.1 636.3,543.8 635.6,544.4 634.6,545.1 633.3,545.7 632.1,546.3 630.9,546.9 629.6,547.5 628.4,548.1 627.2,548.7" fill="none" stroke="#2e0a08" stroke-width="0.8"/>
<polyline points="643.8,492.4 643.8,493.2 643.8,493.9 643.7,494.7 643.7,495.5 643.7,496.2 643.7,497.0 643.7,497.8 643.7,498.6 643.7,499.3 643.7,500.1 643.6,500.9 643.6,501.6 643.6,502.4 643.6,503.2 643.6,503.9 643.6,504.7 643.6,505.5 643.6,506.3 643.5,507.0 643.5,507.8 643.5,508.6 643.5,509.3 643.5,510.1 643.5,510.9 643.5,511.6 643.5,512.4 643.5,513.2 643.4,513.9 643.4,514.7 643.4,515.5 643.4,516.3 643.4,517.0 643.4,517.8 643.4,518.6 643.4,519.3 643.3,520.1 643.3,520.9 643.3,521.6 643.3,522.4 643.3,523.2 643.3,523.9 643.3,524.7 643.3,525.5 643.2,526.3 643.2,527.0 643.2,527.8 643.2,528.6 643.2,529.3 643.2,530.1 643.0,530.8 642.9,531.6 642.7,532.3 642.5,533.0 642.3,533.7 642.1,534.4 641.9,535.2 641.8,535.9 641.6,536.6 641.4,537.3 641.2,538.0 641.0,538.8 640.9,539.5 640.2,540.1 639.6,540.7 638.9,541.3 638.2,541.9 637.5,542.5 636.8,543.1 636.1,543.7 635.4,544.3 634.7,544.9 634.1,545.6 633.2,546.1 632.1,546.6 631.0,547.1 629.9,547.6 628.8,548.1 627.7,548.6 626.6,549.1" fill="none" stroke="#2e0a08" stroke-width="0.8"/>
<polyline points="639.8,494.2 639.8,494.9 639.8,495.7 639.8,496.5 639.8,497.3 639.8,498.0 639.8,498.8 639.8,499.6 639.8,500.3 639.7,501.1 639.7,501.9 639.7,502.6 639.7,503.4 639.7,504.2 639.7,504.9 639.7,505.7 639.7,506.5 639.7,507.2 639.7,508.0 639.6,508.8 639.6,509.5 639.6,510.3 639.6,511.1 639.6,511.9 639.6,512.6 639.6,513.4 639.6,514.2 639.6,514.9 639.6,515.7 639.5,516.5 639.5,517.2 639.5,518.0 639.5,518.8 639.5,519.5 639.5,520.3 639.5,521.1 639.5,521.8 639.5,522.6 639.5,523.4 639.4,524.2 639.4,524.9 639.4,525.7 639.4,526.5 639.4,527.2 639.4,528.0 639.4,528.8 639.4,529.5 639.4,530.3 639.4,531.1 639.3,531.8 639.2,532.6 639.1,533.3 638.9,534.0 638.8,534.7 638.7,535.4 638.5,536.1 638.4,536.8 638.2,537.5 638.1,538.2 637.9,538.9 637.8,539.6 637.6,540.3 637.5,541.0 637.0,541.6 636.4,542.1 635.9,542.7 635.3,543.2 634.7,543.8 634.2,544.3 633.6,544.9 633.0,545.4 632.5,546.0 631.9,546.5 631.2,547.0 630.3,547.4 629.4,547.9 628.5,548.3 627.6,548.7 626.6,549.1 625.7,549.5" fill="none" stroke="#2e0a08" stroke-width="0.8"/>
<polyline points="634.9,495.6 634.9,496.4 634.9,497.1 634.9,497.9 634.9,498.7 634.9,499.4 634.9,500.2 634.9,501.0 634.8,501.7 634.8,502.5 634.8,503.3 634.8,504.0 634.8,504.8 634.8,505.6 634.8,506.3 634.8,507.1 634.8,507.9 634.8,508.6 634.8,509.4 634.8,510.2 634.8,511.0 634.7,511.7 634.7,512.5 634.7,513.3 634.7,514.0 634.7,514.8 634.7,515.6 634.7,516.3 634.7,517.1 634.7,517.9 634.7,518.6 634.7,519.4 634.7,520.2 634.7,520.9 634.6,521.7 634.6,522.5 634.6,523.2 634.6,524.0 634.6,524.8 634.6,525.5 634.6,526.3 634.6,527.1 634.6,527.8 634.6,528.6 634.6,529.4 634.6,530.1 634.6,530.9 634.5,531.7 634.5,532.5 634.5,533.2 634.5,533.9 634.4,534.6 634.3,535.3 634.2,536.0 634.1,536.7 634.0,537.4 633.9,538.1 633.8,538.8 633.7,539.4 633.6,540.1 633.5,540.8 633.4,541.5 633.3,542.2 632.9,542.7 632.5,543.2 632.1,543.8 631.7,544.3 631.3,544.8 630.9,545.3 630.4,545.8 630.0,546.3 629.6,546.8 629.2,547.3 628.7,547.7 628.0,548.1 627.3,548.4 626.7,548.8 626.0,549.1 625.4,549.5 624.7,549.8" fill="none" stroke="#2e0a08" stroke-width="0.8"/>
<polyline points="629.2,496.6 629.2,497.3 629.2,498.1 629.2,498.9 629.2,499.7 629.2,500.4 629.2,501.2 629.2,502.0 629.2,502.7 629.2,503.5 629.2,504.3 629.2,505.0 629.2,505.8 629.2,506.6 629.1,507.3 629.1,508.1 629.1,508.9 629.1,509.6 629.1,510.4 629.1,511.2 629.1,511.9 629.1,512.7 629.1,513.5 629.1,514.2 629.1,515.0 629.1,515.8 629.1,516.5 629.1,517.3 629.1,518.1 629.1,518.8 629.1,519.6 629.1,520.4 629.1,521.1 629.1,521.9 629.1,522.7 629.0,523.4 629.0,524.2 629.0,525.0 629.0,525.7 629.0,526.5 629.0,527.3 629.0,528.0 629.0,528.8 629.0,529.6 629.0,530.3 629.0,531.1 629.0,531.9 629.0,532.6 629.0,533.4 629.0,534.2 628.9,534.9 628.9,535.6 628.9,536.2 628.8,536.9 628.8,537.6 628.7,538.3 628.7,539.0 628.6,539.6 628.6,540.3 628.6,541.0 628.5,541.7 628.5,542.4 628.4,543.0 628.2,543.6 628.0,544.0 627.7,544.5 627.5,545.0 627.3,545.5 627.0,545.9 626.8,546.4 626.6,546.9 626.3,547.4 626.1,547.8 625.8,548.2 625.4,548.5 625.0,548.8 624.6,549.1 624.2,549.4 623.9,549.7 623.5,550.0" fill="none" stroke="#2e0a08" stroke-width="0.8"/>
<polyline points="623.1,497.1 623.1,497.9 623.1,498.6 623.1,499.4 623.1,500.2 623.0,500.9 623.0,501.7 623.0,502.5 623.0,503.2 623.0,504.0 623.0,504.8 623.0,505.5 623.0,506.3 623.0,507.1 623.0,507.8 623.0,508.6 623.0,509.4 623.0,510.1 623.0,510.9 623.0,511.7 623.0,512.4 623.0,513.2 623.0,514.0 623.0,514.7 623.0,515.5 623.0,516.3 623.0,517.0 623.0,517.8 623.0,518.6 623.0,519.3 623.0,520.1 623.0,520.9 623.0,521.6 623.0,522.4 623.0,523.2 623.0,523.9 623.0,524.7 623.0,525.5 623.0,526.2 623.0,527.0 623.0,527.8 623.0,528.5 623.0,529.3 623.0,530.1 623.0,530.8 623.0,531.6 623.0,532.4 623.0,533.1 623.0,533.9 623.0,534.7 623.0,535.4 623.0,536.0 623.0,536.7 623.0,537.4 623.1,538.1 623.1,538.7 623.1,539.4 623.1,540.1 623.1,540.8 623.1,541.4 623.2,542.1 623.2,542.8 623.2,543.5 623.1,544.0 623.1,544.4 623.0,544.9 623.0,545.4 623.0,545.8 622.9,546.3 622.9,546.7 622.8,547.2 622.8,547.7 622.7,548.1 622.6,548.5 622.6,548.8 622.5,549.0 622.4,549.3 622.3,549.6 622.3,549.9 622.2,550.1" fill="none" stroke="#2e0a08" stroke-width="0.8"/>
<polyline points="616.7,497.1 616.7,497.9 616.7,498.6 616.7,499.4 616.7,500.2 616.8,500.9 616.8,501.7 616.8,502.5 616.8,503.2 616.8,504.0 616.8,504.8 616.8,505.5 616.8,506.3 616.8,507.1 616.8,507.8 616.8,508.6 616.8,509.4 616.8,510.1 616.8,510.9 616.8,511.7 616.8,512.4 616.8,513.2 616.8,514.0 616.8,514.7 616.8,515.5 616.8,516.3 616.8,517.0 616.8,517.8 616.8,518.6 616.8,519.3 616.8,520.1 616.8,520.9 616.8,521.6 616.8,522.4 616.8,523.2 616.8,523.9 616.8,524.7 616.8,525.5 616.8,526.2 616.8,527.0 616.8,527.8 616.8,528.5 616.8,529.3 616.8,530.1 616.8,530.8 616.8,531.6 616.8,532.4 616.8,533.1 616.8,533.9 616.8,534.7 616.9,535.4 617.0,536.0 617.0,536.7 617.1,537.4 617.2,538.1 617.3,538.7 617.3,539.4 617.4,540.1 617.5,540.8 617.6,541.4 617.6,542.1 617.7,542.8 617.8,543.5 617.9,544.0 618.1,544.4 618.2,544.9 618.4,545.4 618.5,545.8 618.7,546.3 618.8,546.7 619.0,547.2 619.1,547.7 619.2,548.1 619.4,548.5 619.7,548.8 619.9,549.0 620.1,549.3 620.4,549.6 620.6,549.9 620.8,550.1" fill="none" stroke="#2e0a08" stroke-width="0.8"/>
<polyline points="610.6,496.6 610.6,497.3 610.6,498.1 610.6,498.9 610.6,499.7 610.6,500.4 610.6,501.2 610.6,502.0 610.6,502.7 610.6,503.5 610.6,504.3 610.6,505.0 610.6,505.8 610.6,506.6 610.7,507.3 610.7,508.1 610.7,508.9 610.7,509.6 610.7,510.4 610.7,511.2 610.7,511.9 610.7,512.7 610.7,513.5 610.7,514.2 610.7,515.0 610.7,515.8 610.7,516.5 610.7,517.3 610.7,518.1 610.7,518.8 610.7,519.6 610.7,520.4 610.7,521.1 610.7,521.9 610.7,522.7 610.8,523.4 610.8,524.2 610.8,525.0 610.8,525.7 610.8,526.5 610.8,527.3 610.8,528.0 610.8,528.8 610.8,529.6 610.8,530.3 610.8,531.1 610.8,531.9 610.8,532.6 610.8,533.4 610.8,534.2 610.9,534.9 611.1,535.6 611.2,536.2 611.3,536.9 611.5,537.6 611.6,538.3 611.7,539.0 611.9,539.6 612.0,540.3 612.1,541.0 612.3,541.7 612.4,542.4 612.6,543.0 612.9,543.6 613.2,544.0 613.5,544.5 613.9,545.0 614.2,545.5 614.5,545.9 614.9,546.4 615.2,546.9 615.5,547.4 615.9,547.8 616.3,548.2 616.8,548.5 617.4,548.8 617.9,549.1 618.4,549.4 619.0,549.7 619.5,550.0" fill="none" stroke="#2e0a08" stroke-width="0.8"/>
<polyline points="604.9,495.6 604.9,496.4 604.9,497.1 604.9,497.9 604.9,498.7 604.9,499.4 604.9,500.2 604.9,501.0 605.0,501.7 605.0,502.5 605.0,503.3 605.0,504.0 605.0,504.8 605.0,505.6 605.0,506.3 605.0,507.1 605.0,507.9 605.0,508.6 605.0,509.4 605.0,510.2 605.0,511.0 605.1,511.7 605.1,512.5 605.1,513.3 605.1,514.0 605.1,514.8 605.1,515.6 605.1,516.3 605.1,517.1 605.1,517.9 605.1,518.6 605.1,519.4 605.1,520.2 605.1,520.9 605.2,521.7 605.2,522.5 605.2,523.2 605.2,524.0 605.2,524.8 605.2,525.5 605.2,526.3 605.2,527.1 605.2,527.8 605.2,528.6 605.2,529.4 605.2,530.1 605.2,530.9 605.3,531.7 605.3,532.5 605.3,533.2 605.4,533.9 605.6,534.6 605.8,535.3 606.0,536.0 606.2,536.7 606.4,537.4 606.6,538.1 606.7,538.8 606.9,539.4 607.1,540.1 607.3,540.8 607.5,541.5 607.7,542.2 608.2,542.7 608.7,543.2 609.2,543.8 609.7,544.3 610.2,544.8 610.7,545.3 611.2,545.8 611.7,546.3 612.2,546.8 612.8,547.3 613.4,547.7 614.2,548.1 615.0,548.4 615.9,548.8 616.7,549.1 617.5,549.5 618.3,549.8" fill="none" stroke="#2e0a08" stroke-width="0.8"/>
<polyline points="600.0,494.2 600.0,494.9 600.0,495.7 600.0,496.5 600.0,497.3 600.0,498.0 600.0,498.8 600.0,499.6 600.0,500.3 600.1,501.1 600.1,501.9 600.1,502.6 600.1,503.4 600.1,504.2 600.1,504.9 600.1,505.7 600.1,506.5 600.1,507.2 600.1,508.0 600.2,508.8 600.2,509.5 600.2,510.3 600.2,511.1 600.2,511.9 600.2,512.6 600.2,513.4 600.2,514.2 600.2,514.9 600.2,515.7 600.3,516.5 600.3,517.2 600.3,518.0 600.3,518.8 600.3,519.5 600.3,520.3 600.3,521.1 600.3,521.8 600.3,522.6 600.3,523.4 600.4,524.2 600.4,524.9 600.4,525.7 600.4,526.5 600.4,527.2 600.4,528.0 600.4,528.8 600.4,529.5 600.4,530.3 600.4,531.1 600.5,531.8 600.6,532.6 600.9,533.3 601.1,534.0 601.4,534.7 601.6,535.4 601.8,536.1 602.1,536.8 602.3,537.5 602.5,538.2 602.8,538.9 603.0,539.6 603.3,540.3 603.5,541.0 604.1,541.6 604.7,542.1 605.4,542.7 606.1,543.2 606.7,543.8 607.4,544.3 608.1,544.9 608.7,545.4 609.4,546.0 610.0,546.5 610.9,547.0 612.0,547.4 613.0,547.9 614.1,548.3 615.1,548.7 616.2,549.1 617.3,549.5" fill="none" stroke="#2e0a08" stroke-width="0.8"/>
<polyline points="596.0,492.4 596.0,493.2 596.0,493.9 596.1,494.7 596.1,495.5 596.1,496.2 596.1,497.0 596.1,497.8 596.1,498.6 596.1,499.3 596.1,500.1 596.2,500.9 596.2,501.6 596.2,502.4 596.2,503.2 596.2,503.9 596.2,504.7 596.2,505.5 596.2,506.3 596.3,507.0 596.3,507.8 596.3,508.6 596.3,509.3 596.3,510.1 596.3,510.9 596.3,511.6 596.3,512.4 596.3,513.2 596.4,513.9 596.4,514.7 596.4,515.5 596.4,516.3 596.4,517.0 596.4,517.8 596.4,518.6 596.4,519.3 596.5,520.1 596.5,520.9 596.5,521.6 596.5,522.4 596.5,523.2 596.5,523.9 596.5,524.7 596.5,525.5 596.6,526.3 596.6,527.0 596.6,527.8 596.6,528.6 596.6,529.3 596.6,530.1 596.8,530.8 597.1,531.6 597.4,532.3 597.7,533.0 597.9,533.7 598.2,534.4 598.5,535.2 598.8,535.9 599.0,536.6 599.3,537.3 599.6,538.0 599.9,538.8 600.1,539.5 600.8,540.1 601.6,540.7 602.4,541.3 603.2,541.9 604.0,542.5 604.8,543.1 605.5,543.7 606.3,544.3 607.1,544.9 607.9,545.6 608.9,546.1 610.1,546.6 611.4,547.1 612.7,547.6 613.9,548.1 615.2,548.6 616.4,549.1" fill="none" stroke="#2e0a08" stroke-width="0.8"/>
<polyline points="593.3,490.4 593.3,491.1 593.3,491.9 593.3,492.7 593.3,493.4 593.3,494.2 593.4,495.0 593.4,495.7 593.4,496.5 593.4,497.3 593.4,498.1 593.4,498.8 593.4,499.6 593.5,500.4 593.5,501.1 593.5,501.9 593.5,502.7 593.5,503.5 593.5,504.2 593.5,505.0 593.6,505.8 593.6,506.5 593.6,507.3 593.6,508.1 593.6,508.8 593.6,509.6 593.6,510.4 593.6,511.2 593.7,511.9 593.7,512.7 593.7,513.5 593.7,514.2 593.7,515.0 593.7,515.8 593.7,516.5 593.8,517.3 593.8,518.1 593.8,518.9 593.8,519.6 593.8,520.4 593.8,521.2 593.8,521.9 593.8,522.7 593.9,523.5 593.9,524.3 593.9,525.0 593.9,525.8 593.9,526.6 593.9,527.3 593.9,528.1 594.2,528.9 594.5,529.6 594.8,530.3 595.1,531.1 595.4,531.8 595.7,532.6 596.0,533.3 596.3,534.0 596.6,534.8 596.9,535.5 597.2,536.3 597.5,537.0 597.8,537.7 598.6,538.4 599.4,539.1 600.3,539.8 601.2,540.4 602.0,541.1 602.9,541.8 603.8,542.4 604.6,543.1 605.5,543.8 606.4,544.4 607.5,545.1 608.9,545.7 610.3,546.3 611.7,546.9 613.1,547.5 614.4,548.1 615.8,548.7" fill="none" stroke="#2e0a08" stroke-width="0.8"/>
<polyline points="591.9,488.1 591.9,488.9 591.9,489.7 591.9,490.5 591.9,491.2 591.9,492.0 592.0,492.8 592.0,493.5 592.0,494.3 592.0,495.1 592.0,495.9 592.0,496.6 592.0,497.4 592.1,498.2 592.1,498.9 592.1,499.7 592.1,500.5 592.1,501.3 592.1,502.0 592.1,502.8 592.2,503.6 592.2,504.3 592.2,505.1 592.2,505.9 592.2,506.7 592.2,507.4 592.2,508.2 592.3,509.0 592.3,509.7 592.3,510.5 592.3,511.3 592.3,512.1 592.3,512.8 592.3,513.6 592.4,514.4 592.4,515.1 592.4,515.9 592.4,516.7 592.4,517.5 592.4,518.2 592.4,519.0 592.5,519.8 592.5,520.5 592.5,521.3 592.5,522.1 592.5,522.9 592.5,523.6 592.5,524.4 592.6,525.2 592.6,525.9 592.8,526.7 593.1,527.5 593.5,528.2 593.8,529.0 594.1,529.8 594.4,530.5 594.7,531.3 595.0,532.0 595.3,532.8 595.7,533.6 596.0,534.3 596.3,535.1 596.6,535.8 597.4,536.6 598.3,537.3 599.2,538.1 600.1,538.8 601.1,539.5 602.0,540.3 602.9,541.0 603.8,541.7 604.7,542.5 605.6,543.2 606.8,543.9 608.2,544.7 609.7,545.4 611.2,546.1 612.6,546.8 614.1,547.5 615.5,548.2" fill="none" stroke="#2e0a08" stroke-width="0.8"/>
<polygon points="648.1,487.0 647.6,488.8 646.3,490.6 644.1,492.2 641.1,493.7 637.5,494.9 633.3,495.9 628.6,496.7 623.7,497.1 618.6,497.1 613.6,496.9 608.8,496.3 604.4,495.5 600.4,494.3 597.1,493.0 594.5,491.4 592.7,489.7 591.8,487.9 591.8,486.1 592.7,484.3 594.5,482.6 597.1,481.0 600.4,479.7 604.4,478.5 608.8,477.7 613.6,477.1 618.6,476.9 623.7,476.9 628.6,477.3 633.3,478.1 637.5,479.1 641.1,480.3 644.1,481.8 646.3,483.4 647.6,485.2 648.1,487.0" fill="#8a4038" stroke="#2e0a08" stroke-width="1"/>
<polyline points="647.8,505.0 647.4,506.7 646.3,508.3 644.4,509.8 641.9,511.2 638.8,512.4 635.1,513.4 631.1,514.2 626.7,514.7 622.2,515.0 617.6,515.0 613.1,514.7 608.7,514.2 604.7,513.4 601.0,512.4 597.9,511.2 595.4,509.8 593.5,508.3 592.4,506.7 592.0,505.0" fill="none" stroke="#2e0a08" stroke-width="0.8"/>
<polyline points="647.5,520.0 647.1,521.6 646.0,523.2 644.2,524.7 641.7,526.1 638.6,527.3 635.0,528.3 631.0,529.1 626.7,529.6 622.2,529.9 617.6,529.9 613.1,529.6 608.8,529.1 604.8,528.3 601.2,527.3 598.1,526.1 595.6,524.7 593.8,523.2 592.7,521.6 592.3,520.0" fill="none" stroke="#2e0a08" stroke-width="0.8"/>
<polyline points="644.5,535.0 644.2,536.4 643.2,537.8 641.6,539.1 639.4,540.3 636.8,541.4 633.6,542.2 630.1,542.9 626.4,543.4 622.5,543.6 618.5,543.6 614.6,543.4 610.9,542.9 607.4,542.2 604.2,541.4 601.6,540.3 599.4,539.1 597.8,537.8 596.8,536.4 596.5,535.0" fill="none" stroke="#2e0a08" stroke-width="0.8"/>
<ellipse cx="619.9" cy="487" rx="28.2" ry="11" fill="#8a4a45" stroke="#2e0a08" stroke-width="1.2"/>
<ellipse cx="619.9" cy="491" rx="24" ry="8.5" fill="#9a4037" stroke="#2e0a08" stroke-width="0.9"/>
</g>
</svg>
<div id="timeline" class="abs"></div>
<svg class="abs" style="left:0;top:909px" width="1582" height="108" viewBox="0 909 1582 108">
<rect x="0" y="909" width="1582" height="108" fill="#464646"/>
<path d="M1.5 912 L1.5 961 M4 912 L4 961" stroke="#8a8a8a" stroke-width="0.8" stroke-dasharray="1 1"/>
<rect x="8" y="914" width="14" height="16" rx="2" fill="#575757"/>
<path d="M17 918 L13 922 L17 926" fill="none" stroke="#cfcfcf" stroke-width="1"/>
<rect x="24" y="914" width="123" height="16" rx="2" fill="#5f5f5f"/>
<text x="63" y="927" font-family="Liberation Sans" font-size="11.5" fill="#e8e8e8">0</text><text x="75" y="927" font-family="Liberation Sans" font-size="11.5" fill="#e8e8e8">/</text><text x="88" y="927" font-family="Liberation Sans" font-size="11.5" fill="#e8e8e8">100</text>
<rect x="149" y="914" width="14" height="16" rx="2" fill="#575757"/>
<path d="M154 918 L158 922 L154 926" fill="none" stroke="#cfcfcf" stroke-width="1"/>
<rect x="7" y="935" width="1575" height="1" fill="#151515"/>
<rect x="57" y="936" width="1525" height="25" fill="#2c2c2c"/>
<path d="M21 943 L23 943 M21 945 L23 945 M21 947 L23 947 M21 949 L23 949 M21 951 L23 951" stroke="#cfcfcf" stroke-width="1"/>
<path d="M26 951 Q28 940 31 946 T36 948" fill="none" stroke="#3ec3c3" stroke-width="1.6"/>
<rect x="61" y="937" width="7" height="23" fill="#8a8526"/>
<rect x="63.8" y="936" width="1" height="25" fill="#8e8e8e"/><rect x="81.4" y="936" width="1" height="11" fill="#8e8e8e"/><rect x="99.1" y="936" width="1" height="11" fill="#8e8e8e"/><rect x="116.7" y="936" width="1" height="11" fill="#8e8e8e"/><rect x="134.3" y="936" width="1" height="11" fill="#8e8e8e"/><rect x="151.9" y="936" width="1" height="25" fill="#8e8e8e"/><rect x="169.6" y="936" width="1" height="11" fill="#8e8e8e"/><rect x="187.2" y="936" width="1" height="11" fill="#8e8e8e"/><rect x="204.8" y="936" width="1" height="11" fill="#8e8e8e"/><rect x="222.4" y="936" width="1" height="11" fill="#8e8e8e"/><rect x="240.1" y="936" width="1" height="25" fill="#8e8e8e"/><rect x="257.7" y="936" width="1" height="11" fill="#8e8e8e"/><rect x="275.3" y="936" width="1" height="11" fill="#8e8e8e"/><rect x="293.0" y="936" width="1" height="11" fill="#8e8e8e"/><rect x="310.6" y="936" width="1" height="11" fill="#8e8e8e"/><rect x="328.2" y="936" width="1" height="25" fill="#8e8e8e"/><rect x="345.8" y="936" width="1" height="11" fill="#8e8e8e"/><rect x="363.5" y="936" width="1" height="11" fill="#8e8e8e"/><rect x="381.1" y="936" width="1" height="11" fill="#8e8e8e"/><rect x="398.7" y="936" width="1" height="11" fill="#8e8e8e"/><rect x="416.3" y="936" width="1" height="25" fill="#8e8e8e"/><rect x="434.0" y="936" width="1" height="11" fill="#8e8e8e"/><rect x="451.6" y="936" width="1" height="11" fill="#8e8e8e"/><rect x="469.2" y="936" width="1" height="11" fill="#8e8e8e"/><rect x="486.8" y="936" width="1" height="11" fill="#8e8e8e"/><rect x="504.5" y="936" width="1" height="25" fill="#8e8e8e"/><rect x="522.1" y="936" width="1" height="11" fill="#8e8e8e"/><rect x="539.7" y="936" width="1" height="11" fill="#8e8e8e"/><rect x="557.4" y="936" width="1" height="11" fill="#8e8e8e"/><rect x="575.0" y="936" width="1" height="11" fill="#8e8e8e"/><rect x="592.6" y="936" width="1" height="25" fill="#8e8e8e"/><rect x="610.2" y="936" width="1" height="11" fill="#8e8e8e"/><rect x="627.9" y="936" width="1" height="11" fill="#8e8e8e"/><rect x="645.5" y="936" width="1" height="11" fill="#8e8e8e"/><rect x="663.1" y="936" width="1" height="11" fill="#8e8e8e"/><rect x="680.7" y="936" width="1" height="25" fill="#8e8e8e"/><rect x="698.4" y="936" width="1" height="11" fill="#8e8e8e"/><rect x="716.0" y="936" width="1" height="11" fill="#8e8e8e"/><rect x="733.6" y="936" width="1" height="11" fill="#8e8e8e"/><rect x="751.3" y="936" width="1" height="11" fill="#8e8e8e"/><rect x="768.9" y="936" width="1" height="25" fill="#8e8e8e"/><rect x="786.5" y="936" width="1" height="11" fill="#8e8e8e"/><rect x="804.1" y="936" width="1" height="11" fill="#8e8e8e"/><rect x="821.8" y="936" width="1" height="11" fill="#8e8e8e"/><rect x="839.4" y="936" width="1" height="11" fill="#8e8e8e"/><rect x="857.0" y="936" width="1" height="25" fill="#8e8e8e"/><rect x="874.6" y="936" width="1" height="11" fill="#8e8e8e"/><rect x="892.3" y="936" width="1" height="11" fill="#8e8e8e"/><rect x="909.9" y="936" width="1" height="11" fill="#8e8e8e"/><rect x="927.5" y="936" width="1" height="11" fill="#8e8e8e"/><rect x="945.1" y="936" width="1" height="25" fill="#8e8e8e"/><rect x="962.8" y="936" width="1" height="11" fill="#8e8e8e"/><rect x="980.4" y="936" width="1" height="11" fill="#8e8e8e"/><rect x="998.0" y="936" width="1" height="11" fill="#8e8e8e"/><rect x="1015.7" y="936" width="1" height="11" fill="#8e8e8e"/><rect x="1033.3" y="936" width="1" height="25" fill="#8e8e8e"/><rect x="1050.9" y="936" width="1" height="11" fill="#8e8e8e"/><rect x="1068.5" y="936" width="1" height="11" fill="#8e8e8e"/><rect x="1086.2" y="936" width="1" height="11" fill="#8e8e8e"/><rect x="1103.8" y="936" width="1" height="11" fill="#8e8e8e"/><rect x="1121.4" y="936" width="1" height="25" fill="#8e8e8e"/><rect x="1139.0" y="936" width="1" height="11" fill="#8e8e8e"/><rect x="1156.7" y="936" width="1" height="11" fill="#8e8e8e"/><rect x="1174.3" y="936" width="1" height="11" fill="#8e8e8e"/><rect x="1191.9" y="936" width="1" height="11" fill="#8e8e8e"/><rect x="1209.6" y="936" width="1" height="25" fill="#8e8e8e"/><rect x="1227.2" y="936" width="1" height="11" fill="#8e8e8e"/><rect x="1244.8" y="936" width="1" height="11" fill="#8e8e8e"/><rect x="1262.4" y="936" width="1" height="11" fill="#8e8e8e"/><rect x="1280.1" y="936" width="1" height="11" fill="#8e8e8e"/><rect x="1297.7" y="936" width="1" height="25" fill="#8e8e8e"/><rect x="1315.3" y="936" width="1" height="11" fill="#8e8e8e"/><rect x="1332.9" y="936" width="1" height="11" fill="#8e8e8e"/><rect x="1350.6" y="936" width="1" height="11" fill="#8e8e8e"/><rect x="1368.2" y="936" width="1" height="11" fill="#8e8e8e"/><rect x="1385.8" y="936" width="1" height="25" fill="#8e8e8e"/><rect x="1403.5" y="936" width="1" height="11" fill="#8e8e8e"/><rect x="1421.1" y="936" width="1" height="11" fill="#8e8e8e"/><rect x="1438.7" y="936" width="1" height="11" fill="#8e8e8e"/><rect x="1456.3" y="936" width="1" height="11" fill="#8e8e8e"/><rect x="1474.0" y="936" width="1" height="25" fill="#8e8e8e"/><rect x="1491.6" y="936" width="1" height="11" fill="#8e8e8e"/><rect x="1509.2" y="936" width="1" height="11" fill="#8e8e8e"/><rect x="1526.8" y="936" width="1" height="11" fill="#8e8e8e"/><rect x="1544.5" y="936" width="1" height="11" fill="#8e8e8e"/><rect x="1562.1" y="936" width="1" height="25" fill="#8e8e8e"/>
<text x="152.4" y="957" text-anchor="middle" font-family="Liberation Sans" font-size="11" fill="#e0e0e0">5</text><text x="240.6" y="957" text-anchor="middle" font-family="Liberation Sans" font-size="11" fill="#e0e0e0">10</text><text x="328.7" y="957" text-anchor="middle" font-family="Liberation Sans" font-size="11" fill="#e0e0e0">15</text><text x="416.8" y="957" text-anchor="middle" font-family="Liberation Sans" font-size="11" fill="#e0e0e0">20</text><text x="505.0" y="957" text-anchor="middle" font-family="Liberation Sans" font-size="11" fill="#e0e0e0">25</text><text x="593.1" y="957" text-anchor="middle" font-family="Liberation Sans" font-size="11" fill="#e0e0e0">30</text><text x="681.2" y="957" text-anchor="middle" font-family="Liberation Sans" font-size="11" fill="#e0e0e0">35</text><text x="769.4" y="957" text-anchor="middle" font-family="Liberation Sans" font-size="11" fill="#e0e0e0">40</text><text x="857.5" y="957" text-anchor="middle" font-family="Liberation Sans" font-size="11" fill="#e0e0e0">45</text><text x="945.6" y="957" text-anchor="middle" font-family="Liberation Sans" font-size="11" fill="#e0e0e0">50</text><text x="1033.8" y="957" text-anchor="middle" font-family="Liberation Sans" font-size="11" fill="#e0e0e0">55</text><text x="1121.9" y="957" text-anchor="middle" font-family="Liberation Sans" font-size="11" fill="#e0e0e0">60</text><text x="1210.1" y="957" text-anchor="middle" font-family="Liberation Sans" font-size="11" fill="#e0e0e0">65</text><text x="1298.2" y="957" text-anchor="middle" font-family="Liberation Sans" font-size="11" fill="#e0e0e0">70</text><text x="1386.3" y="957" text-anchor="middle" font-family="Liberation Sans" font-size="11" fill="#e0e0e0">75</text><text x="1474.5" y="957" text-anchor="middle" font-family="Liberation Sans" font-size="11" fill="#e0e0e0">80</text><text x="1562.6" y="957" text-anchor="middle" font-family="Liberation Sans" font-size="11" fill="#e0e0e0">85</text>
<text x="64.5" y="957" text-anchor="middle" font-family="Liberation Sans" font-size="11" fill="#f0ec78">0</text>
<rect x="0" y="966" width="64" height="47" fill="#9a9a9a"/>
<rect x="0" y="967" width="62" height="21" fill="#dcc5c5"/>
<rect x="0" y="991" width="62" height="21" fill="#ffffff"/>
<rect x="0" y="996.5" width="60" height="1.2" fill="#1a1aee"/>
<rect x="69" y="964" width="2" height="52" fill="#222"/>
<text x="76.00 88.00 100.00 112.00 124.00 136.00 148.00" y="984" font-family="Liberation Sans" font-weight="normal" font-size="12" fill="#eaeaea" xml:space="preserve" >未选定任何对象</text>
<text x="76.00 88.00 100.00 112.00" y="1008" font-family="Liberation Sans" font-weight="normal" font-size="12" fill="#eaeaea" xml:space="preserve" >渲染时间</text>
<text x="135" y="1008" font-family="Liberation Sans" font-size="12" fill="#eaeaea">0:00:43</text>
<path d="M963 973 L963 970 L966 970 M975 970 L978 970 L978 973 M978 983 L978 986 L975 986 M966 986 L963 986 L963 983" fill="none" stroke="#222" stroke-width="1.4"/>
<rect x="966" y="974" width="9" height="8" fill="none" stroke="#222" stroke-width="1"/>
<path d="M994 976 L994 972 A4 4 0 0 1 1002 972 L1002 976" fill="none" stroke="#222" stroke-width="1.6"/>
<rect x="992" y="976" width="12" height="10" rx="1" fill="#2a2a2a"/>
<rect x="1018" y="971" width="13" height="14" fill="#d8d8d8"/>
<circle cx="1024.5" cy="978" r="3" fill="#464646"/>
<path d="M1018 971 L1022 975 M1031 971 L1027 975 M1018 985 L1022 981 M1031 985 L1027 981" stroke="#464646" stroke-width="2"/>
<text x="1041" y="983" font-family="Liberation Mono" font-weight="bold" font-size="11" fill="#e8e8e8">X:</text>
<rect x="1056" y="970" width="57" height="17" fill="#575757"/>
<text x="1059" y="983" font-family="Liberation Mono" font-size="11" fill="#8f8f8f">21.976cm</text>
<text x="1127" y="983" font-family="Liberation Mono" font-weight="bold" font-size="11" fill="#e8e8e8">Y:</text>
<rect x="1142" y="970" width="57" height="17" fill="#575757"/>
<text x="1145" y="983" font-family="Liberation Mono" font-size="11" fill="#8f8f8f">81.997cm</text>
<text x="1213" y="983" font-family="Liberation Mono" font-weight="bold" font-size="11" fill="#e8e8e8">Z:</text>
<rect x="1228" y="970" width="57" height="17" fill="#575757"/>
<text x="1231" y="983" font-family="Liberation Mono" font-size="11" fill="#8f8f8f">0.0cm</text>
<text x="1300.00 1312.00" y="984" font-family="Liberation Sans" font-weight="normal" font-size="12" fill="#eaeaea" xml:space="preserve" >栅格</text>
<text x="1331" y="984" font-family="Liberation Mono" font-size="11.5" fill="#eaeaea" textLength="47" lengthAdjust="spacingAndGlyphs">= 10.0cm</text>
<path d="M1415 973 L1415 983 M1418 978 L1423 973 L1423 983 Z M1423 978 L1428 973 L1428 983 Z" fill="#cfcfcf" stroke="#cfcfcf" stroke-width="1.6"/><rect x="1435" y="970" width="1" height="17" fill="#1c1c1c"/><path d="M1441 978 L1446 973 L1446 983 Z" fill="#cfcfcf"/><rect x="1447.5" y="973" width="2" height="10" fill="#cfcfcf"/><rect x="1451" y="973" width="2" height="10" fill="#cfcfcf"/><path d="M1464 970 L1477 978 L1464 986 Z" fill="#cfcfcf"/><path d="M1478 984 L1480 984 L1480 982 Z" fill="#cfcfcf"/><rect x="1486" y="973" width="2" height="10" fill="#cfcfcf"/><rect x="1489.5" y="973" width="2" height="10" fill="#cfcfcf"/><path d="M1493 973 L1498 978 L1493 983 Z" fill="#cfcfcf"/><rect x="1507" y="970" width="1" height="17" fill="#1c1c1c"/><path d="M1513 973 L1518 978 L1513 983 Z M1518 973 L1523 978 L1518 983 Z" fill="#cfcfcf"/><rect x="1524" y="973" width="2" height="10" fill="#cfcfcf"/>
<rect x="1161" y="996" width="1" height="16" fill="#1c1c1c"/>
<rect x="1167" y="994" width="20" height="20" rx="3" fill="#5a5a5a"/>
<path d="M1172 998 L1177 996.5 L1182 998 L1182 1004 Q1181 1009 1177 1011 Q1173 1009 1172 1004 Z" fill="#d8d8d8"/>
<path d="M1177 997 L1177 1004 L1182 1004 L1182 998 Z M1172 1004 L1177 1004 L1177 1011 Q1173 1009 1172 1004 Z" fill="#333"/>
<text x="1193.00 1205.00 1217.00" y="1009" font-family="Liberation Sans" font-weight="normal" font-size="12" fill="#eaeaea" xml:space="preserve" >启用:</text>
<circle cx="1233" cy="1003" r="4.5" fill="#3ad03a"/>
<rect x="1243" y="994" width="20" height="20" rx="3" fill="#5a5a5a"/>
<circle cx="1253" cy="1004" r="6.5" fill="#eaeaea"/>
<text x="1253" y="1008" text-anchor="middle" font-family="Liberation Sans" font-weight="bold" font-size="10" fill="#333">0</text>
<rect x="1269" y="996" width="1" height="16" fill="#1c1c1c"/>
<rect x="1275" y="993" width="21" height="21" rx="3" fill="#5b8fd0"/>
<path d="M1285.5 997 L1291 1000 L1291 1007 L1285.5 1010 L1280 1007 L1280 1000 Z M1280 1000 L1285.5 1003 L1291 1000 M1285.5 1003 L1285.5 1010" fill="none" stroke="#333" stroke-width="1.2"/>
<text x="1300.00 1312.00 1324.00 1336.00 1348.00 1360.00" y="1009" font-family="Liberation Sans" font-weight="normal" font-size="12" fill="#eaeaea" xml:space="preserve" >添加时间标记</text>
<path d="M1415 1003 L1419 999 L1419 1007 Z M1422 999 L1426 1003 L1422 1007 Z" fill="#cfcfcf"/>
<rect x="1434" y="995" width="1" height="17" fill="#1c1c1c"/>
<rect x="1437" y="993" width="68" height="17" fill="#5a5a5a"/>
<text x="1441" y="1006" font-family="Liberation Sans" font-size="11" fill="#dedede">0</text>
<path d="M1497 999 L1500 996 L1503 999 Z M1497 1004 L1503 1004 L1500 1007 Z" fill="#cfcfcf"/>
<rect x="1508" y="995" width="1" height="17" fill="#1c1c1c"/>
<circle cx="1518" cy="999" r="4.5" fill="#d8d8d8"/><path d="M1518 996 L1518 999 L1520 999" stroke="#333" stroke-width="1" fill="none"/>
<circle cx="1523" cy="1005" r="3" fill="none" stroke="#f0a623" stroke-width="2"/>
<rect x="1543" y="968" width="39" height="44" rx="4" fill="#575757"/>
<path d="M1560 975 L1560 1000 M1548 987 L1572 987" stroke="#dcdcdc" stroke-width="5"/>
<circle cx="1576" cy="995" r="3.5" fill="none" stroke="#3ec3c3" stroke-width="2"/>
<path d="M1573 998 L1565 1006 M1567 1004 L1569 1006" stroke="#3ec3c3" stroke-width="2.2"/>
</svg>
<svg class="abs" style="left:0;top:0;pointer-events:none" width="1582" height="1017" viewBox="0 0 1582 1017">
<text x="5.00 8.06 14.48 17.54 20.59 23.65 26.70 34.04 40.16 45.66 51.16 59.10 65.22 74.38 80.50 84.16 90.28 96.40 102.51 108.63 111.69 114.74 117.80 120.86 131.86 142.86 145.91 148.97 152.03 155.08 158.14 169.14 180.14 183.19 189.62 192.67 203.67 214.67" y="76" font-family="Liberation Sans" font-weight="normal" font-size="11" fill="#dcdcdc" xml:space="preserve" >[+]  [PhysCamera001]  [标准 ]  [粘土 + 边面 ]</text>
<path d="M24.5 881.5 L48 876.5" stroke="#e01010" stroke-width="1.2"/><path d="M24.5 881.5 L24.5 860.5" stroke="#1020f0" stroke-width="1.2"/><path d="M24.5 881.5 L16 873" stroke="#10c010" stroke-width="1"/>
<path d="M47.5 871.5 L52.5 877 M52.5 871.5 L47.5 877" stroke="#e01010" stroke-width="1.2"/>
<path d="M25.5 855.5 L30 855.5 L25.5 861 L30 861" fill="none" stroke="#1020f0" stroke-width="1.1"/>
<path d="M14.5 866.5 L17 870 L19.5 866.5 M17 870 L14.5 874" fill="none" stroke="#10c010" stroke-width="1.1"/>
<text x="751.5" y="770" font-family="Liberation Sans" font-size="11" fill="#1a0a0a" opacity="0.7">VRayPlane</text>
<text x="750.5" y="769" font-family="Liberation Sans" font-size="11" fill="#ffffff">VRayPlane</text>
<g opacity="0.12"><use href="#logo" x="0" y="0" width="190" height="61" transform="translate(146,88) scale(0.551,0.483)" stroke="#ffffff" stroke-width="5.5"/><use href="#logo" x="0" y="0" width="190" height="61" transform="translate(938,88) scale(0.551,0.483)" stroke="#ffffff" stroke-width="5.5"/><text x="529" y="109" font-family="Liberation Sans" font-weight="bold" font-size="23.5" fill="#ffffff" textLength="129" lengthAdjust="spacingAndGlyphs">www.om.cn</text><text x="1321" y="109" font-family="Liberation Sans" font-weight="bold" font-size="23.5" fill="#ffffff" textLength="129" lengthAdjust="spacingAndGlyphs">www.om.cn</text><use href="#logo" x="0" y="0" width="190" height="61" transform="translate(345,294) scale(0.551,0.483)" stroke="#ffffff" stroke-width="5.5"/><use href="#logo" x="0" y="0" width="190" height="61" transform="translate(1136,294) scale(0.551,0.483)" stroke="#ffffff" stroke-width="5.5"/><text x="-63" y="315" font-family="Liberation Sans" font-weight="bold" font-size="23.5" fill="#ffffff" textLength="129" lengthAdjust="spacingAndGlyphs">www.om.cn</text><text x="728" y="315" font-family="Liberation Sans" font-weight="bold" font-size="23.5" fill="#ffffff" textLength="129" lengthAdjust="spacingAndGlyphs">www.om.cn</text><text x="1518" y="315" font-family="Liberation Sans" font-weight="bold" font-size="23.5" fill="#ffffff" textLength="129" lengthAdjust="spacingAndGlyphs">www.om.cn</text><use href="#logo" x="0" y="0" width="190" height="61" transform="translate(146,500) scale(0.551,0.483)" stroke="#ffffff" stroke-width="5.5"/><use href="#logo" x="0" y="0" width="190" height="61" transform="translate(938,500) scale(0.551,0.483)" stroke="#ffffff" stroke-width="5.5"/><text x="529" y="521" font-family="Liberation Sans" font-weight="bold" font-size="23.5" fill="#ffffff" textLength="129" lengthAdjust="spacingAndGlyphs">www.om.cn</text><text x="1321" y="521" font-family="Liberation Sans" font-weight="bold" font-size="23.5" fill="#ffffff" textLength="129" lengthAdjust="spacingAndGlyphs">www.om.cn</text><use href="#logo" x="0" y="0" width="190" height="61" transform="translate(345,706) scale(0.551,0.483)" stroke="#ffffff" stroke-width="5.5"/><use href="#logo" x="0" y="0" width="190" height="61" transform="translate(1136,706) scale(0.551,0.483)" stroke="#ffffff" stroke-width="5.5"/><text x="-63" y="727" font-family="Liberation Sans" font-weight="bold" font-size="23.5" fill="#ffffff" textLength="129" lengthAdjust="spacingAndGlyphs">www.om.cn</text><text x="728" y="727" font-family="Liberation Sans" font-weight="bold" font-size="23.5" fill="#ffffff" textLength="129" lengthAdjust="spacingAndGlyphs">www.om.cn</text><text x="1518" y="727" font-family="Liberation Sans" font-weight="bold" font-size="23.5" fill="#ffffff" textLength="129" lengthAdjust="spacingAndGlyphs">www.om.cn</text><use href="#logo" x="0" y="0" width="190" height="61" transform="translate(146,912) scale(0.551,0.483)" stroke="#ffffff" stroke-width="5.5"/><use href="#logo" x="0" y="0" width="190" height="61" transform="translate(938,912) scale(0.551,0.483)" stroke="#ffffff" stroke-width="5.5"/><text x="529" y="933" font-family="Liberation Sans" font-weight="bold" font-size="23.5" fill="#ffffff" textLength="129" lengthAdjust="spacingAndGlyphs">www.om.cn</text><text x="1321" y="933" font-family="Liberation Sans" font-weight="bold" font-size="23.5" fill="#ffffff" textLength="129" lengthAdjust="spacingAndGlyphs">www.om.cn</text></g>
<use href="#logo" x="0" y="0" width="190" height="61" transform="translate(1300.6,855)" stroke="#f2f2f2" stroke-width="4.2"/>
</svg>
</body></html>
